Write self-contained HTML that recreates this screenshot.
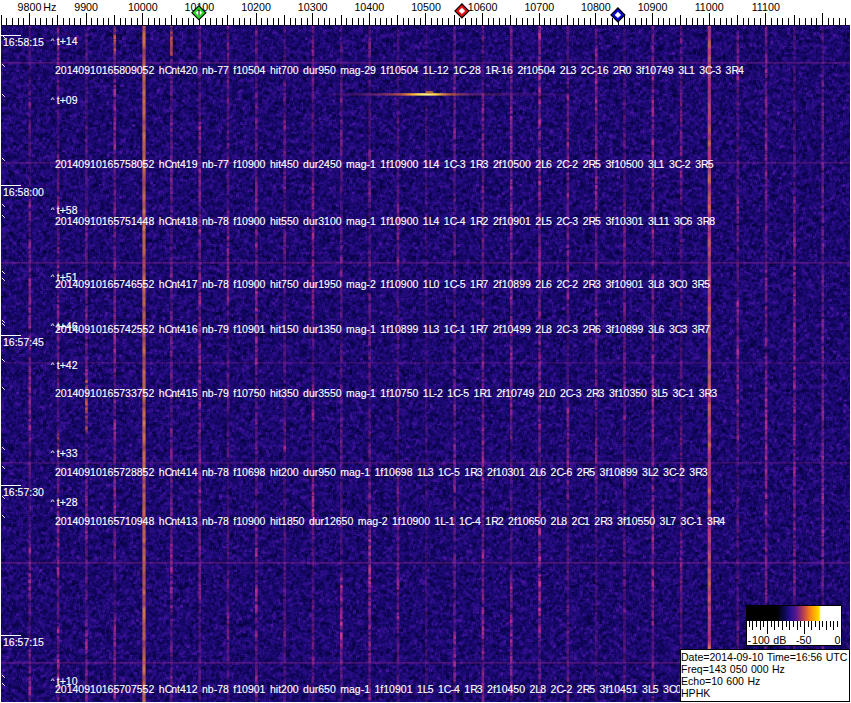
<!DOCTYPE html><html><head><meta charset="utf-8"><style>
html,body{margin:0;padding:0;width:851px;height:703px;overflow:hidden;background:#fff;}
body{position:relative;font-family:"Liberation Sans",sans-serif;}
.t b{font-weight:normal;letter-spacing:-1px;}
.t{position:absolute;white-space:pre;color:#fff;font-size:10.5px;line-height:12px;word-spacing:1.58px;-webkit-text-stroke:0.12px #fff;}
.k{position:absolute;white-space:pre;color:#000;font-size:10.7px;line-height:12px;word-spacing:0.5px;}
svg{position:absolute;left:0;top:0;}
</style></head><body>
<svg width="851" height="703" viewBox="0 0 851 703"><defs><filter id="nz" x="0" y="0" width="851" height="703" filterUnits="userSpaceOnUse" color-interpolation-filters="sRGB"><feTurbulence type="fractalNoise" baseFrequency="0.7 0.6" numOctaves="2" seed="3" result="t1"/><feColorMatrix in="t1" type="matrix" values="1 0 0 0 0  1 0 0 0 0  1 0 0 0 0  0 0 0 0 1" result="u1"/><feMorphology in="u1" operator="dilate" radius="1 1" result="d"/><feMorphology in="u1" operator="erode" radius="1 1" result="e"/><feComposite in="d" in2="e" operator="arithmetic" k2="0.5" k3="0.5" result="de"/><feComponentTransfer in="de" result="b1"><feFuncR type="linear" slope="2.6" intercept="-0.8"/><feFuncG type="linear" slope="2.6" intercept="-0.8"/><feFuncB type="linear" slope="2.6" intercept="-0.8"/></feComponentTransfer><feTurbulence type="fractalNoise" baseFrequency="0.14 0.18" numOctaves="1" seed="5" result="t2"/><feColorMatrix in="t2" type="matrix" values="1 0 0 0 0  1 0 0 0 0  1 0 0 0 0  0 0 0 0 1" result="u2"/><feComposite in="b1" in2="u2" operator="arithmetic" k1="0" k2="0.8" k3="0.45" k4="-0.125"/><feColorMatrix type="matrix" values="1 0 0 0 0  1 0 0 0 0  1 0 0 0 0  0 0 0 0 1"/><feComponentTransfer><feFuncR type="table" tableValues="0.015 0.02 0.03 0.045 0.07 0.105 0.15 0.21 0.27 0.32 0.36"/><feFuncG type="table" tableValues="0 0 0.006 0.012 0.024 0.035 0.048 0.064 0.08 0.095 0.11"/><feFuncB type="table" tableValues="0.2 0.22 0.25 0.3 0.365 0.44 0.51 0.565 0.605 0.635 0.655"/></feComponentTransfer></filter></defs><rect x="1" y="25" width="849" height="677" fill="#22127a"/><rect x="1" y="25" width="849" height="677" filter="url(#nz)"/></svg>
<svg width="851" height="703" viewBox="0 0 851 703"><defs><filter id="lb" x="0" y="0" width="851" height="703" filterUnits="userSpaceOnUse" color-interpolation-filters="sRGB"><feTurbulence type="fractalNoise" baseFrequency="0.045 0.3" numOctaves="2" seed="9" result="lt"/><feColorMatrix in="lt" type="matrix" values="0 0 0 0 0  0 0 0 0 0  0 0 0 0 0  2.2 0 0 0 -0.35" result="lm"/><feComposite in="SourceGraphic" in2="lm" operator="in" result="lc"/><feGaussianBlur in="lc" stdDeviation="0.55 0.4"/></filter><filter id="lb2" x="0" y="0" width="851" height="703" filterUnits="userSpaceOnUse"><feGaussianBlur stdDeviation="0.5 0.3"/></filter></defs><defs><linearGradient id="g0" x1="0" y1="0" x2="0" y2="1"><stop offset="0.000" stop-opacity="0.30" stop-color="#b42e8e"/><stop offset="0.009" stop-opacity="0.23" stop-color="#b42e8e"/><stop offset="0.018" stop-opacity="0.43" stop-color="#b42e8e"/><stop offset="0.027" stop-opacity="0.20" stop-color="#b42e8e"/><stop offset="0.036" stop-opacity="0.38" stop-color="#b42e8e"/><stop offset="0.045" stop-opacity="0.32" stop-color="#b42e8e"/><stop offset="0.054" stop-opacity="0.20" stop-color="#b42e8e"/><stop offset="0.062" stop-opacity="0.37" stop-color="#b42e8e"/><stop offset="0.071" stop-opacity="0.19" stop-color="#b42e8e"/><stop offset="0.080" stop-opacity="0.34" stop-color="#b42e8e"/><stop offset="0.089" stop-opacity="0.39" stop-color="#b42e8e"/><stop offset="0.098" stop-opacity="0.41" stop-color="#b42e8e"/><stop offset="0.107" stop-opacity="0.66" stop-color="#b42e8e"/><stop offset="0.116" stop-opacity="0.96" stop-color="#b42e8e"/><stop offset="0.125" stop-opacity="0.22" stop-color="#b42e8e"/><stop offset="0.134" stop-opacity="0.26" stop-color="#b42e8e"/><stop offset="0.143" stop-opacity="0.42" stop-color="#b42e8e"/><stop offset="0.152" stop-opacity="0.55" stop-color="#b42e8e"/><stop offset="0.161" stop-opacity="0.40" stop-color="#b42e8e"/><stop offset="0.170" stop-opacity="0.33" stop-color="#b42e8e"/><stop offset="0.179" stop-opacity="0.56" stop-color="#b42e8e"/><stop offset="0.188" stop-opacity="0.19" stop-color="#b42e8e"/><stop offset="0.196" stop-opacity="0.51" stop-color="#b42e8e"/><stop offset="0.205" stop-opacity="0.29" stop-color="#b42e8e"/><stop offset="0.214" stop-opacity="0.23" stop-color="#b42e8e"/><stop offset="0.223" stop-opacity="0.22" stop-color="#b42e8e"/><stop offset="0.232" stop-opacity="0.30" stop-color="#b42e8e"/><stop offset="0.241" stop-opacity="0.49" stop-color="#b42e8e"/><stop offset="0.250" stop-opacity="0.25" stop-color="#b42e8e"/><stop offset="0.259" stop-opacity="0.77" stop-color="#b42e8e"/><stop offset="0.268" stop-opacity="0.82" stop-color="#b42e8e"/><stop offset="0.277" stop-opacity="0.62" stop-color="#b42e8e"/><stop offset="0.286" stop-opacity="0.75" stop-color="#b42e8e"/><stop offset="0.295" stop-opacity="0.38" stop-color="#b42e8e"/><stop offset="0.304" stop-opacity="0.38" stop-color="#b42e8e"/><stop offset="0.312" stop-opacity="0.49" stop-color="#b42e8e"/><stop offset="0.321" stop-opacity="0.85" stop-color="#b42e8e"/><stop offset="0.330" stop-opacity="0.66" stop-color="#b42e8e"/><stop offset="0.339" stop-opacity="0.57" stop-color="#b42e8e"/><stop offset="0.348" stop-opacity="0.78" stop-color="#b42e8e"/><stop offset="0.357" stop-opacity="0.68" stop-color="#b42e8e"/><stop offset="0.366" stop-opacity="0.56" stop-color="#b42e8e"/><stop offset="0.375" stop-opacity="0.93" stop-color="#b42e8e"/><stop offset="0.384" stop-opacity="0.86" stop-color="#b42e8e"/><stop offset="0.393" stop-opacity="0.52" stop-color="#b42e8e"/><stop offset="0.402" stop-opacity="0.77" stop-color="#b42e8e"/><stop offset="0.411" stop-opacity="0.73" stop-color="#b42e8e"/><stop offset="0.420" stop-opacity="0.99" stop-color="#b42e8e"/><stop offset="0.429" stop-opacity="0.88" stop-color="#b42e8e"/><stop offset="0.438" stop-opacity="0.55" stop-color="#b42e8e"/><stop offset="0.446" stop-opacity="1.00" stop-color="#b42e8e"/><stop offset="0.455" stop-opacity="0.43" stop-color="#b42e8e"/><stop offset="0.464" stop-opacity="0.65" stop-color="#b42e8e"/><stop offset="0.473" stop-opacity="0.91" stop-color="#b42e8e"/><stop offset="0.482" stop-opacity="0.45" stop-color="#b42e8e"/><stop offset="0.491" stop-opacity="0.70" stop-color="#b42e8e"/><stop offset="0.500" stop-opacity="0.37" stop-color="#b42e8e"/><stop offset="0.509" stop-opacity="0.84" stop-color="#b42e8e"/><stop offset="0.518" stop-opacity="0.91" stop-color="#b42e8e"/><stop offset="0.527" stop-opacity="0.77" stop-color="#b42e8e"/><stop offset="0.536" stop-opacity="0.99" stop-color="#b42e8e"/><stop offset="0.545" stop-opacity="0.57" stop-color="#b42e8e"/><stop offset="0.554" stop-opacity="0.86" stop-color="#b42e8e"/><stop offset="0.562" stop-opacity="0.78" stop-color="#b42e8e"/><stop offset="0.571" stop-opacity="0.77" stop-color="#b42e8e"/><stop offset="0.580" stop-opacity="0.68" stop-color="#b42e8e"/><stop offset="0.589" stop-opacity="0.97" stop-color="#b42e8e"/><stop offset="0.598" stop-opacity="1.00" stop-color="#b42e8e"/><stop offset="0.607" stop-opacity="0.69" stop-color="#b42e8e"/><stop offset="0.616" stop-opacity="0.43" stop-color="#b42e8e"/><stop offset="0.625" stop-opacity="0.20" stop-color="#b42e8e"/><stop offset="0.634" stop-opacity="0.45" stop-color="#b42e8e"/><stop offset="0.643" stop-opacity="0.43" stop-color="#b42e8e"/><stop offset="0.652" stop-opacity="0.56" stop-color="#b42e8e"/><stop offset="0.661" stop-opacity="0.50" stop-color="#b42e8e"/><stop offset="0.670" stop-opacity="0.29" stop-color="#b42e8e"/><stop offset="0.679" stop-opacity="0.33" stop-color="#b42e8e"/><stop offset="0.688" stop-opacity="0.44" stop-color="#b42e8e"/><stop offset="0.696" stop-opacity="0.18" stop-color="#b42e8e"/><stop offset="0.705" stop-opacity="0.36" stop-color="#b42e8e"/><stop offset="0.714" stop-opacity="0.24" stop-color="#b42e8e"/><stop offset="0.723" stop-opacity="0.22" stop-color="#b42e8e"/><stop offset="0.732" stop-opacity="0.20" stop-color="#b42e8e"/><stop offset="0.741" stop-opacity="0.48" stop-color="#b42e8e"/><stop offset="0.750" stop-opacity="0.23" stop-color="#b42e8e"/><stop offset="0.759" stop-opacity="0.52" stop-color="#b42e8e"/><stop offset="0.768" stop-opacity="0.63" stop-color="#b42e8e"/><stop offset="0.777" stop-opacity="0.99" stop-color="#b42e8e"/><stop offset="0.786" stop-opacity="0.40" stop-color="#b42e8e"/><stop offset="0.795" stop-opacity="0.67" stop-color="#b42e8e"/><stop offset="0.804" stop-opacity="0.75" stop-color="#b42e8e"/><stop offset="0.812" stop-opacity="1.00" stop-color="#b42e8e"/><stop offset="0.821" stop-opacity="0.95" stop-color="#b42e8e"/><stop offset="0.830" stop-opacity="0.99" stop-color="#b42e8e"/><stop offset="0.839" stop-opacity="0.55" stop-color="#b42e8e"/><stop offset="0.848" stop-opacity="0.65" stop-color="#b42e8e"/><stop offset="0.857" stop-opacity="0.32" stop-color="#b42e8e"/><stop offset="0.866" stop-opacity="0.52" stop-color="#b42e8e"/><stop offset="0.875" stop-opacity="0.55" stop-color="#b42e8e"/><stop offset="0.884" stop-opacity="0.23" stop-color="#b42e8e"/><stop offset="0.893" stop-opacity="0.24" stop-color="#b42e8e"/><stop offset="0.902" stop-opacity="0.27" stop-color="#b42e8e"/><stop offset="0.911" stop-opacity="0.27" stop-color="#b42e8e"/><stop offset="0.920" stop-opacity="0.36" stop-color="#b42e8e"/><stop offset="0.929" stop-opacity="0.78" stop-color="#b42e8e"/><stop offset="0.938" stop-opacity="0.53" stop-color="#b42e8e"/><stop offset="0.946" stop-opacity="0.34" stop-color="#b42e8e"/><stop offset="0.955" stop-opacity="0.65" stop-color="#b42e8e"/><stop offset="0.964" stop-opacity="0.61" stop-color="#b42e8e"/><stop offset="0.973" stop-opacity="0.76" stop-color="#b42e8e"/><stop offset="0.982" stop-opacity="1.00" stop-color="#b42e8e"/><stop offset="0.991" stop-opacity="0.86" stop-color="#b42e8e"/><stop offset="1.000" stop-opacity="0.38" stop-color="#b42e8e"/></linearGradient></defs><defs><linearGradient id="g1" x1="0" y1="0" x2="0" y2="1"><stop offset="0.000" stop-opacity="0.61" stop-color="#b42e8e"/><stop offset="0.009" stop-opacity="0.64" stop-color="#b42e8e"/><stop offset="0.018" stop-opacity="0.29" stop-color="#b42e8e"/><stop offset="0.027" stop-opacity="0.77" stop-color="#b42e8e"/><stop offset="0.036" stop-opacity="0.70" stop-color="#b42e8e"/><stop offset="0.045" stop-opacity="0.75" stop-color="#b42e8e"/><stop offset="0.054" stop-opacity="0.71" stop-color="#b42e8e"/><stop offset="0.062" stop-opacity="0.48" stop-color="#b42e8e"/><stop offset="0.071" stop-opacity="0.48" stop-color="#b42e8e"/><stop offset="0.080" stop-opacity="0.32" stop-color="#b42e8e"/><stop offset="0.089" stop-opacity="0.62" stop-color="#b42e8e"/><stop offset="0.098" stop-opacity="0.29" stop-color="#b42e8e"/><stop offset="0.107" stop-opacity="0.29" stop-color="#b42e8e"/><stop offset="0.116" stop-opacity="0.38" stop-color="#b42e8e"/><stop offset="0.125" stop-opacity="0.35" stop-color="#b42e8e"/><stop offset="0.134" stop-opacity="0.45" stop-color="#b42e8e"/><stop offset="0.143" stop-opacity="0.29" stop-color="#b42e8e"/><stop offset="0.152" stop-opacity="0.26" stop-color="#b42e8e"/><stop offset="0.161" stop-opacity="0.34" stop-color="#b42e8e"/><stop offset="0.170" stop-opacity="0.31" stop-color="#b42e8e"/><stop offset="0.179" stop-opacity="0.46" stop-color="#b42e8e"/><stop offset="0.188" stop-opacity="0.27" stop-color="#b42e8e"/><stop offset="0.196" stop-opacity="0.75" stop-color="#b42e8e"/><stop offset="0.205" stop-opacity="0.61" stop-color="#b42e8e"/><stop offset="0.214" stop-opacity="0.34" stop-color="#b42e8e"/><stop offset="0.223" stop-opacity="0.40" stop-color="#b42e8e"/><stop offset="0.232" stop-opacity="0.45" stop-color="#b42e8e"/><stop offset="0.241" stop-opacity="0.46" stop-color="#b42e8e"/><stop offset="0.250" stop-opacity="0.33" stop-color="#b42e8e"/><stop offset="0.259" stop-opacity="0.97" stop-color="#b42e8e"/><stop offset="0.268" stop-opacity="1.00" stop-color="#b42e8e"/><stop offset="0.277" stop-opacity="0.69" stop-color="#b42e8e"/><stop offset="0.286" stop-opacity="0.53" stop-color="#b42e8e"/><stop offset="0.295" stop-opacity="0.31" stop-color="#b42e8e"/><stop offset="0.304" stop-opacity="0.31" stop-color="#b42e8e"/><stop offset="0.312" stop-opacity="0.45" stop-color="#b42e8e"/><stop offset="0.321" stop-opacity="0.41" stop-color="#b42e8e"/><stop offset="0.330" stop-opacity="0.73" stop-color="#b42e8e"/><stop offset="0.339" stop-opacity="0.35" stop-color="#b42e8e"/><stop offset="0.348" stop-opacity="0.27" stop-color="#b42e8e"/><stop offset="0.357" stop-opacity="0.80" stop-color="#b42e8e"/><stop offset="0.366" stop-opacity="0.56" stop-color="#b42e8e"/><stop offset="0.375" stop-opacity="0.34" stop-color="#b42e8e"/><stop offset="0.384" stop-opacity="0.57" stop-color="#b42e8e"/><stop offset="0.393" stop-opacity="0.27" stop-color="#b42e8e"/><stop offset="0.402" stop-opacity="0.56" stop-color="#b42e8e"/><stop offset="0.411" stop-opacity="0.81" stop-color="#b42e8e"/><stop offset="0.420" stop-opacity="0.75" stop-color="#b42e8e"/><stop offset="0.429" stop-opacity="0.65" stop-color="#b42e8e"/><stop offset="0.438" stop-opacity="0.41" stop-color="#b42e8e"/><stop offset="0.446" stop-opacity="0.47" stop-color="#b42e8e"/><stop offset="0.455" stop-opacity="0.35" stop-color="#b42e8e"/><stop offset="0.464" stop-opacity="0.70" stop-color="#b42e8e"/><stop offset="0.473" stop-opacity="0.56" stop-color="#b42e8e"/><stop offset="0.482" stop-opacity="0.70" stop-color="#b42e8e"/><stop offset="0.491" stop-opacity="0.44" stop-color="#b42e8e"/><stop offset="0.500" stop-opacity="0.38" stop-color="#b42e8e"/><stop offset="0.509" stop-opacity="0.49" stop-color="#b42e8e"/><stop offset="0.518" stop-opacity="0.56" stop-color="#b42e8e"/><stop offset="0.527" stop-opacity="0.51" stop-color="#b42e8e"/><stop offset="0.536" stop-opacity="0.49" stop-color="#b42e8e"/><stop offset="0.545" stop-opacity="0.49" stop-color="#b42e8e"/><stop offset="0.554" stop-opacity="0.46" stop-color="#b42e8e"/><stop offset="0.562" stop-opacity="0.26" stop-color="#b42e8e"/><stop offset="0.571" stop-opacity="0.38" stop-color="#b42e8e"/><stop offset="0.580" stop-opacity="0.31" stop-color="#b42e8e"/><stop offset="0.589" stop-opacity="0.19" stop-color="#b42e8e"/><stop offset="0.598" stop-opacity="0.19" stop-color="#b42e8e"/><stop offset="0.607" stop-opacity="0.68" stop-color="#d0584e"/><stop offset="0.616" stop-opacity="0.66" stop-color="#d0584e"/><stop offset="0.625" stop-opacity="0.45" stop-color="#b42e8e"/><stop offset="0.634" stop-opacity="0.55" stop-color="#b42e8e"/><stop offset="0.643" stop-opacity="0.35" stop-color="#b42e8e"/><stop offset="0.652" stop-opacity="0.54" stop-color="#b42e8e"/><stop offset="0.661" stop-opacity="0.56" stop-color="#b42e8e"/><stop offset="0.670" stop-opacity="0.55" stop-color="#b42e8e"/><stop offset="0.679" stop-opacity="0.61" stop-color="#b42e8e"/><stop offset="0.688" stop-opacity="0.50" stop-color="#b42e8e"/><stop offset="0.696" stop-opacity="0.51" stop-color="#b42e8e"/><stop offset="0.705" stop-opacity="0.49" stop-color="#b42e8e"/><stop offset="0.714" stop-opacity="0.49" stop-color="#b42e8e"/><stop offset="0.723" stop-opacity="0.81" stop-color="#b42e8e"/><stop offset="0.732" stop-opacity="1.00" stop-color="#b42e8e"/><stop offset="0.741" stop-opacity="0.97" stop-color="#b42e8e"/><stop offset="0.750" stop-opacity="0.70" stop-color="#b42e8e"/><stop offset="0.759" stop-opacity="0.83" stop-color="#b42e8e"/><stop offset="0.768" stop-opacity="0.94" stop-color="#b42e8e"/><stop offset="0.777" stop-opacity="0.40" stop-color="#b42e8e"/><stop offset="0.786" stop-opacity="0.83" stop-color="#b42e8e"/><stop offset="0.795" stop-opacity="1.00" stop-color="#b42e8e"/><stop offset="0.804" stop-opacity="0.92" stop-color="#b42e8e"/><stop offset="0.812" stop-opacity="0.90" stop-color="#b42e8e"/><stop offset="0.821" stop-opacity="0.36" stop-color="#b42e8e"/><stop offset="0.830" stop-opacity="0.25" stop-color="#b42e8e"/><stop offset="0.839" stop-opacity="0.48" stop-color="#b42e8e"/><stop offset="0.848" stop-opacity="0.31" stop-color="#b42e8e"/><stop offset="0.857" stop-opacity="0.49" stop-color="#b42e8e"/><stop offset="0.866" stop-opacity="0.55" stop-color="#b42e8e"/><stop offset="0.875" stop-opacity="0.33" stop-color="#b42e8e"/><stop offset="0.884" stop-opacity="0.64" stop-color="#b42e8e"/><stop offset="0.893" stop-opacity="1.00" stop-color="#b42e8e"/><stop offset="0.902" stop-opacity="0.88" stop-color="#b42e8e"/><stop offset="0.911" stop-opacity="0.47" stop-color="#b42e8e"/><stop offset="0.920" stop-opacity="0.43" stop-color="#b42e8e"/><stop offset="0.929" stop-opacity="0.45" stop-color="#b42e8e"/><stop offset="0.938" stop-opacity="1.00" stop-color="#b42e8e"/><stop offset="0.946" stop-opacity="0.94" stop-color="#b42e8e"/><stop offset="0.955" stop-opacity="0.45" stop-color="#b42e8e"/><stop offset="0.964" stop-opacity="0.96" stop-color="#b42e8e"/><stop offset="0.973" stop-opacity="1.00" stop-color="#b42e8e"/><stop offset="0.982" stop-opacity="0.83" stop-color="#b42e8e"/><stop offset="0.991" stop-opacity="0.60" stop-color="#b42e8e"/><stop offset="1.000" stop-opacity="0.39" stop-color="#b42e8e"/></linearGradient></defs><defs><linearGradient id="g2" x1="0" y1="0" x2="0" y2="1"><stop offset="0.000" stop-opacity="0.23" stop-color="#b42e8e"/><stop offset="0.009" stop-opacity="0.18" stop-color="#b42e8e"/><stop offset="0.018" stop-opacity="0.55" stop-color="#b42e8e"/><stop offset="0.027" stop-opacity="0.43" stop-color="#b42e8e"/><stop offset="0.036" stop-opacity="0.38" stop-color="#b42e8e"/><stop offset="0.045" stop-opacity="0.54" stop-color="#b42e8e"/><stop offset="0.054" stop-opacity="0.34" stop-color="#b42e8e"/><stop offset="0.062" stop-opacity="0.52" stop-color="#b42e8e"/><stop offset="0.071" stop-opacity="0.50" stop-color="#b42e8e"/><stop offset="0.080" stop-opacity="0.26" stop-color="#b42e8e"/><stop offset="0.089" stop-opacity="0.27" stop-color="#b42e8e"/><stop offset="0.098" stop-opacity="0.29" stop-color="#b42e8e"/><stop offset="0.107" stop-opacity="0.27" stop-color="#b42e8e"/><stop offset="0.116" stop-opacity="0.40" stop-color="#b42e8e"/><stop offset="0.125" stop-opacity="0.28" stop-color="#b42e8e"/><stop offset="0.134" stop-opacity="0.34" stop-color="#b42e8e"/><stop offset="0.143" stop-opacity="0.23" stop-color="#b42e8e"/><stop offset="0.152" stop-opacity="0.53" stop-color="#b42e8e"/><stop offset="0.161" stop-opacity="0.31" stop-color="#b42e8e"/><stop offset="0.170" stop-opacity="0.35" stop-color="#b42e8e"/><stop offset="0.179" stop-opacity="0.40" stop-color="#b42e8e"/><stop offset="0.188" stop-opacity="0.53" stop-color="#b42e8e"/><stop offset="0.196" stop-opacity="0.34" stop-color="#b42e8e"/><stop offset="0.205" stop-opacity="0.53" stop-color="#b42e8e"/><stop offset="0.214" stop-opacity="0.37" stop-color="#b42e8e"/><stop offset="0.223" stop-opacity="0.38" stop-color="#b42e8e"/><stop offset="0.232" stop-opacity="0.38" stop-color="#b42e8e"/><stop offset="0.241" stop-opacity="0.18" stop-color="#b42e8e"/><stop offset="0.250" stop-opacity="0.35" stop-color="#b42e8e"/><stop offset="0.259" stop-opacity="0.36" stop-color="#b42e8e"/><stop offset="0.268" stop-opacity="0.26" stop-color="#b42e8e"/><stop offset="0.277" stop-opacity="0.71" stop-color="#b42e8e"/><stop offset="0.286" stop-opacity="0.35" stop-color="#b42e8e"/><stop offset="0.295" stop-opacity="0.53" stop-color="#b42e8e"/><stop offset="0.304" stop-opacity="0.67" stop-color="#b42e8e"/><stop offset="0.312" stop-opacity="0.57" stop-color="#b42e8e"/><stop offset="0.321" stop-opacity="0.44" stop-color="#b42e8e"/><stop offset="0.330" stop-opacity="0.55" stop-color="#b42e8e"/><stop offset="0.339" stop-opacity="0.57" stop-color="#b42e8e"/><stop offset="0.348" stop-opacity="0.70" stop-color="#b42e8e"/><stop offset="0.357" stop-opacity="0.32" stop-color="#b42e8e"/><stop offset="0.366" stop-opacity="0.58" stop-color="#b42e8e"/><stop offset="0.375" stop-opacity="0.40" stop-color="#b42e8e"/><stop offset="0.384" stop-opacity="0.41" stop-color="#b42e8e"/><stop offset="0.393" stop-opacity="0.70" stop-color="#b42e8e"/><stop offset="0.402" stop-opacity="0.55" stop-color="#b42e8e"/><stop offset="0.411" stop-opacity="0.58" stop-color="#b42e8e"/><stop offset="0.420" stop-opacity="0.69" stop-color="#b42e8e"/><stop offset="0.429" stop-opacity="0.78" stop-color="#b42e8e"/><stop offset="0.438" stop-opacity="0.51" stop-color="#b42e8e"/><stop offset="0.446" stop-opacity="0.61" stop-color="#b42e8e"/><stop offset="0.455" stop-opacity="0.54" stop-color="#b42e8e"/><stop offset="0.464" stop-opacity="0.55" stop-color="#b42e8e"/><stop offset="0.473" stop-opacity="0.65" stop-color="#b42e8e"/><stop offset="0.482" stop-opacity="0.51" stop-color="#b42e8e"/><stop offset="0.491" stop-opacity="0.56" stop-color="#b42e8e"/><stop offset="0.500" stop-opacity="0.53" stop-color="#b42e8e"/><stop offset="0.509" stop-opacity="1.00" stop-color="#b42e8e"/><stop offset="0.518" stop-opacity="0.86" stop-color="#b42e8e"/><stop offset="0.527" stop-opacity="1.00" stop-color="#d0584e"/><stop offset="0.536" stop-opacity="1.00" stop-color="#d0584e"/><stop offset="0.545" stop-opacity="0.74" stop-color="#d0584e"/><stop offset="0.554" stop-opacity="1.00" stop-color="#d0584e"/><stop offset="0.562" stop-opacity="1.00" stop-color="#d0584e"/><stop offset="0.571" stop-opacity="1.00" stop-color="#d0584e"/><stop offset="0.580" stop-opacity="0.61" stop-color="#d0584e"/><stop offset="0.589" stop-opacity="0.59" stop-color="#d0584e"/><stop offset="0.598" stop-opacity="0.93" stop-color="#d0584e"/><stop offset="0.607" stop-opacity="0.20" stop-color="#b42e8e"/><stop offset="0.616" stop-opacity="0.27" stop-color="#b42e8e"/><stop offset="0.625" stop-opacity="0.20" stop-color="#b42e8e"/><stop offset="0.634" stop-opacity="0.44" stop-color="#b42e8e"/><stop offset="0.643" stop-opacity="0.48" stop-color="#b42e8e"/><stop offset="0.652" stop-opacity="0.53" stop-color="#b42e8e"/><stop offset="0.661" stop-opacity="0.24" stop-color="#b42e8e"/><stop offset="0.670" stop-opacity="0.45" stop-color="#b42e8e"/><stop offset="0.679" stop-opacity="0.83" stop-color="#b42e8e"/><stop offset="0.688" stop-opacity="0.44" stop-color="#b42e8e"/><stop offset="0.696" stop-opacity="1.00" stop-color="#b42e8e"/><stop offset="0.705" stop-opacity="1.00" stop-color="#b42e8e"/><stop offset="0.714" stop-opacity="0.50" stop-color="#b42e8e"/><stop offset="0.723" stop-opacity="1.00" stop-color="#b42e8e"/><stop offset="0.732" stop-opacity="0.64" stop-color="#b42e8e"/><stop offset="0.741" stop-opacity="0.70" stop-color="#b42e8e"/><stop offset="0.750" stop-opacity="1.00" stop-color="#b42e8e"/><stop offset="0.759" stop-opacity="0.73" stop-color="#b42e8e"/><stop offset="0.768" stop-opacity="0.35" stop-color="#b42e8e"/><stop offset="0.777" stop-opacity="0.50" stop-color="#b42e8e"/><stop offset="0.786" stop-opacity="0.55" stop-color="#b42e8e"/><stop offset="0.795" stop-opacity="0.45" stop-color="#b42e8e"/><stop offset="0.804" stop-opacity="0.37" stop-color="#b42e8e"/><stop offset="0.812" stop-opacity="0.44" stop-color="#b42e8e"/><stop offset="0.821" stop-opacity="0.67" stop-color="#b42e8e"/><stop offset="0.830" stop-opacity="0.27" stop-color="#b42e8e"/><stop offset="0.839" stop-opacity="0.57" stop-color="#b42e8e"/><stop offset="0.848" stop-opacity="0.51" stop-color="#b42e8e"/><stop offset="0.857" stop-opacity="0.18" stop-color="#b42e8e"/><stop offset="0.866" stop-opacity="0.30" stop-color="#b42e8e"/><stop offset="0.875" stop-opacity="0.42" stop-color="#b42e8e"/><stop offset="0.884" stop-opacity="0.72" stop-color="#b42e8e"/><stop offset="0.893" stop-opacity="0.39" stop-color="#b42e8e"/><stop offset="0.902" stop-opacity="1.00" stop-color="#b42e8e"/><stop offset="0.911" stop-opacity="0.93" stop-color="#b42e8e"/><stop offset="0.920" stop-opacity="1.00" stop-color="#b42e8e"/><stop offset="0.929" stop-opacity="0.42" stop-color="#b42e8e"/><stop offset="0.938" stop-opacity="0.54" stop-color="#b42e8e"/><stop offset="0.946" stop-opacity="0.37" stop-color="#b42e8e"/><stop offset="0.955" stop-opacity="0.92" stop-color="#b42e8e"/><stop offset="0.964" stop-opacity="0.54" stop-color="#b42e8e"/><stop offset="0.973" stop-opacity="0.43" stop-color="#b42e8e"/><stop offset="0.982" stop-opacity="0.65" stop-color="#b42e8e"/><stop offset="0.991" stop-opacity="1.00" stop-color="#b42e8e"/><stop offset="1.000" stop-opacity="0.49" stop-color="#b42e8e"/></linearGradient></defs><defs><linearGradient id="g3" x1="0" y1="0" x2="0" y2="1"><stop offset="0.000" stop-opacity="0.74" stop-color="#d0584e"/><stop offset="0.009" stop-opacity="0.62" stop-color="#d0584e"/><stop offset="0.018" stop-opacity="1.00" stop-color="#d0584e"/><stop offset="0.027" stop-opacity="1.00" stop-color="#d0584e"/><stop offset="0.036" stop-opacity="1.00" stop-color="#d0584e"/><stop offset="0.045" stop-opacity="0.56" stop-color="#d0584e"/><stop offset="0.054" stop-opacity="0.45" stop-color="#b42e8e"/><stop offset="0.062" stop-opacity="1.00" stop-color="#b42e8e"/><stop offset="0.071" stop-opacity="0.78" stop-color="#b42e8e"/><stop offset="0.080" stop-opacity="0.47" stop-color="#b42e8e"/><stop offset="0.089" stop-opacity="1.00" stop-color="#b42e8e"/><stop offset="0.098" stop-opacity="0.97" stop-color="#b42e8e"/><stop offset="0.107" stop-opacity="1.00" stop-color="#b42e8e"/><stop offset="0.116" stop-opacity="0.48" stop-color="#b42e8e"/><stop offset="0.125" stop-opacity="1.00" stop-color="#b42e8e"/><stop offset="0.134" stop-opacity="0.46" stop-color="#b42e8e"/><stop offset="0.143" stop-opacity="1.00" stop-color="#b42e8e"/><stop offset="0.152" stop-opacity="0.81" stop-color="#b42e8e"/><stop offset="0.161" stop-opacity="0.71" stop-color="#b42e8e"/><stop offset="0.170" stop-opacity="0.90" stop-color="#b42e8e"/><stop offset="0.179" stop-opacity="1.00" stop-color="#b42e8e"/><stop offset="0.188" stop-opacity="0.64" stop-color="#b42e8e"/><stop offset="0.196" stop-opacity="0.52" stop-color="#b42e8e"/><stop offset="0.205" stop-opacity="0.87" stop-color="#b42e8e"/><stop offset="0.214" stop-opacity="0.62" stop-color="#b42e8e"/><stop offset="0.223" stop-opacity="0.50" stop-color="#b42e8e"/><stop offset="0.232" stop-opacity="0.55" stop-color="#b42e8e"/><stop offset="0.241" stop-opacity="0.45" stop-color="#b42e8e"/><stop offset="0.250" stop-opacity="0.58" stop-color="#b42e8e"/><stop offset="0.259" stop-opacity="0.57" stop-color="#b42e8e"/><stop offset="0.268" stop-opacity="0.57" stop-color="#b42e8e"/><stop offset="0.277" stop-opacity="0.91" stop-color="#b42e8e"/><stop offset="0.286" stop-opacity="0.55" stop-color="#b42e8e"/><stop offset="0.295" stop-opacity="0.71" stop-color="#b42e8e"/><stop offset="0.304" stop-opacity="0.47" stop-color="#b42e8e"/><stop offset="0.312" stop-opacity="0.60" stop-color="#b42e8e"/><stop offset="0.321" stop-opacity="0.35" stop-color="#b42e8e"/><stop offset="0.330" stop-opacity="0.53" stop-color="#b42e8e"/><stop offset="0.339" stop-opacity="0.35" stop-color="#b42e8e"/><stop offset="0.348" stop-opacity="0.89" stop-color="#b42e8e"/><stop offset="0.357" stop-opacity="0.75" stop-color="#b42e8e"/><stop offset="0.366" stop-opacity="0.48" stop-color="#b42e8e"/><stop offset="0.375" stop-opacity="0.69" stop-color="#b42e8e"/><stop offset="0.384" stop-opacity="1.00" stop-color="#b42e8e"/><stop offset="0.393" stop-opacity="0.42" stop-color="#b42e8e"/><stop offset="0.402" stop-opacity="0.95" stop-color="#b42e8e"/><stop offset="0.411" stop-opacity="0.66" stop-color="#b42e8e"/><stop offset="0.420" stop-opacity="0.71" stop-color="#b42e8e"/><stop offset="0.429" stop-opacity="0.96" stop-color="#b42e8e"/><stop offset="0.438" stop-opacity="0.63" stop-color="#b42e8e"/><stop offset="0.446" stop-opacity="0.72" stop-color="#b42e8e"/><stop offset="0.455" stop-opacity="0.85" stop-color="#b42e8e"/><stop offset="0.464" stop-opacity="1.00" stop-color="#b42e8e"/><stop offset="0.473" stop-opacity="0.59" stop-color="#b42e8e"/><stop offset="0.482" stop-opacity="0.96" stop-color="#b42e8e"/><stop offset="0.491" stop-opacity="0.87" stop-color="#b42e8e"/><stop offset="0.500" stop-opacity="0.81" stop-color="#b42e8e"/><stop offset="0.509" stop-opacity="0.64" stop-color="#b42e8e"/><stop offset="0.518" stop-opacity="0.60" stop-color="#b42e8e"/><stop offset="0.527" stop-opacity="0.38" stop-color="#b42e8e"/><stop offset="0.536" stop-opacity="0.43" stop-color="#b42e8e"/><stop offset="0.545" stop-opacity="0.39" stop-color="#b42e8e"/><stop offset="0.554" stop-opacity="0.89" stop-color="#b42e8e"/><stop offset="0.562" stop-opacity="0.53" stop-color="#b42e8e"/><stop offset="0.571" stop-opacity="0.46" stop-color="#b42e8e"/><stop offset="0.580" stop-opacity="0.40" stop-color="#b42e8e"/><stop offset="0.589" stop-opacity="0.97" stop-color="#b42e8e"/><stop offset="0.598" stop-opacity="0.99" stop-color="#b42e8e"/><stop offset="0.607" stop-opacity="0.84" stop-color="#b42e8e"/><stop offset="0.616" stop-opacity="0.55" stop-color="#b42e8e"/><stop offset="0.625" stop-opacity="0.52" stop-color="#b42e8e"/><stop offset="0.634" stop-opacity="0.56" stop-color="#b42e8e"/><stop offset="0.643" stop-opacity="0.68" stop-color="#b42e8e"/><stop offset="0.652" stop-opacity="0.46" stop-color="#b42e8e"/><stop offset="0.661" stop-opacity="0.67" stop-color="#b42e8e"/><stop offset="0.670" stop-opacity="0.53" stop-color="#b42e8e"/><stop offset="0.679" stop-opacity="1.00" stop-color="#b42e8e"/><stop offset="0.688" stop-opacity="1.00" stop-color="#b42e8e"/><stop offset="0.696" stop-opacity="0.75" stop-color="#b42e8e"/><stop offset="0.705" stop-opacity="0.52" stop-color="#b42e8e"/><stop offset="0.714" stop-opacity="1.00" stop-color="#b42e8e"/><stop offset="0.723" stop-opacity="0.57" stop-color="#b42e8e"/><stop offset="0.732" stop-opacity="0.60" stop-color="#b42e8e"/><stop offset="0.741" stop-opacity="0.34" stop-color="#b42e8e"/><stop offset="0.750" stop-opacity="0.62" stop-color="#b42e8e"/><stop offset="0.759" stop-opacity="0.69" stop-color="#b42e8e"/><stop offset="0.768" stop-opacity="0.71" stop-color="#b42e8e"/><stop offset="0.777" stop-opacity="0.49" stop-color="#b42e8e"/><stop offset="0.786" stop-opacity="0.72" stop-color="#b42e8e"/><stop offset="0.795" stop-opacity="0.18" stop-color="#b42e8e"/><stop offset="0.804" stop-opacity="0.28" stop-color="#b42e8e"/><stop offset="0.812" stop-opacity="0.21" stop-color="#b42e8e"/><stop offset="0.821" stop-opacity="0.33" stop-color="#b42e8e"/><stop offset="0.830" stop-opacity="0.19" stop-color="#b42e8e"/><stop offset="0.839" stop-opacity="0.18" stop-color="#b42e8e"/><stop offset="0.848" stop-opacity="0.29" stop-color="#b42e8e"/><stop offset="0.857" stop-opacity="0.27" stop-color="#b42e8e"/><stop offset="0.866" stop-opacity="0.40" stop-color="#b42e8e"/><stop offset="0.875" stop-opacity="0.38" stop-color="#b42e8e"/><stop offset="0.884" stop-opacity="0.90" stop-color="#b42e8e"/><stop offset="0.893" stop-opacity="0.83" stop-color="#b42e8e"/><stop offset="0.902" stop-opacity="0.87" stop-color="#b42e8e"/><stop offset="0.911" stop-opacity="1.00" stop-color="#b42e8e"/><stop offset="0.920" stop-opacity="0.63" stop-color="#b42e8e"/><stop offset="0.929" stop-opacity="0.58" stop-color="#b42e8e"/><stop offset="0.938" stop-opacity="1.00" stop-color="#b42e8e"/><stop offset="0.946" stop-opacity="0.45" stop-color="#b42e8e"/><stop offset="0.955" stop-opacity="0.88" stop-color="#b42e8e"/><stop offset="0.964" stop-opacity="0.82" stop-color="#b42e8e"/><stop offset="0.973" stop-opacity="0.37" stop-color="#b42e8e"/><stop offset="0.982" stop-opacity="0.96" stop-color="#b42e8e"/><stop offset="0.991" stop-opacity="1.00" stop-color="#b42e8e"/><stop offset="1.000" stop-opacity="0.42" stop-color="#b42e8e"/></linearGradient></defs><defs><linearGradient id="g4" x1="0" y1="0" x2="0" y2="1"><stop offset="0.000" stop-opacity="0.91" stop-color="#dc7448"/><stop offset="0.006" stop-opacity="0.84" stop-color="#b85058"/><stop offset="0.013" stop-opacity="0.91" stop-color="#dc7448"/><stop offset="0.019" stop-opacity="0.91" stop-color="#dc7448"/><stop offset="0.025" stop-opacity="0.93" stop-color="#dc7448"/><stop offset="0.031" stop-opacity="0.88" stop-color="#dc7448"/><stop offset="0.037" stop-opacity="0.73" stop-color="#b85058"/><stop offset="0.044" stop-opacity="0.80" stop-color="#b85058"/><stop offset="0.050" stop-opacity="0.91" stop-color="#b85058"/><stop offset="0.056" stop-opacity="0.86" stop-color="#dc7448"/><stop offset="0.062" stop-opacity="0.88" stop-color="#dc7448"/><stop offset="0.069" stop-opacity="0.72" stop-color="#dc7448"/><stop offset="0.075" stop-opacity="0.89" stop-color="#dc7448"/><stop offset="0.081" stop-opacity="0.84" stop-color="#dc7448"/><stop offset="0.087" stop-opacity="0.74" stop-color="#dc7448"/><stop offset="0.094" stop-opacity="0.78" stop-color="#dc7448"/><stop offset="0.100" stop-opacity="0.78" stop-color="#f09050"/><stop offset="0.106" stop-opacity="0.77" stop-color="#dc7448"/><stop offset="0.113" stop-opacity="0.94" stop-color="#dc7448"/><stop offset="0.119" stop-opacity="0.81" stop-color="#dc7448"/><stop offset="0.125" stop-opacity="0.88" stop-color="#dc7448"/><stop offset="0.131" stop-opacity="0.86" stop-color="#dc7448"/><stop offset="0.138" stop-opacity="0.74" stop-color="#dc7448"/><stop offset="0.144" stop-opacity="0.78" stop-color="#b85058"/><stop offset="0.150" stop-opacity="0.79" stop-color="#dc7448"/><stop offset="0.156" stop-opacity="0.72" stop-color="#dc7448"/><stop offset="0.163" stop-opacity="0.78" stop-color="#f09050"/><stop offset="0.169" stop-opacity="0.88" stop-color="#dc7448"/><stop offset="0.175" stop-opacity="0.79" stop-color="#dc7448"/><stop offset="0.181" stop-opacity="0.83" stop-color="#dc7448"/><stop offset="0.188" stop-opacity="0.75" stop-color="#dc7448"/><stop offset="0.194" stop-opacity="0.77" stop-color="#dc7448"/><stop offset="0.200" stop-opacity="0.94" stop-color="#dc7448"/><stop offset="0.206" stop-opacity="0.83" stop-color="#f09050"/><stop offset="0.212" stop-opacity="0.94" stop-color="#dc7448"/><stop offset="0.219" stop-opacity="0.78" stop-color="#dc7448"/><stop offset="0.225" stop-opacity="0.94" stop-color="#b85058"/><stop offset="0.231" stop-opacity="0.85" stop-color="#b85058"/><stop offset="0.237" stop-opacity="0.84" stop-color="#b85058"/><stop offset="0.244" stop-opacity="0.75" stop-color="#dc7448"/><stop offset="0.250" stop-opacity="0.84" stop-color="#dc7448"/><stop offset="0.256" stop-opacity="0.88" stop-color="#dc7448"/><stop offset="0.263" stop-opacity="0.93" stop-color="#b85058"/><stop offset="0.269" stop-opacity="0.73" stop-color="#dc7448"/><stop offset="0.275" stop-opacity="0.83" stop-color="#f09050"/><stop offset="0.281" stop-opacity="0.79" stop-color="#dc7448"/><stop offset="0.287" stop-opacity="0.80" stop-color="#b85058"/><stop offset="0.294" stop-opacity="0.91" stop-color="#dc7448"/><stop offset="0.300" stop-opacity="0.89" stop-color="#f09050"/><stop offset="0.306" stop-opacity="0.75" stop-color="#dc7448"/><stop offset="0.312" stop-opacity="0.88" stop-color="#dc7448"/><stop offset="0.319" stop-opacity="0.79" stop-color="#dc7448"/><stop offset="0.325" stop-opacity="0.81" stop-color="#dc7448"/><stop offset="0.331" stop-opacity="0.86" stop-color="#dc7448"/><stop offset="0.338" stop-opacity="0.82" stop-color="#dc7448"/><stop offset="0.344" stop-opacity="0.73" stop-color="#b85058"/><stop offset="0.350" stop-opacity="0.91" stop-color="#b85058"/><stop offset="0.356" stop-opacity="0.94" stop-color="#b85058"/><stop offset="0.362" stop-opacity="0.78" stop-color="#b85058"/><stop offset="0.369" stop-opacity="0.76" stop-color="#dc7448"/><stop offset="0.375" stop-opacity="0.94" stop-color="#dc7448"/><stop offset="0.381" stop-opacity="0.91" stop-color="#dc7448"/><stop offset="0.388" stop-opacity="0.93" stop-color="#dc7448"/><stop offset="0.394" stop-opacity="0.85" stop-color="#dc7448"/><stop offset="0.400" stop-opacity="0.73" stop-color="#dc7448"/><stop offset="0.406" stop-opacity="0.82" stop-color="#dc7448"/><stop offset="0.412" stop-opacity="0.87" stop-color="#dc7448"/><stop offset="0.419" stop-opacity="0.73" stop-color="#b85058"/><stop offset="0.425" stop-opacity="0.75" stop-color="#dc7448"/><stop offset="0.431" stop-opacity="0.80" stop-color="#dc7448"/><stop offset="0.438" stop-opacity="0.89" stop-color="#b85058"/><stop offset="0.444" stop-opacity="0.78" stop-color="#dc7448"/><stop offset="0.450" stop-opacity="0.79" stop-color="#dc7448"/><stop offset="0.456" stop-opacity="0.81" stop-color="#dc7448"/><stop offset="0.463" stop-opacity="0.76" stop-color="#b85058"/><stop offset="0.469" stop-opacity="0.93" stop-color="#b85058"/><stop offset="0.475" stop-opacity="0.77" stop-color="#dc7448"/><stop offset="0.481" stop-opacity="0.95" stop-color="#dc7448"/><stop offset="0.487" stop-opacity="0.75" stop-color="#dc7448"/><stop offset="0.494" stop-opacity="0.74" stop-color="#b85058"/><stop offset="0.500" stop-opacity="0.74" stop-color="#dc7448"/><stop offset="0.506" stop-opacity="0.78" stop-color="#b85058"/><stop offset="0.512" stop-opacity="0.92" stop-color="#dc7448"/><stop offset="0.519" stop-opacity="0.81" stop-color="#dc7448"/><stop offset="0.525" stop-opacity="0.84" stop-color="#dc7448"/><stop offset="0.531" stop-opacity="0.80" stop-color="#dc7448"/><stop offset="0.537" stop-opacity="0.78" stop-color="#f09050"/><stop offset="0.544" stop-opacity="0.75" stop-color="#dc7448"/><stop offset="0.550" stop-opacity="0.86" stop-color="#dc7448"/><stop offset="0.556" stop-opacity="0.77" stop-color="#dc7448"/><stop offset="0.562" stop-opacity="0.78" stop-color="#b85058"/><stop offset="0.569" stop-opacity="0.82" stop-color="#dc7448"/><stop offset="0.575" stop-opacity="0.92" stop-color="#dc7448"/><stop offset="0.581" stop-opacity="0.73" stop-color="#dc7448"/><stop offset="0.588" stop-opacity="0.88" stop-color="#f09050"/><stop offset="0.594" stop-opacity="0.83" stop-color="#dc7448"/><stop offset="0.600" stop-opacity="0.72" stop-color="#dc7448"/><stop offset="0.606" stop-opacity="0.93" stop-color="#dc7448"/><stop offset="0.613" stop-opacity="0.92" stop-color="#dc7448"/><stop offset="0.619" stop-opacity="0.78" stop-color="#dc7448"/><stop offset="0.625" stop-opacity="0.76" stop-color="#b85058"/><stop offset="0.631" stop-opacity="0.88" stop-color="#dc7448"/><stop offset="0.637" stop-opacity="0.89" stop-color="#dc7448"/><stop offset="0.644" stop-opacity="0.90" stop-color="#dc7448"/><stop offset="0.650" stop-opacity="0.85" stop-color="#dc7448"/><stop offset="0.656" stop-opacity="0.90" stop-color="#f09050"/><stop offset="0.662" stop-opacity="0.93" stop-color="#b85058"/><stop offset="0.669" stop-opacity="0.79" stop-color="#dc7448"/><stop offset="0.675" stop-opacity="0.78" stop-color="#b85058"/><stop offset="0.681" stop-opacity="0.88" stop-color="#dc7448"/><stop offset="0.688" stop-opacity="0.74" stop-color="#b85058"/><stop offset="0.694" stop-opacity="0.85" stop-color="#dc7448"/><stop offset="0.700" stop-opacity="0.77" stop-color="#dc7448"/><stop offset="0.706" stop-opacity="0.72" stop-color="#dc7448"/><stop offset="0.713" stop-opacity="0.83" stop-color="#dc7448"/><stop offset="0.719" stop-opacity="0.87" stop-color="#dc7448"/><stop offset="0.725" stop-opacity="0.83" stop-color="#dc7448"/><stop offset="0.731" stop-opacity="0.78" stop-color="#b85058"/><stop offset="0.738" stop-opacity="0.88" stop-color="#dc7448"/><stop offset="0.744" stop-opacity="0.73" stop-color="#dc7448"/><stop offset="0.750" stop-opacity="0.88" stop-color="#dc7448"/><stop offset="0.756" stop-opacity="0.78" stop-color="#dc7448"/><stop offset="0.762" stop-opacity="0.93" stop-color="#dc7448"/><stop offset="0.769" stop-opacity="0.73" stop-color="#b85058"/><stop offset="0.775" stop-opacity="0.82" stop-color="#dc7448"/><stop offset="0.781" stop-opacity="0.77" stop-color="#dc7448"/><stop offset="0.787" stop-opacity="0.89" stop-color="#dc7448"/><stop offset="0.794" stop-opacity="0.77" stop-color="#dc7448"/><stop offset="0.800" stop-opacity="0.79" stop-color="#dc7448"/><stop offset="0.806" stop-opacity="0.77" stop-color="#dc7448"/><stop offset="0.812" stop-opacity="0.89" stop-color="#b85058"/><stop offset="0.819" stop-opacity="0.94" stop-color="#b85058"/><stop offset="0.825" stop-opacity="0.76" stop-color="#dc7448"/><stop offset="0.831" stop-opacity="0.82" stop-color="#b85058"/><stop offset="0.838" stop-opacity="0.94" stop-color="#dc7448"/><stop offset="0.844" stop-opacity="0.81" stop-color="#b85058"/><stop offset="0.850" stop-opacity="0.94" stop-color="#b85058"/><stop offset="0.856" stop-opacity="0.73" stop-color="#b85058"/><stop offset="0.863" stop-opacity="0.81" stop-color="#f09050"/><stop offset="0.869" stop-opacity="0.92" stop-color="#dc7448"/><stop offset="0.875" stop-opacity="0.95" stop-color="#dc7448"/><stop offset="0.881" stop-opacity="0.80" stop-color="#dc7448"/><stop offset="0.887" stop-opacity="0.94" stop-color="#b85058"/><stop offset="0.894" stop-opacity="0.73" stop-color="#dc7448"/><stop offset="0.900" stop-opacity="0.81" stop-color="#dc7448"/><stop offset="0.906" stop-opacity="0.80" stop-color="#dc7448"/><stop offset="0.912" stop-opacity="0.72" stop-color="#b85058"/><stop offset="0.919" stop-opacity="0.80" stop-color="#b85058"/><stop offset="0.925" stop-opacity="0.75" stop-color="#dc7448"/><stop offset="0.931" stop-opacity="0.77" stop-color="#dc7448"/><stop offset="0.938" stop-opacity="0.91" stop-color="#dc7448"/><stop offset="0.944" stop-opacity="0.82" stop-color="#dc7448"/><stop offset="0.950" stop-opacity="0.83" stop-color="#f09050"/><stop offset="0.956" stop-opacity="0.93" stop-color="#dc7448"/><stop offset="0.963" stop-opacity="0.80" stop-color="#b85058"/><stop offset="0.969" stop-opacity="0.73" stop-color="#dc7448"/><stop offset="0.975" stop-opacity="0.91" stop-color="#dc7448"/><stop offset="0.981" stop-opacity="0.73" stop-color="#dc7448"/><stop offset="0.988" stop-opacity="0.73" stop-color="#f09050"/><stop offset="0.994" stop-opacity="0.78" stop-color="#dc7448"/><stop offset="1.000" stop-opacity="0.93" stop-color="#dc7448"/></linearGradient></defs><defs><linearGradient id="g5" x1="0" y1="0" x2="0" y2="1"><stop offset="0.000" stop-opacity="0.73" stop-color="#d0584e"/><stop offset="0.009" stop-opacity="0.67" stop-color="#d0584e"/><stop offset="0.018" stop-opacity="1.00" stop-color="#d0584e"/><stop offset="0.027" stop-opacity="0.99" stop-color="#d0584e"/><stop offset="0.036" stop-opacity="0.66" stop-color="#d0584e"/><stop offset="0.045" stop-opacity="1.00" stop-color="#d0584e"/><stop offset="0.054" stop-opacity="0.44" stop-color="#b42e8e"/><stop offset="0.062" stop-opacity="0.41" stop-color="#b42e8e"/><stop offset="0.071" stop-opacity="0.26" stop-color="#b42e8e"/><stop offset="0.080" stop-opacity="0.69" stop-color="#b42e8e"/><stop offset="0.089" stop-opacity="0.78" stop-color="#b42e8e"/><stop offset="0.098" stop-opacity="0.62" stop-color="#b42e8e"/><stop offset="0.107" stop-opacity="0.79" stop-color="#b42e8e"/><stop offset="0.116" stop-opacity="0.27" stop-color="#b42e8e"/><stop offset="0.125" stop-opacity="0.39" stop-color="#b42e8e"/><stop offset="0.134" stop-opacity="0.53" stop-color="#b42e8e"/><stop offset="0.143" stop-opacity="0.80" stop-color="#b42e8e"/><stop offset="0.152" stop-opacity="0.80" stop-color="#b42e8e"/><stop offset="0.161" stop-opacity="0.48" stop-color="#b42e8e"/><stop offset="0.170" stop-opacity="0.40" stop-color="#b42e8e"/><stop offset="0.179" stop-opacity="0.50" stop-color="#b42e8e"/><stop offset="0.188" stop-opacity="0.54" stop-color="#b42e8e"/><stop offset="0.196" stop-opacity="0.79" stop-color="#b42e8e"/><stop offset="0.205" stop-opacity="0.36" stop-color="#b42e8e"/><stop offset="0.214" stop-opacity="0.71" stop-color="#b42e8e"/><stop offset="0.223" stop-opacity="0.68" stop-color="#b42e8e"/><stop offset="0.232" stop-opacity="0.73" stop-color="#b42e8e"/><stop offset="0.241" stop-opacity="0.70" stop-color="#b42e8e"/><stop offset="0.250" stop-opacity="0.60" stop-color="#b42e8e"/><stop offset="0.259" stop-opacity="0.44" stop-color="#b42e8e"/><stop offset="0.268" stop-opacity="0.44" stop-color="#b42e8e"/><stop offset="0.277" stop-opacity="0.46" stop-color="#b42e8e"/><stop offset="0.286" stop-opacity="0.70" stop-color="#b42e8e"/><stop offset="0.295" stop-opacity="0.30" stop-color="#b42e8e"/><stop offset="0.304" stop-opacity="0.37" stop-color="#b42e8e"/><stop offset="0.312" stop-opacity="0.69" stop-color="#b42e8e"/><stop offset="0.321" stop-opacity="0.40" stop-color="#b42e8e"/><stop offset="0.330" stop-opacity="0.29" stop-color="#b42e8e"/><stop offset="0.339" stop-opacity="0.28" stop-color="#b42e8e"/><stop offset="0.348" stop-opacity="0.57" stop-color="#b42e8e"/><stop offset="0.357" stop-opacity="0.44" stop-color="#b42e8e"/><stop offset="0.366" stop-opacity="0.82" stop-color="#b42e8e"/><stop offset="0.375" stop-opacity="0.76" stop-color="#b42e8e"/><stop offset="0.384" stop-opacity="0.82" stop-color="#b42e8e"/><stop offset="0.393" stop-opacity="0.41" stop-color="#b42e8e"/><stop offset="0.402" stop-opacity="0.30" stop-color="#b42e8e"/><stop offset="0.411" stop-opacity="0.31" stop-color="#b42e8e"/><stop offset="0.420" stop-opacity="0.54" stop-color="#b42e8e"/><stop offset="0.429" stop-opacity="0.66" stop-color="#b42e8e"/><stop offset="0.438" stop-opacity="0.51" stop-color="#b42e8e"/><stop offset="0.446" stop-opacity="0.39" stop-color="#b42e8e"/><stop offset="0.455" stop-opacity="0.49" stop-color="#b42e8e"/><stop offset="0.464" stop-opacity="0.61" stop-color="#b42e8e"/><stop offset="0.473" stop-opacity="0.64" stop-color="#b42e8e"/><stop offset="0.482" stop-opacity="0.68" stop-color="#b42e8e"/><stop offset="0.491" stop-opacity="0.74" stop-color="#b42e8e"/><stop offset="0.500" stop-opacity="0.64" stop-color="#b42e8e"/><stop offset="0.509" stop-opacity="0.33" stop-color="#b42e8e"/><stop offset="0.518" stop-opacity="0.74" stop-color="#b42e8e"/><stop offset="0.527" stop-opacity="0.42" stop-color="#b42e8e"/><stop offset="0.536" stop-opacity="0.58" stop-color="#b42e8e"/><stop offset="0.545" stop-opacity="0.47" stop-color="#b42e8e"/><stop offset="0.554" stop-opacity="0.68" stop-color="#b42e8e"/><stop offset="0.562" stop-opacity="0.37" stop-color="#b42e8e"/><stop offset="0.571" stop-opacity="0.40" stop-color="#b42e8e"/><stop offset="0.580" stop-opacity="0.40" stop-color="#b42e8e"/><stop offset="0.589" stop-opacity="0.34" stop-color="#b42e8e"/><stop offset="0.598" stop-opacity="0.76" stop-color="#b42e8e"/><stop offset="0.607" stop-opacity="0.59" stop-color="#b42e8e"/><stop offset="0.616" stop-opacity="0.44" stop-color="#b42e8e"/><stop offset="0.625" stop-opacity="0.48" stop-color="#b42e8e"/><stop offset="0.634" stop-opacity="0.82" stop-color="#b42e8e"/><stop offset="0.643" stop-opacity="0.55" stop-color="#b42e8e"/><stop offset="0.652" stop-opacity="0.39" stop-color="#b42e8e"/><stop offset="0.661" stop-opacity="0.72" stop-color="#b42e8e"/><stop offset="0.670" stop-opacity="0.63" stop-color="#b42e8e"/><stop offset="0.679" stop-opacity="0.82" stop-color="#b42e8e"/><stop offset="0.688" stop-opacity="0.31" stop-color="#b42e8e"/><stop offset="0.696" stop-opacity="0.53" stop-color="#b42e8e"/><stop offset="0.705" stop-opacity="0.72" stop-color="#b42e8e"/><stop offset="0.714" stop-opacity="0.74" stop-color="#b42e8e"/><stop offset="0.723" stop-opacity="0.78" stop-color="#b42e8e"/><stop offset="0.732" stop-opacity="0.28" stop-color="#b42e8e"/><stop offset="0.741" stop-opacity="0.42" stop-color="#b42e8e"/><stop offset="0.750" stop-opacity="0.43" stop-color="#b42e8e"/><stop offset="0.759" stop-opacity="0.48" stop-color="#b42e8e"/><stop offset="0.768" stop-opacity="1.00" stop-color="#b42e8e"/><stop offset="0.777" stop-opacity="0.77" stop-color="#b42e8e"/><stop offset="0.786" stop-opacity="1.00" stop-color="#b42e8e"/><stop offset="0.795" stop-opacity="0.62" stop-color="#b42e8e"/><stop offset="0.804" stop-opacity="0.99" stop-color="#b42e8e"/><stop offset="0.812" stop-opacity="0.67" stop-color="#b42e8e"/><stop offset="0.821" stop-opacity="0.53" stop-color="#b42e8e"/><stop offset="0.830" stop-opacity="0.92" stop-color="#b42e8e"/><stop offset="0.839" stop-opacity="1.00" stop-color="#b42e8e"/><stop offset="0.848" stop-opacity="0.42" stop-color="#b42e8e"/><stop offset="0.857" stop-opacity="0.78" stop-color="#b42e8e"/><stop offset="0.866" stop-opacity="0.80" stop-color="#b42e8e"/><stop offset="0.875" stop-opacity="0.50" stop-color="#b42e8e"/><stop offset="0.884" stop-opacity="0.47" stop-color="#b42e8e"/><stop offset="0.893" stop-opacity="0.34" stop-color="#b42e8e"/><stop offset="0.902" stop-opacity="0.37" stop-color="#b42e8e"/><stop offset="0.911" stop-opacity="0.40" stop-color="#b42e8e"/><stop offset="0.920" stop-opacity="0.60" stop-color="#b42e8e"/><stop offset="0.929" stop-opacity="0.63" stop-color="#b42e8e"/><stop offset="0.938" stop-opacity="0.37" stop-color="#b42e8e"/><stop offset="0.946" stop-opacity="0.26" stop-color="#b42e8e"/><stop offset="0.955" stop-opacity="0.44" stop-color="#b42e8e"/><stop offset="0.964" stop-opacity="0.64" stop-color="#b42e8e"/><stop offset="0.973" stop-opacity="0.36" stop-color="#b42e8e"/><stop offset="0.982" stop-opacity="0.43" stop-color="#b42e8e"/><stop offset="0.991" stop-opacity="0.37" stop-color="#b42e8e"/><stop offset="1.000" stop-opacity="0.49" stop-color="#b42e8e"/></linearGradient></defs><defs><linearGradient id="g6" x1="0" y1="0" x2="0" y2="1"><stop offset="0.000" stop-opacity="0.75" stop-color="#b42e8e"/><stop offset="0.009" stop-opacity="0.38" stop-color="#b42e8e"/><stop offset="0.018" stop-opacity="0.41" stop-color="#b42e8e"/><stop offset="0.027" stop-opacity="0.63" stop-color="#b42e8e"/><stop offset="0.036" stop-opacity="0.75" stop-color="#b42e8e"/><stop offset="0.045" stop-opacity="0.82" stop-color="#b42e8e"/><stop offset="0.054" stop-opacity="0.21" stop-color="#b42e8e"/><stop offset="0.062" stop-opacity="0.24" stop-color="#b42e8e"/><stop offset="0.071" stop-opacity="0.45" stop-color="#b42e8e"/><stop offset="0.080" stop-opacity="0.34" stop-color="#b42e8e"/><stop offset="0.089" stop-opacity="0.29" stop-color="#b42e8e"/><stop offset="0.098" stop-opacity="0.30" stop-color="#b42e8e"/><stop offset="0.107" stop-opacity="0.55" stop-color="#b42e8e"/><stop offset="0.116" stop-opacity="0.30" stop-color="#b42e8e"/><stop offset="0.125" stop-opacity="0.40" stop-color="#b42e8e"/><stop offset="0.134" stop-opacity="0.31" stop-color="#b42e8e"/><stop offset="0.143" stop-opacity="0.65" stop-color="#b42e8e"/><stop offset="0.152" stop-opacity="0.99" stop-color="#b42e8e"/><stop offset="0.161" stop-opacity="1.00" stop-color="#b42e8e"/><stop offset="0.170" stop-opacity="0.61" stop-color="#b42e8e"/><stop offset="0.179" stop-opacity="0.49" stop-color="#b42e8e"/><stop offset="0.188" stop-opacity="0.88" stop-color="#b42e8e"/><stop offset="0.196" stop-opacity="0.49" stop-color="#b42e8e"/><stop offset="0.205" stop-opacity="0.34" stop-color="#b42e8e"/><stop offset="0.214" stop-opacity="1.00" stop-color="#b42e8e"/><stop offset="0.223" stop-opacity="0.66" stop-color="#b42e8e"/><stop offset="0.232" stop-opacity="0.95" stop-color="#b42e8e"/><stop offset="0.241" stop-opacity="0.64" stop-color="#b42e8e"/><stop offset="0.250" stop-opacity="1.00" stop-color="#b42e8e"/><stop offset="0.259" stop-opacity="0.68" stop-color="#b42e8e"/><stop offset="0.268" stop-opacity="0.46" stop-color="#b42e8e"/><stop offset="0.277" stop-opacity="0.35" stop-color="#b42e8e"/><stop offset="0.286" stop-opacity="0.75" stop-color="#b42e8e"/><stop offset="0.295" stop-opacity="0.82" stop-color="#b42e8e"/><stop offset="0.304" stop-opacity="1.00" stop-color="#b42e8e"/><stop offset="0.312" stop-opacity="0.40" stop-color="#b42e8e"/><stop offset="0.321" stop-opacity="0.80" stop-color="#b42e8e"/><stop offset="0.330" stop-opacity="0.62" stop-color="#b42e8e"/><stop offset="0.339" stop-opacity="0.72" stop-color="#b42e8e"/><stop offset="0.348" stop-opacity="0.45" stop-color="#b42e8e"/><stop offset="0.357" stop-opacity="0.55" stop-color="#b42e8e"/><stop offset="0.366" stop-opacity="0.73" stop-color="#b42e8e"/><stop offset="0.375" stop-opacity="1.00" stop-color="#b42e8e"/><stop offset="0.384" stop-opacity="0.42" stop-color="#b42e8e"/><stop offset="0.393" stop-opacity="0.71" stop-color="#b42e8e"/><stop offset="0.402" stop-opacity="0.94" stop-color="#b42e8e"/><stop offset="0.411" stop-opacity="1.00" stop-color="#b42e8e"/><stop offset="0.420" stop-opacity="0.49" stop-color="#b42e8e"/><stop offset="0.429" stop-opacity="0.43" stop-color="#b42e8e"/><stop offset="0.438" stop-opacity="1.00" stop-color="#b42e8e"/><stop offset="0.446" stop-opacity="1.00" stop-color="#b42e8e"/><stop offset="0.455" stop-opacity="0.70" stop-color="#b42e8e"/><stop offset="0.464" stop-opacity="0.38" stop-color="#b42e8e"/><stop offset="0.473" stop-opacity="1.00" stop-color="#b42e8e"/><stop offset="0.482" stop-opacity="0.63" stop-color="#b42e8e"/><stop offset="0.491" stop-opacity="1.00" stop-color="#b42e8e"/><stop offset="0.500" stop-opacity="0.80" stop-color="#b42e8e"/><stop offset="0.509" stop-opacity="0.96" stop-color="#b42e8e"/><stop offset="0.518" stop-opacity="0.46" stop-color="#b42e8e"/><stop offset="0.527" stop-opacity="0.93" stop-color="#b42e8e"/><stop offset="0.536" stop-opacity="0.50" stop-color="#b42e8e"/><stop offset="0.545" stop-opacity="0.64" stop-color="#b42e8e"/><stop offset="0.554" stop-opacity="0.97" stop-color="#b42e8e"/><stop offset="0.562" stop-opacity="0.96" stop-color="#b42e8e"/><stop offset="0.571" stop-opacity="0.47" stop-color="#b42e8e"/><stop offset="0.580" stop-opacity="0.50" stop-color="#b42e8e"/><stop offset="0.589" stop-opacity="0.64" stop-color="#b42e8e"/><stop offset="0.598" stop-opacity="0.73" stop-color="#b42e8e"/><stop offset="0.607" stop-opacity="0.63" stop-color="#b42e8e"/><stop offset="0.616" stop-opacity="0.43" stop-color="#b42e8e"/><stop offset="0.625" stop-opacity="0.52" stop-color="#b42e8e"/><stop offset="0.634" stop-opacity="0.88" stop-color="#b42e8e"/><stop offset="0.643" stop-opacity="1.00" stop-color="#b42e8e"/><stop offset="0.652" stop-opacity="0.37" stop-color="#b42e8e"/><stop offset="0.661" stop-opacity="0.76" stop-color="#b42e8e"/><stop offset="0.670" stop-opacity="0.91" stop-color="#b42e8e"/><stop offset="0.679" stop-opacity="0.37" stop-color="#b42e8e"/><stop offset="0.688" stop-opacity="0.97" stop-color="#b42e8e"/><stop offset="0.696" stop-opacity="0.43" stop-color="#b42e8e"/><stop offset="0.705" stop-opacity="0.79" stop-color="#b42e8e"/><stop offset="0.714" stop-opacity="0.75" stop-color="#b42e8e"/><stop offset="0.723" stop-opacity="0.81" stop-color="#b42e8e"/><stop offset="0.732" stop-opacity="0.57" stop-color="#b42e8e"/><stop offset="0.741" stop-opacity="0.65" stop-color="#b42e8e"/><stop offset="0.750" stop-opacity="0.77" stop-color="#b42e8e"/><stop offset="0.759" stop-opacity="0.66" stop-color="#b42e8e"/><stop offset="0.768" stop-opacity="0.83" stop-color="#b42e8e"/><stop offset="0.777" stop-opacity="0.67" stop-color="#b42e8e"/><stop offset="0.786" stop-opacity="0.67" stop-color="#b42e8e"/><stop offset="0.795" stop-opacity="0.36" stop-color="#b42e8e"/><stop offset="0.804" stop-opacity="0.80" stop-color="#b42e8e"/><stop offset="0.812" stop-opacity="0.70" stop-color="#b42e8e"/><stop offset="0.821" stop-opacity="0.51" stop-color="#b42e8e"/><stop offset="0.830" stop-opacity="0.91" stop-color="#b42e8e"/><stop offset="0.839" stop-opacity="0.92" stop-color="#b42e8e"/><stop offset="0.848" stop-opacity="0.68" stop-color="#b42e8e"/><stop offset="0.857" stop-opacity="0.29" stop-color="#b42e8e"/><stop offset="0.866" stop-opacity="0.43" stop-color="#b42e8e"/><stop offset="0.875" stop-opacity="0.26" stop-color="#b42e8e"/><stop offset="0.884" stop-opacity="0.27" stop-color="#b42e8e"/><stop offset="0.893" stop-opacity="0.41" stop-color="#b42e8e"/><stop offset="0.902" stop-opacity="0.25" stop-color="#b42e8e"/><stop offset="0.911" stop-opacity="0.41" stop-color="#b42e8e"/><stop offset="0.920" stop-opacity="0.44" stop-color="#b42e8e"/><stop offset="0.929" stop-opacity="0.23" stop-color="#b42e8e"/><stop offset="0.938" stop-opacity="0.50" stop-color="#b42e8e"/><stop offset="0.946" stop-opacity="0.25" stop-color="#b42e8e"/><stop offset="0.955" stop-opacity="0.55" stop-color="#b42e8e"/><stop offset="0.964" stop-opacity="0.57" stop-color="#b42e8e"/><stop offset="0.973" stop-opacity="0.44" stop-color="#b42e8e"/><stop offset="0.982" stop-opacity="0.23" stop-color="#b42e8e"/><stop offset="0.991" stop-opacity="0.44" stop-color="#b42e8e"/><stop offset="1.000" stop-opacity="0.32" stop-color="#b42e8e"/></linearGradient></defs><defs><linearGradient id="g7" x1="0" y1="0" x2="0" y2="1"><stop offset="0.000" stop-opacity="0.65" stop-color="#b42e8e"/><stop offset="0.009" stop-opacity="0.27" stop-color="#b42e8e"/><stop offset="0.018" stop-opacity="0.60" stop-color="#b42e8e"/><stop offset="0.027" stop-opacity="0.67" stop-color="#b42e8e"/><stop offset="0.036" stop-opacity="0.55" stop-color="#b42e8e"/><stop offset="0.045" stop-opacity="0.58" stop-color="#b42e8e"/><stop offset="0.054" stop-opacity="0.30" stop-color="#b42e8e"/><stop offset="0.062" stop-opacity="0.66" stop-color="#b42e8e"/><stop offset="0.071" stop-opacity="0.44" stop-color="#b42e8e"/><stop offset="0.080" stop-opacity="0.65" stop-color="#b42e8e"/><stop offset="0.089" stop-opacity="0.63" stop-color="#b42e8e"/><stop offset="0.098" stop-opacity="0.28" stop-color="#b42e8e"/><stop offset="0.107" stop-opacity="0.57" stop-color="#b42e8e"/><stop offset="0.116" stop-opacity="0.64" stop-color="#b42e8e"/><stop offset="0.125" stop-opacity="0.24" stop-color="#b42e8e"/><stop offset="0.134" stop-opacity="0.37" stop-color="#b42e8e"/><stop offset="0.143" stop-opacity="0.56" stop-color="#b42e8e"/><stop offset="0.152" stop-opacity="0.28" stop-color="#b42e8e"/><stop offset="0.161" stop-opacity="0.62" stop-color="#b42e8e"/><stop offset="0.170" stop-opacity="0.33" stop-color="#b42e8e"/><stop offset="0.179" stop-opacity="0.58" stop-color="#b42e8e"/><stop offset="0.188" stop-opacity="0.27" stop-color="#b42e8e"/><stop offset="0.196" stop-opacity="0.44" stop-color="#b42e8e"/><stop offset="0.205" stop-opacity="0.63" stop-color="#b42e8e"/><stop offset="0.214" stop-opacity="0.30" stop-color="#b42e8e"/><stop offset="0.223" stop-opacity="0.33" stop-color="#b42e8e"/><stop offset="0.232" stop-opacity="0.44" stop-color="#b42e8e"/><stop offset="0.241" stop-opacity="0.36" stop-color="#b42e8e"/><stop offset="0.250" stop-opacity="0.22" stop-color="#b42e8e"/><stop offset="0.259" stop-opacity="0.29" stop-color="#b42e8e"/><stop offset="0.268" stop-opacity="0.28" stop-color="#b42e8e"/><stop offset="0.277" stop-opacity="0.64" stop-color="#b42e8e"/><stop offset="0.286" stop-opacity="0.52" stop-color="#b42e8e"/><stop offset="0.295" stop-opacity="0.62" stop-color="#b42e8e"/><stop offset="0.304" stop-opacity="0.46" stop-color="#b42e8e"/><stop offset="0.312" stop-opacity="0.93" stop-color="#b42e8e"/><stop offset="0.321" stop-opacity="0.42" stop-color="#b42e8e"/><stop offset="0.330" stop-opacity="0.74" stop-color="#b42e8e"/><stop offset="0.339" stop-opacity="0.81" stop-color="#b42e8e"/><stop offset="0.348" stop-opacity="0.61" stop-color="#b42e8e"/><stop offset="0.357" stop-opacity="0.99" stop-color="#b42e8e"/><stop offset="0.366" stop-opacity="0.75" stop-color="#b42e8e"/><stop offset="0.375" stop-opacity="0.77" stop-color="#b42e8e"/><stop offset="0.384" stop-opacity="1.00" stop-color="#b42e8e"/><stop offset="0.393" stop-opacity="0.42" stop-color="#b42e8e"/><stop offset="0.402" stop-opacity="1.00" stop-color="#b42e8e"/><stop offset="0.411" stop-opacity="0.42" stop-color="#b42e8e"/><stop offset="0.420" stop-opacity="0.33" stop-color="#b42e8e"/><stop offset="0.429" stop-opacity="0.49" stop-color="#b42e8e"/><stop offset="0.438" stop-opacity="0.28" stop-color="#b42e8e"/><stop offset="0.446" stop-opacity="0.56" stop-color="#b42e8e"/><stop offset="0.455" stop-opacity="0.40" stop-color="#b42e8e"/><stop offset="0.464" stop-opacity="0.32" stop-color="#b42e8e"/><stop offset="0.473" stop-opacity="0.47" stop-color="#b42e8e"/><stop offset="0.482" stop-opacity="0.35" stop-color="#b42e8e"/><stop offset="0.491" stop-opacity="0.24" stop-color="#b42e8e"/><stop offset="0.500" stop-opacity="0.47" stop-color="#b42e8e"/><stop offset="0.509" stop-opacity="0.19" stop-color="#b42e8e"/><stop offset="0.518" stop-opacity="0.50" stop-color="#b42e8e"/><stop offset="0.527" stop-opacity="0.27" stop-color="#b42e8e"/><stop offset="0.536" stop-opacity="0.42" stop-color="#b42e8e"/><stop offset="0.545" stop-opacity="0.56" stop-color="#b42e8e"/><stop offset="0.554" stop-opacity="0.40" stop-color="#b42e8e"/><stop offset="0.562" stop-opacity="0.43" stop-color="#b42e8e"/><stop offset="0.571" stop-opacity="0.30" stop-color="#b42e8e"/><stop offset="0.580" stop-opacity="0.18" stop-color="#b42e8e"/><stop offset="0.589" stop-opacity="0.19" stop-color="#b42e8e"/><stop offset="0.598" stop-opacity="0.23" stop-color="#b42e8e"/><stop offset="0.607" stop-opacity="0.42" stop-color="#b42e8e"/><stop offset="0.616" stop-opacity="0.34" stop-color="#b42e8e"/><stop offset="0.625" stop-opacity="0.38" stop-color="#b42e8e"/><stop offset="0.634" stop-opacity="0.52" stop-color="#b42e8e"/><stop offset="0.643" stop-opacity="0.23" stop-color="#b42e8e"/><stop offset="0.652" stop-opacity="0.26" stop-color="#b42e8e"/><stop offset="0.661" stop-opacity="0.43" stop-color="#b42e8e"/><stop offset="0.670" stop-opacity="0.18" stop-color="#b42e8e"/><stop offset="0.679" stop-opacity="0.18" stop-color="#b42e8e"/><stop offset="0.688" stop-opacity="0.31" stop-color="#b42e8e"/><stop offset="0.696" stop-opacity="0.22" stop-color="#b42e8e"/><stop offset="0.705" stop-opacity="0.31" stop-color="#b42e8e"/><stop offset="0.714" stop-opacity="0.26" stop-color="#b42e8e"/><stop offset="0.723" stop-opacity="0.40" stop-color="#b42e8e"/><stop offset="0.732" stop-opacity="0.41" stop-color="#b42e8e"/><stop offset="0.741" stop-opacity="0.26" stop-color="#b42e8e"/><stop offset="0.750" stop-opacity="0.42" stop-color="#b42e8e"/><stop offset="0.759" stop-opacity="0.36" stop-color="#b42e8e"/><stop offset="0.768" stop-opacity="0.23" stop-color="#b42e8e"/><stop offset="0.777" stop-opacity="0.54" stop-color="#b42e8e"/><stop offset="0.786" stop-opacity="0.27" stop-color="#b42e8e"/><stop offset="0.795" stop-opacity="0.23" stop-color="#b42e8e"/><stop offset="0.804" stop-opacity="0.21" stop-color="#b42e8e"/><stop offset="0.812" stop-opacity="0.42" stop-color="#b42e8e"/><stop offset="0.821" stop-opacity="0.52" stop-color="#b42e8e"/><stop offset="0.830" stop-opacity="0.48" stop-color="#b42e8e"/><stop offset="0.839" stop-opacity="0.33" stop-color="#b42e8e"/><stop offset="0.848" stop-opacity="0.28" stop-color="#b42e8e"/><stop offset="0.857" stop-opacity="0.18" stop-color="#b42e8e"/><stop offset="0.866" stop-opacity="0.82" stop-color="#b42e8e"/><stop offset="0.875" stop-opacity="0.76" stop-color="#b42e8e"/><stop offset="0.884" stop-opacity="0.60" stop-color="#b42e8e"/><stop offset="0.893" stop-opacity="0.82" stop-color="#b42e8e"/><stop offset="0.902" stop-opacity="0.67" stop-color="#b42e8e"/><stop offset="0.911" stop-opacity="0.54" stop-color="#b42e8e"/><stop offset="0.920" stop-opacity="0.46" stop-color="#b42e8e"/><stop offset="0.929" stop-opacity="0.27" stop-color="#b42e8e"/><stop offset="0.938" stop-opacity="0.53" stop-color="#b42e8e"/><stop offset="0.946" stop-opacity="0.19" stop-color="#b42e8e"/><stop offset="0.955" stop-opacity="0.38" stop-color="#b42e8e"/><stop offset="0.964" stop-opacity="0.33" stop-color="#b42e8e"/><stop offset="0.973" stop-opacity="0.27" stop-color="#b42e8e"/><stop offset="0.982" stop-opacity="0.20" stop-color="#b42e8e"/><stop offset="0.991" stop-opacity="0.48" stop-color="#b42e8e"/><stop offset="1.000" stop-opacity="0.18" stop-color="#b42e8e"/></linearGradient></defs><defs><linearGradient id="g8" x1="0" y1="0" x2="0" y2="1"><stop offset="0.000" stop-opacity="0.57" stop-color="#b42e8e"/><stop offset="0.009" stop-opacity="0.79" stop-color="#b42e8e"/><stop offset="0.018" stop-opacity="0.34" stop-color="#b42e8e"/><stop offset="0.027" stop-opacity="0.37" stop-color="#b42e8e"/><stop offset="0.036" stop-opacity="0.60" stop-color="#b42e8e"/><stop offset="0.045" stop-opacity="0.55" stop-color="#b42e8e"/><stop offset="0.054" stop-opacity="0.62" stop-color="#b42e8e"/><stop offset="0.062" stop-opacity="0.72" stop-color="#b42e8e"/><stop offset="0.071" stop-opacity="0.36" stop-color="#b42e8e"/><stop offset="0.080" stop-opacity="0.43" stop-color="#b42e8e"/><stop offset="0.089" stop-opacity="0.43" stop-color="#b42e8e"/><stop offset="0.098" stop-opacity="0.28" stop-color="#b42e8e"/><stop offset="0.107" stop-opacity="0.76" stop-color="#b42e8e"/><stop offset="0.116" stop-opacity="0.70" stop-color="#b42e8e"/><stop offset="0.125" stop-opacity="0.66" stop-color="#b42e8e"/><stop offset="0.134" stop-opacity="0.26" stop-color="#b42e8e"/><stop offset="0.143" stop-opacity="0.74" stop-color="#b42e8e"/><stop offset="0.152" stop-opacity="0.68" stop-color="#b42e8e"/><stop offset="0.161" stop-opacity="0.52" stop-color="#b42e8e"/><stop offset="0.170" stop-opacity="0.68" stop-color="#b42e8e"/><stop offset="0.179" stop-opacity="0.51" stop-color="#b42e8e"/><stop offset="0.188" stop-opacity="0.39" stop-color="#b42e8e"/><stop offset="0.196" stop-opacity="0.32" stop-color="#b42e8e"/><stop offset="0.205" stop-opacity="0.39" stop-color="#b42e8e"/><stop offset="0.214" stop-opacity="0.28" stop-color="#b42e8e"/><stop offset="0.223" stop-opacity="0.45" stop-color="#b42e8e"/><stop offset="0.232" stop-opacity="0.68" stop-color="#b42e8e"/><stop offset="0.241" stop-opacity="0.65" stop-color="#b42e8e"/><stop offset="0.250" stop-opacity="0.74" stop-color="#b42e8e"/><stop offset="0.259" stop-opacity="0.87" stop-color="#b42e8e"/><stop offset="0.268" stop-opacity="0.54" stop-color="#b42e8e"/><stop offset="0.277" stop-opacity="0.75" stop-color="#b42e8e"/><stop offset="0.286" stop-opacity="0.66" stop-color="#b42e8e"/><stop offset="0.295" stop-opacity="0.93" stop-color="#b42e8e"/><stop offset="0.304" stop-opacity="0.73" stop-color="#b42e8e"/><stop offset="0.312" stop-opacity="0.54" stop-color="#b42e8e"/><stop offset="0.321" stop-opacity="0.82" stop-color="#b42e8e"/><stop offset="0.330" stop-opacity="1.00" stop-color="#b42e8e"/><stop offset="0.339" stop-opacity="0.50" stop-color="#b42e8e"/><stop offset="0.348" stop-opacity="1.00" stop-color="#b42e8e"/><stop offset="0.357" stop-opacity="0.35" stop-color="#b42e8e"/><stop offset="0.366" stop-opacity="0.53" stop-color="#b42e8e"/><stop offset="0.375" stop-opacity="0.51" stop-color="#b42e8e"/><stop offset="0.384" stop-opacity="0.90" stop-color="#b42e8e"/><stop offset="0.393" stop-opacity="1.00" stop-color="#b42e8e"/><stop offset="0.402" stop-opacity="0.90" stop-color="#b42e8e"/><stop offset="0.411" stop-opacity="0.58" stop-color="#b42e8e"/><stop offset="0.420" stop-opacity="1.00" stop-color="#b42e8e"/><stop offset="0.429" stop-opacity="0.58" stop-color="#b42e8e"/><stop offset="0.438" stop-opacity="0.52" stop-color="#b42e8e"/><stop offset="0.446" stop-opacity="1.00" stop-color="#b42e8e"/><stop offset="0.455" stop-opacity="0.81" stop-color="#b42e8e"/><stop offset="0.464" stop-opacity="0.86" stop-color="#b42e8e"/><stop offset="0.473" stop-opacity="0.84" stop-color="#b42e8e"/><stop offset="0.482" stop-opacity="1.00" stop-color="#b42e8e"/><stop offset="0.491" stop-opacity="0.69" stop-color="#b42e8e"/><stop offset="0.500" stop-opacity="0.97" stop-color="#b42e8e"/><stop offset="0.509" stop-opacity="0.45" stop-color="#b42e8e"/><stop offset="0.518" stop-opacity="0.51" stop-color="#b42e8e"/><stop offset="0.527" stop-opacity="0.35" stop-color="#b42e8e"/><stop offset="0.536" stop-opacity="0.46" stop-color="#b42e8e"/><stop offset="0.545" stop-opacity="0.40" stop-color="#b42e8e"/><stop offset="0.554" stop-opacity="0.30" stop-color="#b42e8e"/><stop offset="0.562" stop-opacity="0.38" stop-color="#b42e8e"/><stop offset="0.571" stop-opacity="0.61" stop-color="#b42e8e"/><stop offset="0.580" stop-opacity="0.30" stop-color="#b42e8e"/><stop offset="0.589" stop-opacity="0.78" stop-color="#b42e8e"/><stop offset="0.598" stop-opacity="0.34" stop-color="#b42e8e"/><stop offset="0.607" stop-opacity="0.27" stop-color="#b42e8e"/><stop offset="0.616" stop-opacity="0.32" stop-color="#b42e8e"/><stop offset="0.625" stop-opacity="0.79" stop-color="#b42e8e"/><stop offset="0.634" stop-opacity="0.45" stop-color="#b42e8e"/><stop offset="0.643" stop-opacity="0.34" stop-color="#b42e8e"/><stop offset="0.652" stop-opacity="0.27" stop-color="#b42e8e"/><stop offset="0.661" stop-opacity="0.19" stop-color="#b42e8e"/><stop offset="0.670" stop-opacity="0.45" stop-color="#b42e8e"/><stop offset="0.679" stop-opacity="0.42" stop-color="#b42e8e"/><stop offset="0.688" stop-opacity="0.45" stop-color="#b42e8e"/><stop offset="0.696" stop-opacity="0.46" stop-color="#b42e8e"/><stop offset="0.705" stop-opacity="0.20" stop-color="#b42e8e"/><stop offset="0.714" stop-opacity="0.41" stop-color="#b42e8e"/><stop offset="0.723" stop-opacity="0.32" stop-color="#b42e8e"/><stop offset="0.732" stop-opacity="0.49" stop-color="#b42e8e"/><stop offset="0.741" stop-opacity="0.50" stop-color="#b42e8e"/><stop offset="0.750" stop-opacity="1.00" stop-color="#b42e8e"/><stop offset="0.759" stop-opacity="0.39" stop-color="#b42e8e"/><stop offset="0.768" stop-opacity="0.99" stop-color="#b42e8e"/><stop offset="0.777" stop-opacity="1.00" stop-color="#b42e8e"/><stop offset="0.786" stop-opacity="1.00" stop-color="#b42e8e"/><stop offset="0.795" stop-opacity="0.42" stop-color="#b42e8e"/><stop offset="0.804" stop-opacity="0.49" stop-color="#b42e8e"/><stop offset="0.812" stop-opacity="0.42" stop-color="#b42e8e"/><stop offset="0.821" stop-opacity="0.36" stop-color="#b42e8e"/><stop offset="0.830" stop-opacity="0.97" stop-color="#b42e8e"/><stop offset="0.839" stop-opacity="0.95" stop-color="#b42e8e"/><stop offset="0.848" stop-opacity="0.81" stop-color="#b42e8e"/><stop offset="0.857" stop-opacity="0.96" stop-color="#b42e8e"/><stop offset="0.866" stop-opacity="0.81" stop-color="#b42e8e"/><stop offset="0.875" stop-opacity="0.55" stop-color="#b42e8e"/><stop offset="0.884" stop-opacity="0.41" stop-color="#b42e8e"/><stop offset="0.893" stop-opacity="0.41" stop-color="#b42e8e"/><stop offset="0.902" stop-opacity="0.91" stop-color="#b42e8e"/><stop offset="0.911" stop-opacity="0.49" stop-color="#b42e8e"/><stop offset="0.920" stop-opacity="0.58" stop-color="#b42e8e"/><stop offset="0.929" stop-opacity="0.66" stop-color="#b42e8e"/><stop offset="0.938" stop-opacity="0.35" stop-color="#b42e8e"/><stop offset="0.946" stop-opacity="0.53" stop-color="#b42e8e"/><stop offset="0.955" stop-opacity="0.55" stop-color="#b42e8e"/><stop offset="0.964" stop-opacity="0.87" stop-color="#b42e8e"/><stop offset="0.973" stop-opacity="0.61" stop-color="#b42e8e"/><stop offset="0.982" stop-opacity="0.58" stop-color="#b42e8e"/><stop offset="0.991" stop-opacity="1.00" stop-color="#b42e8e"/><stop offset="1.000" stop-opacity="0.37" stop-color="#b42e8e"/></linearGradient></defs><defs><linearGradient id="g9" x1="0" y1="0" x2="0" y2="1"><stop offset="0.000" stop-opacity="0.41" stop-color="#b42e8e"/><stop offset="0.009" stop-opacity="0.34" stop-color="#b42e8e"/><stop offset="0.018" stop-opacity="0.15" stop-color="#b42e8e"/><stop offset="0.027" stop-opacity="0.27" stop-color="#b42e8e"/><stop offset="0.036" stop-opacity="0.28" stop-color="#b42e8e"/><stop offset="0.045" stop-opacity="0.39" stop-color="#b42e8e"/><stop offset="0.054" stop-opacity="0.25" stop-color="#b42e8e"/><stop offset="0.062" stop-opacity="0.37" stop-color="#b42e8e"/><stop offset="0.071" stop-opacity="0.31" stop-color="#b42e8e"/><stop offset="0.080" stop-opacity="0.21" stop-color="#b42e8e"/><stop offset="0.089" stop-opacity="0.75" stop-color="#b42e8e"/><stop offset="0.098" stop-opacity="0.31" stop-color="#b42e8e"/><stop offset="0.107" stop-opacity="0.72" stop-color="#b42e8e"/><stop offset="0.116" stop-opacity="0.35" stop-color="#b42e8e"/><stop offset="0.125" stop-opacity="0.26" stop-color="#b42e8e"/><stop offset="0.134" stop-opacity="0.37" stop-color="#b42e8e"/><stop offset="0.143" stop-opacity="0.69" stop-color="#b42e8e"/><stop offset="0.152" stop-opacity="0.81" stop-color="#b42e8e"/><stop offset="0.161" stop-opacity="0.26" stop-color="#b42e8e"/><stop offset="0.170" stop-opacity="0.54" stop-color="#b42e8e"/><stop offset="0.179" stop-opacity="0.54" stop-color="#b42e8e"/><stop offset="0.188" stop-opacity="0.71" stop-color="#b42e8e"/><stop offset="0.196" stop-opacity="0.36" stop-color="#b42e8e"/><stop offset="0.205" stop-opacity="0.54" stop-color="#b42e8e"/><stop offset="0.214" stop-opacity="0.45" stop-color="#b42e8e"/><stop offset="0.223" stop-opacity="0.73" stop-color="#b42e8e"/><stop offset="0.232" stop-opacity="0.41" stop-color="#b42e8e"/><stop offset="0.241" stop-opacity="0.79" stop-color="#b42e8e"/><stop offset="0.250" stop-opacity="0.42" stop-color="#b42e8e"/><stop offset="0.259" stop-opacity="0.26" stop-color="#b42e8e"/><stop offset="0.268" stop-opacity="0.45" stop-color="#b42e8e"/><stop offset="0.277" stop-opacity="0.37" stop-color="#b42e8e"/><stop offset="0.286" stop-opacity="0.22" stop-color="#b42e8e"/><stop offset="0.295" stop-opacity="0.42" stop-color="#b42e8e"/><stop offset="0.304" stop-opacity="0.30" stop-color="#b42e8e"/><stop offset="0.312" stop-opacity="0.71" stop-color="#b42e8e"/><stop offset="0.321" stop-opacity="0.65" stop-color="#b42e8e"/><stop offset="0.330" stop-opacity="0.71" stop-color="#b42e8e"/><stop offset="0.339" stop-opacity="0.61" stop-color="#b42e8e"/><stop offset="0.348" stop-opacity="0.31" stop-color="#b42e8e"/><stop offset="0.357" stop-opacity="0.33" stop-color="#b42e8e"/><stop offset="0.366" stop-opacity="0.33" stop-color="#b42e8e"/><stop offset="0.375" stop-opacity="0.52" stop-color="#b42e8e"/><stop offset="0.384" stop-opacity="0.21" stop-color="#b42e8e"/><stop offset="0.393" stop-opacity="0.52" stop-color="#b42e8e"/><stop offset="0.402" stop-opacity="0.19" stop-color="#b42e8e"/><stop offset="0.411" stop-opacity="0.26" stop-color="#b42e8e"/><stop offset="0.420" stop-opacity="0.28" stop-color="#b42e8e"/><stop offset="0.429" stop-opacity="0.53" stop-color="#b42e8e"/><stop offset="0.438" stop-opacity="0.37" stop-color="#b42e8e"/><stop offset="0.446" stop-opacity="0.32" stop-color="#b42e8e"/><stop offset="0.455" stop-opacity="0.52" stop-color="#b42e8e"/><stop offset="0.464" stop-opacity="0.27" stop-color="#b42e8e"/><stop offset="0.473" stop-opacity="0.36" stop-color="#b42e8e"/><stop offset="0.482" stop-opacity="0.38" stop-color="#b42e8e"/><stop offset="0.491" stop-opacity="0.47" stop-color="#b42e8e"/><stop offset="0.500" stop-opacity="0.47" stop-color="#b42e8e"/><stop offset="0.509" stop-opacity="0.43" stop-color="#b42e8e"/><stop offset="0.518" stop-opacity="0.31" stop-color="#b42e8e"/><stop offset="0.527" stop-opacity="0.30" stop-color="#b42e8e"/><stop offset="0.536" stop-opacity="0.24" stop-color="#b42e8e"/><stop offset="0.545" stop-opacity="0.50" stop-color="#b42e8e"/><stop offset="0.554" stop-opacity="0.43" stop-color="#b42e8e"/><stop offset="0.562" stop-opacity="0.46" stop-color="#b42e8e"/><stop offset="0.571" stop-opacity="0.24" stop-color="#b42e8e"/><stop offset="0.580" stop-opacity="0.35" stop-color="#b42e8e"/><stop offset="0.589" stop-opacity="0.48" stop-color="#b42e8e"/><stop offset="0.598" stop-opacity="0.77" stop-color="#b42e8e"/><stop offset="0.607" stop-opacity="0.43" stop-color="#b42e8e"/><stop offset="0.616" stop-opacity="0.68" stop-color="#b42e8e"/><stop offset="0.625" stop-opacity="1.00" stop-color="#b42e8e"/><stop offset="0.634" stop-opacity="0.27" stop-color="#b42e8e"/><stop offset="0.643" stop-opacity="0.25" stop-color="#b42e8e"/><stop offset="0.652" stop-opacity="0.29" stop-color="#b42e8e"/><stop offset="0.661" stop-opacity="0.45" stop-color="#b42e8e"/><stop offset="0.670" stop-opacity="0.50" stop-color="#b42e8e"/><stop offset="0.679" stop-opacity="0.24" stop-color="#b42e8e"/><stop offset="0.688" stop-opacity="0.24" stop-color="#b42e8e"/><stop offset="0.696" stop-opacity="0.27" stop-color="#b42e8e"/><stop offset="0.705" stop-opacity="0.30" stop-color="#b42e8e"/><stop offset="0.714" stop-opacity="0.38" stop-color="#b42e8e"/><stop offset="0.723" stop-opacity="0.24" stop-color="#b42e8e"/><stop offset="0.732" stop-opacity="0.30" stop-color="#b42e8e"/><stop offset="0.741" stop-opacity="0.25" stop-color="#b42e8e"/><stop offset="0.750" stop-opacity="0.56" stop-color="#b42e8e"/><stop offset="0.759" stop-opacity="0.46" stop-color="#b42e8e"/><stop offset="0.768" stop-opacity="0.22" stop-color="#b42e8e"/><stop offset="0.777" stop-opacity="0.55" stop-color="#b42e8e"/><stop offset="0.786" stop-opacity="0.22" stop-color="#b42e8e"/><stop offset="0.795" stop-opacity="0.33" stop-color="#b42e8e"/><stop offset="0.804" stop-opacity="0.56" stop-color="#b42e8e"/><stop offset="0.812" stop-opacity="0.49" stop-color="#b42e8e"/><stop offset="0.821" stop-opacity="0.46" stop-color="#b42e8e"/><stop offset="0.830" stop-opacity="0.35" stop-color="#b42e8e"/><stop offset="0.839" stop-opacity="0.37" stop-color="#b42e8e"/><stop offset="0.848" stop-opacity="0.62" stop-color="#b42e8e"/><stop offset="0.857" stop-opacity="0.32" stop-color="#b42e8e"/><stop offset="0.866" stop-opacity="0.37" stop-color="#b42e8e"/><stop offset="0.875" stop-opacity="0.48" stop-color="#b42e8e"/><stop offset="0.884" stop-opacity="0.28" stop-color="#b42e8e"/><stop offset="0.893" stop-opacity="0.48" stop-color="#b42e8e"/><stop offset="0.902" stop-opacity="0.71" stop-color="#b42e8e"/><stop offset="0.911" stop-opacity="0.45" stop-color="#b42e8e"/><stop offset="0.920" stop-opacity="0.37" stop-color="#b42e8e"/><stop offset="0.929" stop-opacity="0.42" stop-color="#b42e8e"/><stop offset="0.938" stop-opacity="0.36" stop-color="#b42e8e"/><stop offset="0.946" stop-opacity="0.23" stop-color="#b42e8e"/><stop offset="0.955" stop-opacity="0.41" stop-color="#b42e8e"/><stop offset="0.964" stop-opacity="0.33" stop-color="#b42e8e"/><stop offset="0.973" stop-opacity="0.46" stop-color="#b42e8e"/><stop offset="0.982" stop-opacity="0.53" stop-color="#b42e8e"/><stop offset="0.991" stop-opacity="0.34" stop-color="#b42e8e"/><stop offset="1.000" stop-opacity="0.40" stop-color="#b42e8e"/></linearGradient></defs><defs><linearGradient id="g10" x1="0" y1="0" x2="0" y2="1"><stop offset="0.000" stop-opacity="0.68" stop-color="#b42e8e"/><stop offset="0.009" stop-opacity="0.50" stop-color="#b42e8e"/><stop offset="0.018" stop-opacity="0.39" stop-color="#b42e8e"/><stop offset="0.027" stop-opacity="0.67" stop-color="#b42e8e"/><stop offset="0.036" stop-opacity="0.76" stop-color="#b42e8e"/><stop offset="0.045" stop-opacity="0.70" stop-color="#b42e8e"/><stop offset="0.054" stop-opacity="0.66" stop-color="#b42e8e"/><stop offset="0.062" stop-opacity="0.74" stop-color="#b42e8e"/><stop offset="0.071" stop-opacity="0.64" stop-color="#b42e8e"/><stop offset="0.080" stop-opacity="0.62" stop-color="#b42e8e"/><stop offset="0.089" stop-opacity="0.52" stop-color="#b42e8e"/><stop offset="0.098" stop-opacity="0.43" stop-color="#b42e8e"/><stop offset="0.107" stop-opacity="0.61" stop-color="#b42e8e"/><stop offset="0.116" stop-opacity="0.21" stop-color="#b42e8e"/><stop offset="0.125" stop-opacity="0.34" stop-color="#b42e8e"/><stop offset="0.134" stop-opacity="0.48" stop-color="#b42e8e"/><stop offset="0.143" stop-opacity="0.45" stop-color="#b42e8e"/><stop offset="0.152" stop-opacity="0.42" stop-color="#b42e8e"/><stop offset="0.161" stop-opacity="0.27" stop-color="#b42e8e"/><stop offset="0.170" stop-opacity="0.34" stop-color="#b42e8e"/><stop offset="0.179" stop-opacity="0.35" stop-color="#b42e8e"/><stop offset="0.188" stop-opacity="0.42" stop-color="#b42e8e"/><stop offset="0.196" stop-opacity="0.34" stop-color="#b42e8e"/><stop offset="0.205" stop-opacity="0.44" stop-color="#b42e8e"/><stop offset="0.214" stop-opacity="0.54" stop-color="#b42e8e"/><stop offset="0.223" stop-opacity="0.25" stop-color="#b42e8e"/><stop offset="0.232" stop-opacity="0.83" stop-color="#b42e8e"/><stop offset="0.241" stop-opacity="0.92" stop-color="#b42e8e"/><stop offset="0.250" stop-opacity="0.63" stop-color="#b42e8e"/><stop offset="0.259" stop-opacity="0.70" stop-color="#b42e8e"/><stop offset="0.268" stop-opacity="1.00" stop-color="#b42e8e"/><stop offset="0.277" stop-opacity="0.37" stop-color="#b42e8e"/><stop offset="0.286" stop-opacity="0.75" stop-color="#b42e8e"/><stop offset="0.295" stop-opacity="0.46" stop-color="#b42e8e"/><stop offset="0.304" stop-opacity="0.92" stop-color="#b42e8e"/><stop offset="0.312" stop-opacity="1.00" stop-color="#b42e8e"/><stop offset="0.321" stop-opacity="0.73" stop-color="#b42e8e"/><stop offset="0.330" stop-opacity="0.41" stop-color="#b42e8e"/><stop offset="0.339" stop-opacity="0.77" stop-color="#b42e8e"/><stop offset="0.348" stop-opacity="0.74" stop-color="#b42e8e"/><stop offset="0.357" stop-opacity="0.88" stop-color="#b42e8e"/><stop offset="0.366" stop-opacity="0.72" stop-color="#b42e8e"/><stop offset="0.375" stop-opacity="0.82" stop-color="#b42e8e"/><stop offset="0.384" stop-opacity="0.96" stop-color="#b42e8e"/><stop offset="0.393" stop-opacity="0.73" stop-color="#b42e8e"/><stop offset="0.402" stop-opacity="0.65" stop-color="#b42e8e"/><stop offset="0.411" stop-opacity="1.00" stop-color="#b42e8e"/><stop offset="0.420" stop-opacity="0.50" stop-color="#b42e8e"/><stop offset="0.429" stop-opacity="0.85" stop-color="#b42e8e"/><stop offset="0.438" stop-opacity="0.33" stop-color="#b42e8e"/><stop offset="0.446" stop-opacity="0.47" stop-color="#b42e8e"/><stop offset="0.455" stop-opacity="0.22" stop-color="#b42e8e"/><stop offset="0.464" stop-opacity="0.56" stop-color="#b42e8e"/><stop offset="0.473" stop-opacity="0.31" stop-color="#b42e8e"/><stop offset="0.482" stop-opacity="0.20" stop-color="#b42e8e"/><stop offset="0.491" stop-opacity="0.28" stop-color="#b42e8e"/><stop offset="0.500" stop-opacity="0.33" stop-color="#b42e8e"/><stop offset="0.509" stop-opacity="0.18" stop-color="#b42e8e"/><stop offset="0.518" stop-opacity="0.34" stop-color="#b42e8e"/><stop offset="0.527" stop-opacity="0.34" stop-color="#b42e8e"/><stop offset="0.536" stop-opacity="0.86" stop-color="#b42e8e"/><stop offset="0.545" stop-opacity="0.60" stop-color="#b42e8e"/><stop offset="0.554" stop-opacity="0.54" stop-color="#b42e8e"/><stop offset="0.562" stop-opacity="0.51" stop-color="#b42e8e"/><stop offset="0.571" stop-opacity="0.89" stop-color="#b42e8e"/><stop offset="0.580" stop-opacity="1.00" stop-color="#b42e8e"/><stop offset="0.589" stop-opacity="0.38" stop-color="#b42e8e"/><stop offset="0.598" stop-opacity="0.26" stop-color="#b42e8e"/><stop offset="0.607" stop-opacity="0.49" stop-color="#b42e8e"/><stop offset="0.616" stop-opacity="0.33" stop-color="#b42e8e"/><stop offset="0.625" stop-opacity="0.26" stop-color="#b42e8e"/><stop offset="0.634" stop-opacity="0.23" stop-color="#b42e8e"/><stop offset="0.643" stop-opacity="0.48" stop-color="#b42e8e"/><stop offset="0.652" stop-opacity="0.49" stop-color="#b42e8e"/><stop offset="0.661" stop-opacity="0.42" stop-color="#b42e8e"/><stop offset="0.670" stop-opacity="0.69" stop-color="#b42e8e"/><stop offset="0.679" stop-opacity="0.76" stop-color="#b42e8e"/><stop offset="0.688" stop-opacity="0.70" stop-color="#c83a92"/><stop offset="0.696" stop-opacity="1.00" stop-color="#c83a92"/><stop offset="0.705" stop-opacity="0.83" stop-color="#c83a92"/><stop offset="0.714" stop-opacity="1.00" stop-color="#c83a92"/><stop offset="0.723" stop-opacity="0.95" stop-color="#b42e8e"/><stop offset="0.732" stop-opacity="0.95" stop-color="#b42e8e"/><stop offset="0.741" stop-opacity="0.69" stop-color="#b42e8e"/><stop offset="0.750" stop-opacity="0.56" stop-color="#b42e8e"/><stop offset="0.759" stop-opacity="0.39" stop-color="#b42e8e"/><stop offset="0.768" stop-opacity="0.22" stop-color="#b42e8e"/><stop offset="0.777" stop-opacity="0.50" stop-color="#b42e8e"/><stop offset="0.786" stop-opacity="0.31" stop-color="#b42e8e"/><stop offset="0.795" stop-opacity="0.51" stop-color="#b42e8e"/><stop offset="0.804" stop-opacity="0.28" stop-color="#b42e8e"/><stop offset="0.812" stop-opacity="0.32" stop-color="#b42e8e"/><stop offset="0.821" stop-opacity="0.27" stop-color="#b42e8e"/><stop offset="0.830" stop-opacity="0.34" stop-color="#b42e8e"/><stop offset="0.839" stop-opacity="0.36" stop-color="#b42e8e"/><stop offset="0.848" stop-opacity="0.26" stop-color="#b42e8e"/><stop offset="0.857" stop-opacity="0.67" stop-color="#b42e8e"/><stop offset="0.866" stop-opacity="0.42" stop-color="#b42e8e"/><stop offset="0.875" stop-opacity="0.40" stop-color="#b42e8e"/><stop offset="0.884" stop-opacity="0.43" stop-color="#b42e8e"/><stop offset="0.893" stop-opacity="0.53" stop-color="#b42e8e"/><stop offset="0.902" stop-opacity="0.50" stop-color="#b42e8e"/><stop offset="0.911" stop-opacity="0.62" stop-color="#b42e8e"/><stop offset="0.920" stop-opacity="0.63" stop-color="#b42e8e"/><stop offset="0.929" stop-opacity="0.46" stop-color="#b42e8e"/><stop offset="0.938" stop-opacity="0.79" stop-color="#b42e8e"/><stop offset="0.946" stop-opacity="0.51" stop-color="#b42e8e"/><stop offset="0.955" stop-opacity="0.20" stop-color="#b42e8e"/><stop offset="0.964" stop-opacity="0.50" stop-color="#b42e8e"/><stop offset="0.973" stop-opacity="0.53" stop-color="#b42e8e"/><stop offset="0.982" stop-opacity="0.48" stop-color="#b42e8e"/><stop offset="0.991" stop-opacity="0.23" stop-color="#b42e8e"/><stop offset="1.000" stop-opacity="0.50" stop-color="#b42e8e"/></linearGradient></defs><defs><linearGradient id="g11" x1="0" y1="0" x2="0" y2="1"><stop offset="0.000" stop-opacity="0.62" stop-color="#b42e8e"/><stop offset="0.009" stop-opacity="0.18" stop-color="#b42e8e"/><stop offset="0.018" stop-opacity="0.18" stop-color="#b42e8e"/><stop offset="0.027" stop-opacity="0.55" stop-color="#b42e8e"/><stop offset="0.036" stop-opacity="0.43" stop-color="#b42e8e"/><stop offset="0.045" stop-opacity="0.27" stop-color="#b42e8e"/><stop offset="0.054" stop-opacity="0.22" stop-color="#b42e8e"/><stop offset="0.062" stop-opacity="0.23" stop-color="#b42e8e"/><stop offset="0.071" stop-opacity="0.27" stop-color="#b42e8e"/><stop offset="0.080" stop-opacity="0.48" stop-color="#b42e8e"/><stop offset="0.089" stop-opacity="0.45" stop-color="#b42e8e"/><stop offset="0.098" stop-opacity="0.34" stop-color="#b42e8e"/><stop offset="0.107" stop-opacity="0.77" stop-color="#b42e8e"/><stop offset="0.116" stop-opacity="0.71" stop-color="#b42e8e"/><stop offset="0.125" stop-opacity="0.35" stop-color="#b42e8e"/><stop offset="0.134" stop-opacity="0.76" stop-color="#b42e8e"/><stop offset="0.143" stop-opacity="0.60" stop-color="#b42e8e"/><stop offset="0.152" stop-opacity="0.70" stop-color="#b42e8e"/><stop offset="0.161" stop-opacity="0.64" stop-color="#b42e8e"/><stop offset="0.170" stop-opacity="0.77" stop-color="#b42e8e"/><stop offset="0.179" stop-opacity="0.71" stop-color="#b42e8e"/><stop offset="0.188" stop-opacity="0.73" stop-color="#b42e8e"/><stop offset="0.196" stop-opacity="0.37" stop-color="#b42e8e"/><stop offset="0.205" stop-opacity="0.65" stop-color="#b42e8e"/><stop offset="0.214" stop-opacity="0.38" stop-color="#b42e8e"/><stop offset="0.223" stop-opacity="0.46" stop-color="#b42e8e"/><stop offset="0.232" stop-opacity="0.35" stop-color="#b42e8e"/><stop offset="0.241" stop-opacity="0.52" stop-color="#b42e8e"/><stop offset="0.250" stop-opacity="0.39" stop-color="#b42e8e"/><stop offset="0.259" stop-opacity="0.28" stop-color="#b42e8e"/><stop offset="0.268" stop-opacity="0.27" stop-color="#b42e8e"/><stop offset="0.277" stop-opacity="0.23" stop-color="#b42e8e"/><stop offset="0.286" stop-opacity="0.37" stop-color="#b42e8e"/><stop offset="0.295" stop-opacity="0.20" stop-color="#b42e8e"/><stop offset="0.304" stop-opacity="0.52" stop-color="#b42e8e"/><stop offset="0.312" stop-opacity="0.34" stop-color="#b42e8e"/><stop offset="0.321" stop-opacity="0.54" stop-color="#b42e8e"/><stop offset="0.330" stop-opacity="0.54" stop-color="#b42e8e"/><stop offset="0.339" stop-opacity="0.56" stop-color="#b42e8e"/><stop offset="0.348" stop-opacity="0.75" stop-color="#b42e8e"/><stop offset="0.357" stop-opacity="0.26" stop-color="#b42e8e"/><stop offset="0.366" stop-opacity="0.74" stop-color="#b42e8e"/><stop offset="0.375" stop-opacity="0.52" stop-color="#b42e8e"/><stop offset="0.384" stop-opacity="0.58" stop-color="#b42e8e"/><stop offset="0.393" stop-opacity="0.43" stop-color="#b42e8e"/><stop offset="0.402" stop-opacity="0.50" stop-color="#b42e8e"/><stop offset="0.411" stop-opacity="0.32" stop-color="#b42e8e"/><stop offset="0.420" stop-opacity="0.34" stop-color="#b42e8e"/><stop offset="0.429" stop-opacity="0.55" stop-color="#b42e8e"/><stop offset="0.438" stop-opacity="0.20" stop-color="#b42e8e"/><stop offset="0.446" stop-opacity="0.42" stop-color="#b42e8e"/><stop offset="0.455" stop-opacity="0.42" stop-color="#b42e8e"/><stop offset="0.464" stop-opacity="0.19" stop-color="#b42e8e"/><stop offset="0.473" stop-opacity="0.41" stop-color="#b42e8e"/><stop offset="0.482" stop-opacity="0.44" stop-color="#b42e8e"/><stop offset="0.491" stop-opacity="0.54" stop-color="#b42e8e"/><stop offset="0.500" stop-opacity="0.30" stop-color="#b42e8e"/><stop offset="0.509" stop-opacity="0.56" stop-color="#b42e8e"/><stop offset="0.518" stop-opacity="0.37" stop-color="#b42e8e"/><stop offset="0.527" stop-opacity="0.36" stop-color="#b42e8e"/><stop offset="0.536" stop-opacity="0.53" stop-color="#b42e8e"/><stop offset="0.545" stop-opacity="0.19" stop-color="#b42e8e"/><stop offset="0.554" stop-opacity="0.46" stop-color="#b42e8e"/><stop offset="0.562" stop-opacity="0.42" stop-color="#b42e8e"/><stop offset="0.571" stop-opacity="0.31" stop-color="#b42e8e"/><stop offset="0.580" stop-opacity="0.51" stop-color="#b42e8e"/><stop offset="0.589" stop-opacity="0.47" stop-color="#b42e8e"/><stop offset="0.598" stop-opacity="0.53" stop-color="#b42e8e"/><stop offset="0.607" stop-opacity="0.56" stop-color="#b42e8e"/><stop offset="0.616" stop-opacity="0.70" stop-color="#b42e8e"/><stop offset="0.625" stop-opacity="0.38" stop-color="#b42e8e"/><stop offset="0.634" stop-opacity="0.50" stop-color="#b42e8e"/><stop offset="0.643" stop-opacity="0.50" stop-color="#b42e8e"/><stop offset="0.652" stop-opacity="0.57" stop-color="#b42e8e"/><stop offset="0.661" stop-opacity="0.50" stop-color="#b42e8e"/><stop offset="0.670" stop-opacity="0.29" stop-color="#b42e8e"/><stop offset="0.679" stop-opacity="0.50" stop-color="#b42e8e"/><stop offset="0.688" stop-opacity="0.33" stop-color="#b42e8e"/><stop offset="0.696" stop-opacity="0.37" stop-color="#b42e8e"/><stop offset="0.705" stop-opacity="0.28" stop-color="#b42e8e"/><stop offset="0.714" stop-opacity="0.37" stop-color="#b42e8e"/><stop offset="0.723" stop-opacity="0.56" stop-color="#b42e8e"/><stop offset="0.732" stop-opacity="0.43" stop-color="#b42e8e"/><stop offset="0.741" stop-opacity="0.48" stop-color="#b42e8e"/><stop offset="0.750" stop-opacity="0.30" stop-color="#b42e8e"/><stop offset="0.759" stop-opacity="0.30" stop-color="#b42e8e"/><stop offset="0.768" stop-opacity="0.29" stop-color="#b42e8e"/><stop offset="0.777" stop-opacity="0.40" stop-color="#b42e8e"/><stop offset="0.786" stop-opacity="0.42" stop-color="#b42e8e"/><stop offset="0.795" stop-opacity="0.48" stop-color="#b42e8e"/><stop offset="0.804" stop-opacity="0.19" stop-color="#b42e8e"/><stop offset="0.812" stop-opacity="0.46" stop-color="#b42e8e"/><stop offset="0.821" stop-opacity="1.00" stop-color="#c83a92"/><stop offset="0.830" stop-opacity="1.00" stop-color="#c83a92"/><stop offset="0.839" stop-opacity="0.52" stop-color="#c83a92"/><stop offset="0.848" stop-opacity="0.78" stop-color="#c83a92"/><stop offset="0.857" stop-opacity="0.47" stop-color="#c83a92"/><stop offset="0.866" stop-opacity="0.66" stop-color="#c83a92"/><stop offset="0.875" stop-opacity="1.00" stop-color="#c83a92"/><stop offset="0.884" stop-opacity="1.00" stop-color="#c83a92"/><stop offset="0.893" stop-opacity="1.00" stop-color="#c83a92"/><stop offset="0.902" stop-opacity="1.00" stop-color="#c83a92"/><stop offset="0.911" stop-opacity="1.00" stop-color="#b42e8e"/><stop offset="0.920" stop-opacity="0.80" stop-color="#b42e8e"/><stop offset="0.929" stop-opacity="0.80" stop-color="#b42e8e"/><stop offset="0.938" stop-opacity="0.81" stop-color="#b42e8e"/><stop offset="0.946" stop-opacity="0.45" stop-color="#b42e8e"/><stop offset="0.955" stop-opacity="0.41" stop-color="#b42e8e"/><stop offset="0.964" stop-opacity="0.44" stop-color="#b42e8e"/><stop offset="0.973" stop-opacity="0.26" stop-color="#b42e8e"/><stop offset="0.982" stop-opacity="0.44" stop-color="#b42e8e"/><stop offset="0.991" stop-opacity="0.35" stop-color="#b42e8e"/><stop offset="1.000" stop-opacity="0.47" stop-color="#b42e8e"/></linearGradient></defs><defs><linearGradient id="g12" x1="0" y1="0" x2="0" y2="1"><stop offset="0.000" stop-opacity="0.31" stop-color="#b42e8e"/><stop offset="0.009" stop-opacity="0.36" stop-color="#b42e8e"/><stop offset="0.018" stop-opacity="0.28" stop-color="#b42e8e"/><stop offset="0.027" stop-opacity="0.70" stop-color="#b42e8e"/><stop offset="0.036" stop-opacity="0.78" stop-color="#b42e8e"/><stop offset="0.045" stop-opacity="0.63" stop-color="#b42e8e"/><stop offset="0.054" stop-opacity="0.32" stop-color="#b42e8e"/><stop offset="0.062" stop-opacity="0.50" stop-color="#b42e8e"/><stop offset="0.071" stop-opacity="0.48" stop-color="#b42e8e"/><stop offset="0.080" stop-opacity="0.39" stop-color="#b42e8e"/><stop offset="0.089" stop-opacity="0.28" stop-color="#b42e8e"/><stop offset="0.098" stop-opacity="0.29" stop-color="#b42e8e"/><stop offset="0.107" stop-opacity="0.34" stop-color="#b42e8e"/><stop offset="0.116" stop-opacity="0.30" stop-color="#b42e8e"/><stop offset="0.125" stop-opacity="0.34" stop-color="#b42e8e"/><stop offset="0.134" stop-opacity="0.43" stop-color="#b42e8e"/><stop offset="0.143" stop-opacity="0.54" stop-color="#b42e8e"/><stop offset="0.152" stop-opacity="0.20" stop-color="#b42e8e"/><stop offset="0.161" stop-opacity="0.40" stop-color="#b42e8e"/><stop offset="0.170" stop-opacity="0.19" stop-color="#b42e8e"/><stop offset="0.179" stop-opacity="0.22" stop-color="#b42e8e"/><stop offset="0.188" stop-opacity="0.72" stop-color="#b42e8e"/><stop offset="0.196" stop-opacity="0.58" stop-color="#b42e8e"/><stop offset="0.205" stop-opacity="0.78" stop-color="#b42e8e"/><stop offset="0.214" stop-opacity="0.51" stop-color="#b42e8e"/><stop offset="0.223" stop-opacity="0.26" stop-color="#b42e8e"/><stop offset="0.232" stop-opacity="0.48" stop-color="#b42e8e"/><stop offset="0.241" stop-opacity="0.59" stop-color="#b42e8e"/><stop offset="0.250" stop-opacity="0.79" stop-color="#b42e8e"/><stop offset="0.259" stop-opacity="0.56" stop-color="#b42e8e"/><stop offset="0.268" stop-opacity="0.36" stop-color="#b42e8e"/><stop offset="0.277" stop-opacity="0.34" stop-color="#b42e8e"/><stop offset="0.286" stop-opacity="0.22" stop-color="#b42e8e"/><stop offset="0.295" stop-opacity="0.43" stop-color="#b42e8e"/><stop offset="0.304" stop-opacity="0.26" stop-color="#b42e8e"/><stop offset="0.312" stop-opacity="0.34" stop-color="#b42e8e"/><stop offset="0.321" stop-opacity="0.27" stop-color="#b42e8e"/><stop offset="0.330" stop-opacity="0.26" stop-color="#b42e8e"/><stop offset="0.339" stop-opacity="0.65" stop-color="#b42e8e"/><stop offset="0.348" stop-opacity="0.33" stop-color="#b42e8e"/><stop offset="0.357" stop-opacity="0.81" stop-color="#b42e8e"/><stop offset="0.366" stop-opacity="0.31" stop-color="#b42e8e"/><stop offset="0.375" stop-opacity="0.75" stop-color="#b42e8e"/><stop offset="0.384" stop-opacity="0.33" stop-color="#b42e8e"/><stop offset="0.393" stop-opacity="0.27" stop-color="#b42e8e"/><stop offset="0.402" stop-opacity="0.67" stop-color="#b42e8e"/><stop offset="0.411" stop-opacity="0.39" stop-color="#b42e8e"/><stop offset="0.420" stop-opacity="0.67" stop-color="#b42e8e"/><stop offset="0.429" stop-opacity="0.36" stop-color="#b42e8e"/><stop offset="0.438" stop-opacity="0.29" stop-color="#b42e8e"/><stop offset="0.446" stop-opacity="0.70" stop-color="#b42e8e"/><stop offset="0.455" stop-opacity="0.66" stop-color="#b42e8e"/><stop offset="0.464" stop-opacity="0.74" stop-color="#b42e8e"/><stop offset="0.473" stop-opacity="0.67" stop-color="#b42e8e"/><stop offset="0.482" stop-opacity="0.30" stop-color="#b42e8e"/><stop offset="0.491" stop-opacity="0.61" stop-color="#b42e8e"/><stop offset="0.500" stop-opacity="0.66" stop-color="#b42e8e"/><stop offset="0.509" stop-opacity="0.36" stop-color="#b42e8e"/><stop offset="0.518" stop-opacity="0.54" stop-color="#b42e8e"/><stop offset="0.527" stop-opacity="0.27" stop-color="#b42e8e"/><stop offset="0.536" stop-opacity="0.55" stop-color="#b42e8e"/><stop offset="0.545" stop-opacity="0.46" stop-color="#b42e8e"/><stop offset="0.554" stop-opacity="0.18" stop-color="#b42e8e"/><stop offset="0.562" stop-opacity="0.18" stop-color="#b42e8e"/><stop offset="0.571" stop-opacity="0.43" stop-color="#b42e8e"/><stop offset="0.580" stop-opacity="0.49" stop-color="#b42e8e"/><stop offset="0.589" stop-opacity="0.21" stop-color="#b42e8e"/><stop offset="0.598" stop-opacity="0.30" stop-color="#b42e8e"/><stop offset="0.607" stop-opacity="0.46" stop-color="#b42e8e"/><stop offset="0.616" stop-opacity="0.35" stop-color="#b42e8e"/><stop offset="0.625" stop-opacity="0.75" stop-color="#b42e8e"/><stop offset="0.634" stop-opacity="0.53" stop-color="#b42e8e"/><stop offset="0.643" stop-opacity="0.29" stop-color="#b42e8e"/><stop offset="0.652" stop-opacity="0.47" stop-color="#b42e8e"/><stop offset="0.661" stop-opacity="0.58" stop-color="#b42e8e"/><stop offset="0.670" stop-opacity="0.51" stop-color="#b42e8e"/><stop offset="0.679" stop-opacity="0.64" stop-color="#b42e8e"/><stop offset="0.688" stop-opacity="0.34" stop-color="#b42e8e"/><stop offset="0.696" stop-opacity="0.71" stop-color="#b42e8e"/><stop offset="0.705" stop-opacity="0.46" stop-color="#b42e8e"/><stop offset="0.714" stop-opacity="0.62" stop-color="#b42e8e"/><stop offset="0.723" stop-opacity="0.62" stop-color="#b42e8e"/><stop offset="0.732" stop-opacity="0.49" stop-color="#b42e8e"/><stop offset="0.741" stop-opacity="0.48" stop-color="#b42e8e"/><stop offset="0.750" stop-opacity="0.70" stop-color="#b42e8e"/><stop offset="0.759" stop-opacity="1.00" stop-color="#c83a92"/><stop offset="0.768" stop-opacity="1.00" stop-color="#c83a92"/><stop offset="0.777" stop-opacity="1.00" stop-color="#c83a92"/><stop offset="0.786" stop-opacity="0.77" stop-color="#c83a92"/><stop offset="0.795" stop-opacity="0.53" stop-color="#c83a92"/><stop offset="0.804" stop-opacity="1.00" stop-color="#c83a92"/><stop offset="0.812" stop-opacity="1.00" stop-color="#c83a92"/><stop offset="0.821" stop-opacity="1.00" stop-color="#c83a92"/><stop offset="0.830" stop-opacity="0.81" stop-color="#c83a92"/><stop offset="0.839" stop-opacity="0.79" stop-color="#b42e8e"/><stop offset="0.848" stop-opacity="1.00" stop-color="#b42e8e"/><stop offset="0.857" stop-opacity="0.96" stop-color="#b42e8e"/><stop offset="0.866" stop-opacity="0.79" stop-color="#b42e8e"/><stop offset="0.875" stop-opacity="0.57" stop-color="#b42e8e"/><stop offset="0.884" stop-opacity="0.66" stop-color="#b42e8e"/><stop offset="0.893" stop-opacity="1.00" stop-color="#b42e8e"/><stop offset="0.902" stop-opacity="0.62" stop-color="#b42e8e"/><stop offset="0.911" stop-opacity="0.85" stop-color="#b42e8e"/><stop offset="0.920" stop-opacity="0.79" stop-color="#b42e8e"/><stop offset="0.929" stop-opacity="1.00" stop-color="#b42e8e"/><stop offset="0.938" stop-opacity="0.94" stop-color="#b42e8e"/><stop offset="0.946" stop-opacity="0.55" stop-color="#b42e8e"/><stop offset="0.955" stop-opacity="0.34" stop-color="#b42e8e"/><stop offset="0.964" stop-opacity="0.53" stop-color="#b42e8e"/><stop offset="0.973" stop-opacity="0.65" stop-color="#b42e8e"/><stop offset="0.982" stop-opacity="0.78" stop-color="#b42e8e"/><stop offset="0.991" stop-opacity="0.95" stop-color="#b42e8e"/><stop offset="1.000" stop-opacity="0.52" stop-color="#b42e8e"/></linearGradient></defs><defs><linearGradient id="g13" x1="0" y1="0" x2="0" y2="1"><stop offset="0.000" stop-opacity="0.12" stop-color="#b42e8e"/><stop offset="0.009" stop-opacity="0.32" stop-color="#b42e8e"/><stop offset="0.018" stop-opacity="0.31" stop-color="#b42e8e"/><stop offset="0.027" stop-opacity="0.32" stop-color="#b42e8e"/><stop offset="0.036" stop-opacity="0.25" stop-color="#b42e8e"/><stop offset="0.045" stop-opacity="0.18" stop-color="#b42e8e"/><stop offset="0.054" stop-opacity="0.32" stop-color="#b42e8e"/><stop offset="0.062" stop-opacity="0.31" stop-color="#b42e8e"/><stop offset="0.071" stop-opacity="0.28" stop-color="#b42e8e"/><stop offset="0.080" stop-opacity="0.34" stop-color="#b42e8e"/><stop offset="0.089" stop-opacity="0.20" stop-color="#b42e8e"/><stop offset="0.098" stop-opacity="0.13" stop-color="#b42e8e"/><stop offset="0.107" stop-opacity="0.25" stop-color="#b42e8e"/><stop offset="0.116" stop-opacity="0.31" stop-color="#b42e8e"/><stop offset="0.125" stop-opacity="0.16" stop-color="#b42e8e"/><stop offset="0.134" stop-opacity="0.30" stop-color="#b42e8e"/><stop offset="0.143" stop-opacity="0.54" stop-color="#b42e8e"/><stop offset="0.152" stop-opacity="0.27" stop-color="#b42e8e"/><stop offset="0.161" stop-opacity="0.41" stop-color="#b42e8e"/><stop offset="0.170" stop-opacity="0.44" stop-color="#b42e8e"/><stop offset="0.179" stop-opacity="0.36" stop-color="#b42e8e"/><stop offset="0.188" stop-opacity="0.26" stop-color="#b42e8e"/><stop offset="0.196" stop-opacity="0.27" stop-color="#b42e8e"/><stop offset="0.205" stop-opacity="0.47" stop-color="#b42e8e"/><stop offset="0.214" stop-opacity="0.48" stop-color="#b42e8e"/><stop offset="0.223" stop-opacity="0.35" stop-color="#b42e8e"/><stop offset="0.232" stop-opacity="0.21" stop-color="#b42e8e"/><stop offset="0.241" stop-opacity="0.49" stop-color="#b42e8e"/><stop offset="0.250" stop-opacity="0.48" stop-color="#b42e8e"/><stop offset="0.259" stop-opacity="0.51" stop-color="#b42e8e"/><stop offset="0.268" stop-opacity="0.77" stop-color="#b42e8e"/><stop offset="0.277" stop-opacity="1.00" stop-color="#b42e8e"/><stop offset="0.286" stop-opacity="1.00" stop-color="#b42e8e"/><stop offset="0.295" stop-opacity="0.73" stop-color="#b42e8e"/><stop offset="0.304" stop-opacity="0.69" stop-color="#b42e8e"/><stop offset="0.312" stop-opacity="0.78" stop-color="#b42e8e"/><stop offset="0.321" stop-opacity="0.48" stop-color="#b42e8e"/><stop offset="0.330" stop-opacity="0.48" stop-color="#b42e8e"/><stop offset="0.339" stop-opacity="0.47" stop-color="#b42e8e"/><stop offset="0.348" stop-opacity="0.86" stop-color="#b42e8e"/><stop offset="0.357" stop-opacity="0.61" stop-color="#b42e8e"/><stop offset="0.366" stop-opacity="0.40" stop-color="#b42e8e"/><stop offset="0.375" stop-opacity="0.33" stop-color="#b42e8e"/><stop offset="0.384" stop-opacity="0.38" stop-color="#b42e8e"/><stop offset="0.393" stop-opacity="0.23" stop-color="#b42e8e"/><stop offset="0.402" stop-opacity="0.19" stop-color="#b42e8e"/><stop offset="0.411" stop-opacity="0.56" stop-color="#b42e8e"/><stop offset="0.420" stop-opacity="0.32" stop-color="#b42e8e"/><stop offset="0.429" stop-opacity="0.22" stop-color="#b42e8e"/><stop offset="0.438" stop-opacity="0.42" stop-color="#b42e8e"/><stop offset="0.446" stop-opacity="0.48" stop-color="#b42e8e"/><stop offset="0.455" stop-opacity="0.24" stop-color="#b42e8e"/><stop offset="0.464" stop-opacity="0.41" stop-color="#b42e8e"/><stop offset="0.473" stop-opacity="0.31" stop-color="#b42e8e"/><stop offset="0.482" stop-opacity="0.38" stop-color="#b42e8e"/><stop offset="0.491" stop-opacity="0.18" stop-color="#b42e8e"/><stop offset="0.500" stop-opacity="0.19" stop-color="#b42e8e"/><stop offset="0.509" stop-opacity="0.56" stop-color="#b42e8e"/><stop offset="0.518" stop-opacity="0.51" stop-color="#b42e8e"/><stop offset="0.527" stop-opacity="0.37" stop-color="#b42e8e"/><stop offset="0.536" stop-opacity="0.40" stop-color="#b42e8e"/><stop offset="0.545" stop-opacity="0.28" stop-color="#b42e8e"/><stop offset="0.554" stop-opacity="0.48" stop-color="#b42e8e"/><stop offset="0.562" stop-opacity="0.34" stop-color="#b42e8e"/><stop offset="0.571" stop-opacity="0.54" stop-color="#b42e8e"/><stop offset="0.580" stop-opacity="0.47" stop-color="#b42e8e"/><stop offset="0.589" stop-opacity="0.49" stop-color="#b42e8e"/><stop offset="0.598" stop-opacity="0.55" stop-color="#b42e8e"/><stop offset="0.607" stop-opacity="0.27" stop-color="#b42e8e"/><stop offset="0.616" stop-opacity="0.19" stop-color="#b42e8e"/><stop offset="0.625" stop-opacity="0.25" stop-color="#b42e8e"/><stop offset="0.634" stop-opacity="0.25" stop-color="#b42e8e"/><stop offset="0.643" stop-opacity="0.21" stop-color="#b42e8e"/><stop offset="0.652" stop-opacity="0.20" stop-color="#b42e8e"/><stop offset="0.661" stop-opacity="0.39" stop-color="#b42e8e"/><stop offset="0.670" stop-opacity="0.52" stop-color="#b42e8e"/><stop offset="0.679" stop-opacity="0.35" stop-color="#b42e8e"/><stop offset="0.688" stop-opacity="0.80" stop-color="#b42e8e"/><stop offset="0.696" stop-opacity="0.78" stop-color="#b42e8e"/><stop offset="0.705" stop-opacity="0.29" stop-color="#b42e8e"/><stop offset="0.714" stop-opacity="0.60" stop-color="#b42e8e"/><stop offset="0.723" stop-opacity="0.48" stop-color="#b42e8e"/><stop offset="0.732" stop-opacity="0.32" stop-color="#b42e8e"/><stop offset="0.741" stop-opacity="0.80" stop-color="#b42e8e"/><stop offset="0.750" stop-opacity="0.40" stop-color="#b42e8e"/><stop offset="0.759" stop-opacity="0.40" stop-color="#b42e8e"/><stop offset="0.768" stop-opacity="0.43" stop-color="#b42e8e"/><stop offset="0.777" stop-opacity="0.55" stop-color="#b42e8e"/><stop offset="0.786" stop-opacity="0.44" stop-color="#b42e8e"/><stop offset="0.795" stop-opacity="0.63" stop-color="#b42e8e"/><stop offset="0.804" stop-opacity="0.67" stop-color="#b42e8e"/><stop offset="0.812" stop-opacity="0.46" stop-color="#b42e8e"/><stop offset="0.821" stop-opacity="1.00" stop-color="#b42e8e"/><stop offset="0.830" stop-opacity="1.00" stop-color="#b42e8e"/><stop offset="0.839" stop-opacity="0.50" stop-color="#b42e8e"/><stop offset="0.848" stop-opacity="0.37" stop-color="#b42e8e"/><stop offset="0.857" stop-opacity="0.53" stop-color="#b42e8e"/><stop offset="0.866" stop-opacity="0.60" stop-color="#b42e8e"/><stop offset="0.875" stop-opacity="1.00" stop-color="#b42e8e"/><stop offset="0.884" stop-opacity="0.53" stop-color="#b42e8e"/><stop offset="0.893" stop-opacity="0.50" stop-color="#b42e8e"/><stop offset="0.902" stop-opacity="0.19" stop-color="#b42e8e"/><stop offset="0.911" stop-opacity="0.48" stop-color="#b42e8e"/><stop offset="0.920" stop-opacity="0.45" stop-color="#b42e8e"/><stop offset="0.929" stop-opacity="0.43" stop-color="#b42e8e"/><stop offset="0.938" stop-opacity="0.56" stop-color="#b42e8e"/><stop offset="0.946" stop-opacity="0.20" stop-color="#b42e8e"/><stop offset="0.955" stop-opacity="0.23" stop-color="#b42e8e"/><stop offset="0.964" stop-opacity="0.47" stop-color="#b42e8e"/><stop offset="0.973" stop-opacity="0.54" stop-color="#b42e8e"/><stop offset="0.982" stop-opacity="0.44" stop-color="#b42e8e"/><stop offset="0.991" stop-opacity="0.29" stop-color="#b42e8e"/><stop offset="1.000" stop-opacity="0.41" stop-color="#b42e8e"/></linearGradient></defs><defs><linearGradient id="g14" x1="0" y1="0" x2="0" y2="1"><stop offset="0.000" stop-opacity="0.30" stop-color="#b42e8e"/><stop offset="0.009" stop-opacity="0.14" stop-color="#b42e8e"/><stop offset="0.018" stop-opacity="0.19" stop-color="#b42e8e"/><stop offset="0.027" stop-opacity="0.17" stop-color="#b42e8e"/><stop offset="0.036" stop-opacity="0.14" stop-color="#b42e8e"/><stop offset="0.045" stop-opacity="0.23" stop-color="#b42e8e"/><stop offset="0.054" stop-opacity="0.15" stop-color="#b42e8e"/><stop offset="0.062" stop-opacity="0.17" stop-color="#b42e8e"/><stop offset="0.071" stop-opacity="0.15" stop-color="#b42e8e"/><stop offset="0.080" stop-opacity="0.28" stop-color="#b42e8e"/><stop offset="0.089" stop-opacity="0.11" stop-color="#b42e8e"/><stop offset="0.098" stop-opacity="0.29" stop-color="#b42e8e"/><stop offset="0.107" stop-opacity="0.16" stop-color="#b42e8e"/><stop offset="0.116" stop-opacity="0.12" stop-color="#b42e8e"/><stop offset="0.125" stop-opacity="0.34" stop-color="#b42e8e"/><stop offset="0.134" stop-opacity="0.16" stop-color="#b42e8e"/><stop offset="0.143" stop-opacity="0.34" stop-color="#b42e8e"/><stop offset="0.152" stop-opacity="0.32" stop-color="#b42e8e"/><stop offset="0.161" stop-opacity="0.33" stop-color="#b42e8e"/><stop offset="0.170" stop-opacity="0.15" stop-color="#b42e8e"/><stop offset="0.179" stop-opacity="0.22" stop-color="#b42e8e"/><stop offset="0.188" stop-opacity="0.13" stop-color="#b42e8e"/><stop offset="0.196" stop-opacity="0.34" stop-color="#b42e8e"/><stop offset="0.205" stop-opacity="0.32" stop-color="#b42e8e"/><stop offset="0.214" stop-opacity="0.27" stop-color="#b42e8e"/><stop offset="0.223" stop-opacity="0.22" stop-color="#b42e8e"/><stop offset="0.232" stop-opacity="0.19" stop-color="#b42e8e"/><stop offset="0.241" stop-opacity="0.31" stop-color="#b42e8e"/><stop offset="0.250" stop-opacity="0.23" stop-color="#b42e8e"/><stop offset="0.259" stop-opacity="0.27" stop-color="#b42e8e"/><stop offset="0.268" stop-opacity="0.15" stop-color="#b42e8e"/><stop offset="0.277" stop-opacity="0.17" stop-color="#b42e8e"/><stop offset="0.286" stop-opacity="0.12" stop-color="#b42e8e"/><stop offset="0.295" stop-opacity="0.29" stop-color="#b42e8e"/><stop offset="0.304" stop-opacity="0.25" stop-color="#b42e8e"/><stop offset="0.312" stop-opacity="0.15" stop-color="#b42e8e"/><stop offset="0.321" stop-opacity="0.32" stop-color="#b42e8e"/><stop offset="0.330" stop-opacity="0.18" stop-color="#b42e8e"/><stop offset="0.339" stop-opacity="0.21" stop-color="#b42e8e"/><stop offset="0.348" stop-opacity="0.15" stop-color="#b42e8e"/><stop offset="0.357" stop-opacity="0.18" stop-color="#b42e8e"/><stop offset="0.366" stop-opacity="0.32" stop-color="#b42e8e"/><stop offset="0.375" stop-opacity="0.19" stop-color="#b42e8e"/><stop offset="0.384" stop-opacity="0.15" stop-color="#b42e8e"/><stop offset="0.393" stop-opacity="0.23" stop-color="#b42e8e"/><stop offset="0.402" stop-opacity="0.19" stop-color="#b42e8e"/><stop offset="0.411" stop-opacity="0.33" stop-color="#b42e8e"/><stop offset="0.420" stop-opacity="0.14" stop-color="#b42e8e"/><stop offset="0.429" stop-opacity="0.35" stop-color="#b42e8e"/><stop offset="0.438" stop-opacity="0.12" stop-color="#b42e8e"/><stop offset="0.446" stop-opacity="0.33" stop-color="#b42e8e"/><stop offset="0.455" stop-opacity="0.28" stop-color="#b42e8e"/><stop offset="0.464" stop-opacity="0.16" stop-color="#b42e8e"/><stop offset="0.473" stop-opacity="0.23" stop-color="#b42e8e"/><stop offset="0.482" stop-opacity="0.18" stop-color="#b42e8e"/><stop offset="0.491" stop-opacity="0.17" stop-color="#b42e8e"/><stop offset="0.500" stop-opacity="0.16" stop-color="#b42e8e"/><stop offset="0.509" stop-opacity="0.20" stop-color="#b42e8e"/><stop offset="0.518" stop-opacity="0.35" stop-color="#b42e8e"/><stop offset="0.527" stop-opacity="0.36" stop-color="#b42e8e"/><stop offset="0.536" stop-opacity="0.34" stop-color="#b42e8e"/><stop offset="0.545" stop-opacity="0.13" stop-color="#b42e8e"/><stop offset="0.554" stop-opacity="0.18" stop-color="#b42e8e"/><stop offset="0.562" stop-opacity="0.33" stop-color="#b42e8e"/><stop offset="0.571" stop-opacity="0.12" stop-color="#b42e8e"/><stop offset="0.580" stop-opacity="0.29" stop-color="#b42e8e"/><stop offset="0.589" stop-opacity="0.18" stop-color="#b42e8e"/><stop offset="0.598" stop-opacity="0.35" stop-color="#b42e8e"/><stop offset="0.607" stop-opacity="0.11" stop-color="#b42e8e"/><stop offset="0.616" stop-opacity="0.31" stop-color="#b42e8e"/><stop offset="0.625" stop-opacity="0.19" stop-color="#b42e8e"/><stop offset="0.634" stop-opacity="0.15" stop-color="#b42e8e"/><stop offset="0.643" stop-opacity="0.11" stop-color="#b42e8e"/><stop offset="0.652" stop-opacity="0.32" stop-color="#b42e8e"/><stop offset="0.661" stop-opacity="0.24" stop-color="#b42e8e"/><stop offset="0.670" stop-opacity="0.16" stop-color="#b42e8e"/><stop offset="0.679" stop-opacity="0.22" stop-color="#b42e8e"/><stop offset="0.688" stop-opacity="0.34" stop-color="#b42e8e"/><stop offset="0.696" stop-opacity="0.16" stop-color="#b42e8e"/><stop offset="0.705" stop-opacity="0.25" stop-color="#b42e8e"/><stop offset="0.714" stop-opacity="0.14" stop-color="#b42e8e"/><stop offset="0.723" stop-opacity="0.16" stop-color="#b42e8e"/><stop offset="0.732" stop-opacity="0.30" stop-color="#b42e8e"/><stop offset="0.741" stop-opacity="0.29" stop-color="#b42e8e"/><stop offset="0.750" stop-opacity="0.16" stop-color="#b42e8e"/><stop offset="0.759" stop-opacity="0.13" stop-color="#b42e8e"/><stop offset="0.768" stop-opacity="0.13" stop-color="#b42e8e"/><stop offset="0.777" stop-opacity="0.26" stop-color="#b42e8e"/><stop offset="0.786" stop-opacity="0.23" stop-color="#b42e8e"/><stop offset="0.795" stop-opacity="0.18" stop-color="#b42e8e"/><stop offset="0.804" stop-opacity="0.16" stop-color="#b42e8e"/><stop offset="0.812" stop-opacity="0.26" stop-color="#b42e8e"/><stop offset="0.821" stop-opacity="0.28" stop-color="#b42e8e"/><stop offset="0.830" stop-opacity="0.31" stop-color="#b42e8e"/><stop offset="0.839" stop-opacity="0.25" stop-color="#b42e8e"/><stop offset="0.848" stop-opacity="0.16" stop-color="#b42e8e"/><stop offset="0.857" stop-opacity="0.13" stop-color="#b42e8e"/><stop offset="0.866" stop-opacity="0.29" stop-color="#b42e8e"/><stop offset="0.875" stop-opacity="0.21" stop-color="#b42e8e"/><stop offset="0.884" stop-opacity="0.29" stop-color="#b42e8e"/><stop offset="0.893" stop-opacity="0.12" stop-color="#b42e8e"/><stop offset="0.902" stop-opacity="0.31" stop-color="#b42e8e"/><stop offset="0.911" stop-opacity="0.19" stop-color="#b42e8e"/><stop offset="0.920" stop-opacity="0.32" stop-color="#b42e8e"/><stop offset="0.929" stop-opacity="0.32" stop-color="#b42e8e"/><stop offset="0.938" stop-opacity="0.23" stop-color="#b42e8e"/><stop offset="0.946" stop-opacity="0.11" stop-color="#b42e8e"/><stop offset="0.955" stop-opacity="0.33" stop-color="#b42e8e"/><stop offset="0.964" stop-opacity="0.23" stop-color="#b42e8e"/><stop offset="0.973" stop-opacity="0.33" stop-color="#b42e8e"/><stop offset="0.982" stop-opacity="0.18" stop-color="#b42e8e"/><stop offset="0.991" stop-opacity="0.16" stop-color="#b42e8e"/><stop offset="1.000" stop-opacity="0.50" stop-color="#b42e8e"/></linearGradient></defs><defs><linearGradient id="g15" x1="0" y1="0" x2="0" y2="1"><stop offset="0.000" stop-opacity="0.47" stop-color="#b42e8e"/><stop offset="0.009" stop-opacity="0.35" stop-color="#b42e8e"/><stop offset="0.018" stop-opacity="0.47" stop-color="#b42e8e"/><stop offset="0.027" stop-opacity="0.60" stop-color="#b42e8e"/><stop offset="0.036" stop-opacity="0.26" stop-color="#b42e8e"/><stop offset="0.045" stop-opacity="0.55" stop-color="#b42e8e"/><stop offset="0.054" stop-opacity="0.51" stop-color="#b42e8e"/><stop offset="0.062" stop-opacity="0.55" stop-color="#b42e8e"/><stop offset="0.071" stop-opacity="0.33" stop-color="#b42e8e"/><stop offset="0.080" stop-opacity="0.66" stop-color="#b42e8e"/><stop offset="0.089" stop-opacity="0.72" stop-color="#b42e8e"/><stop offset="0.098" stop-opacity="0.75" stop-color="#b42e8e"/><stop offset="0.107" stop-opacity="0.44" stop-color="#b42e8e"/><stop offset="0.116" stop-opacity="0.66" stop-color="#b42e8e"/><stop offset="0.125" stop-opacity="0.47" stop-color="#b42e8e"/><stop offset="0.134" stop-opacity="0.68" stop-color="#b42e8e"/><stop offset="0.143" stop-opacity="0.29" stop-color="#b42e8e"/><stop offset="0.152" stop-opacity="0.75" stop-color="#b42e8e"/><stop offset="0.161" stop-opacity="0.80" stop-color="#b42e8e"/><stop offset="0.170" stop-opacity="0.54" stop-color="#b42e8e"/><stop offset="0.179" stop-opacity="0.55" stop-color="#b42e8e"/><stop offset="0.188" stop-opacity="0.49" stop-color="#b42e8e"/><stop offset="0.196" stop-opacity="0.49" stop-color="#b42e8e"/><stop offset="0.205" stop-opacity="0.23" stop-color="#b42e8e"/><stop offset="0.214" stop-opacity="0.71" stop-color="#b42e8e"/><stop offset="0.223" stop-opacity="0.34" stop-color="#b42e8e"/><stop offset="0.232" stop-opacity="0.31" stop-color="#b42e8e"/><stop offset="0.241" stop-opacity="0.28" stop-color="#b42e8e"/><stop offset="0.250" stop-opacity="0.35" stop-color="#b42e8e"/><stop offset="0.259" stop-opacity="0.63" stop-color="#b42e8e"/><stop offset="0.268" stop-opacity="0.24" stop-color="#b42e8e"/><stop offset="0.277" stop-opacity="0.27" stop-color="#b42e8e"/><stop offset="0.286" stop-opacity="0.57" stop-color="#b42e8e"/><stop offset="0.295" stop-opacity="0.32" stop-color="#b42e8e"/><stop offset="0.304" stop-opacity="0.23" stop-color="#b42e8e"/><stop offset="0.312" stop-opacity="0.52" stop-color="#b42e8e"/><stop offset="0.321" stop-opacity="0.51" stop-color="#b42e8e"/><stop offset="0.330" stop-opacity="0.48" stop-color="#b42e8e"/><stop offset="0.339" stop-opacity="0.57" stop-color="#b42e8e"/><stop offset="0.348" stop-opacity="0.28" stop-color="#b42e8e"/><stop offset="0.357" stop-opacity="0.66" stop-color="#b42e8e"/><stop offset="0.366" stop-opacity="0.58" stop-color="#b42e8e"/><stop offset="0.375" stop-opacity="0.25" stop-color="#b42e8e"/><stop offset="0.384" stop-opacity="0.29" stop-color="#b42e8e"/><stop offset="0.393" stop-opacity="0.47" stop-color="#b42e8e"/><stop offset="0.402" stop-opacity="0.47" stop-color="#b42e8e"/><stop offset="0.411" stop-opacity="0.36" stop-color="#b42e8e"/><stop offset="0.420" stop-opacity="0.28" stop-color="#b42e8e"/><stop offset="0.429" stop-opacity="0.43" stop-color="#b42e8e"/><stop offset="0.438" stop-opacity="0.29" stop-color="#b42e8e"/><stop offset="0.446" stop-opacity="0.52" stop-color="#b42e8e"/><stop offset="0.455" stop-opacity="0.65" stop-color="#b42e8e"/><stop offset="0.464" stop-opacity="0.30" stop-color="#b42e8e"/><stop offset="0.473" stop-opacity="0.51" stop-color="#b42e8e"/><stop offset="0.482" stop-opacity="0.60" stop-color="#b42e8e"/><stop offset="0.491" stop-opacity="0.31" stop-color="#b42e8e"/><stop offset="0.500" stop-opacity="0.64" stop-color="#b42e8e"/><stop offset="0.509" stop-opacity="0.69" stop-color="#b42e8e"/><stop offset="0.518" stop-opacity="0.42" stop-color="#b42e8e"/><stop offset="0.527" stop-opacity="0.43" stop-color="#b42e8e"/><stop offset="0.536" stop-opacity="0.64" stop-color="#b42e8e"/><stop offset="0.545" stop-opacity="0.56" stop-color="#b42e8e"/><stop offset="0.554" stop-opacity="0.48" stop-color="#b42e8e"/><stop offset="0.562" stop-opacity="0.79" stop-color="#b42e8e"/><stop offset="0.571" stop-opacity="0.70" stop-color="#b42e8e"/><stop offset="0.580" stop-opacity="0.45" stop-color="#b42e8e"/><stop offset="0.589" stop-opacity="0.39" stop-color="#b42e8e"/><stop offset="0.598" stop-opacity="0.45" stop-color="#b42e8e"/><stop offset="0.607" stop-opacity="0.50" stop-color="#b42e8e"/><stop offset="0.616" stop-opacity="0.82" stop-color="#b42e8e"/><stop offset="0.625" stop-opacity="0.71" stop-color="#b42e8e"/><stop offset="0.634" stop-opacity="0.78" stop-color="#b42e8e"/><stop offset="0.643" stop-opacity="0.72" stop-color="#b42e8e"/><stop offset="0.652" stop-opacity="0.74" stop-color="#b42e8e"/><stop offset="0.661" stop-opacity="0.29" stop-color="#b42e8e"/><stop offset="0.670" stop-opacity="0.55" stop-color="#b42e8e"/><stop offset="0.679" stop-opacity="0.80" stop-color="#b42e8e"/><stop offset="0.688" stop-opacity="0.79" stop-color="#b42e8e"/><stop offset="0.696" stop-opacity="0.40" stop-color="#b42e8e"/><stop offset="0.705" stop-opacity="0.50" stop-color="#b42e8e"/><stop offset="0.714" stop-opacity="0.62" stop-color="#b42e8e"/><stop offset="0.723" stop-opacity="0.46" stop-color="#b42e8e"/><stop offset="0.732" stop-opacity="0.56" stop-color="#b42e8e"/><stop offset="0.741" stop-opacity="0.30" stop-color="#b42e8e"/><stop offset="0.750" stop-opacity="0.50" stop-color="#b42e8e"/><stop offset="0.759" stop-opacity="0.48" stop-color="#b42e8e"/><stop offset="0.768" stop-opacity="0.23" stop-color="#b42e8e"/><stop offset="0.777" stop-opacity="0.29" stop-color="#b42e8e"/><stop offset="0.786" stop-opacity="0.71" stop-color="#b42e8e"/><stop offset="0.795" stop-opacity="0.61" stop-color="#b42e8e"/><stop offset="0.804" stop-opacity="0.69" stop-color="#b42e8e"/><stop offset="0.812" stop-opacity="0.54" stop-color="#b42e8e"/><stop offset="0.821" stop-opacity="0.63" stop-color="#b42e8e"/><stop offset="0.830" stop-opacity="0.66" stop-color="#b42e8e"/><stop offset="0.839" stop-opacity="0.66" stop-color="#b42e8e"/><stop offset="0.848" stop-opacity="0.24" stop-color="#b42e8e"/><stop offset="0.857" stop-opacity="0.54" stop-color="#b42e8e"/><stop offset="0.866" stop-opacity="0.36" stop-color="#b42e8e"/><stop offset="0.875" stop-opacity="0.56" stop-color="#b42e8e"/><stop offset="0.884" stop-opacity="0.36" stop-color="#b42e8e"/><stop offset="0.893" stop-opacity="0.49" stop-color="#b42e8e"/><stop offset="0.902" stop-opacity="1.00" stop-color="#b42e8e"/><stop offset="0.911" stop-opacity="0.96" stop-color="#b42e8e"/><stop offset="0.920" stop-opacity="0.63" stop-color="#b42e8e"/><stop offset="0.929" stop-opacity="0.87" stop-color="#b42e8e"/><stop offset="0.938" stop-opacity="0.79" stop-color="#b42e8e"/><stop offset="0.946" stop-opacity="1.00" stop-color="#b42e8e"/><stop offset="0.955" stop-opacity="0.66" stop-color="#b42e8e"/><stop offset="0.964" stop-opacity="0.68" stop-color="#b42e8e"/><stop offset="0.973" stop-opacity="0.98" stop-color="#b42e8e"/><stop offset="0.982" stop-opacity="0.51" stop-color="#b42e8e"/><stop offset="0.991" stop-opacity="0.93" stop-color="#b42e8e"/><stop offset="1.000" stop-opacity="0.55" stop-color="#b42e8e"/></linearGradient></defs><defs><linearGradient id="g16" x1="0" y1="0" x2="0" y2="1"><stop offset="0.000" stop-opacity="0.72" stop-color="#b42e8e"/><stop offset="0.009" stop-opacity="0.54" stop-color="#b42e8e"/><stop offset="0.018" stop-opacity="0.69" stop-color="#b42e8e"/><stop offset="0.027" stop-opacity="0.74" stop-color="#b42e8e"/><stop offset="0.036" stop-opacity="0.45" stop-color="#b42e8e"/><stop offset="0.045" stop-opacity="0.43" stop-color="#b42e8e"/><stop offset="0.054" stop-opacity="0.23" stop-color="#b42e8e"/><stop offset="0.062" stop-opacity="0.29" stop-color="#b42e8e"/><stop offset="0.071" stop-opacity="0.33" stop-color="#b42e8e"/><stop offset="0.080" stop-opacity="0.29" stop-color="#b42e8e"/><stop offset="0.089" stop-opacity="0.27" stop-color="#b42e8e"/><stop offset="0.098" stop-opacity="0.21" stop-color="#b42e8e"/><stop offset="0.107" stop-opacity="0.75" stop-color="#b42e8e"/><stop offset="0.116" stop-opacity="0.97" stop-color="#b42e8e"/><stop offset="0.125" stop-opacity="0.79" stop-color="#b42e8e"/><stop offset="0.134" stop-opacity="0.77" stop-color="#b42e8e"/><stop offset="0.143" stop-opacity="0.83" stop-color="#b42e8e"/><stop offset="0.152" stop-opacity="0.49" stop-color="#b42e8e"/><stop offset="0.161" stop-opacity="0.87" stop-color="#b42e8e"/><stop offset="0.170" stop-opacity="0.68" stop-color="#b42e8e"/><stop offset="0.179" stop-opacity="0.75" stop-color="#b42e8e"/><stop offset="0.188" stop-opacity="0.80" stop-color="#b42e8e"/><stop offset="0.196" stop-opacity="0.69" stop-color="#b42e8e"/><stop offset="0.205" stop-opacity="0.57" stop-color="#b42e8e"/><stop offset="0.214" stop-opacity="0.52" stop-color="#b42e8e"/><stop offset="0.223" stop-opacity="0.50" stop-color="#b42e8e"/><stop offset="0.232" stop-opacity="0.72" stop-color="#b42e8e"/><stop offset="0.241" stop-opacity="0.62" stop-color="#b42e8e"/><stop offset="0.250" stop-opacity="0.78" stop-color="#b42e8e"/><stop offset="0.259" stop-opacity="0.26" stop-color="#b42e8e"/><stop offset="0.268" stop-opacity="0.46" stop-color="#b42e8e"/><stop offset="0.277" stop-opacity="0.75" stop-color="#b42e8e"/><stop offset="0.286" stop-opacity="0.39" stop-color="#b42e8e"/><stop offset="0.295" stop-opacity="0.57" stop-color="#b42e8e"/><stop offset="0.304" stop-opacity="0.54" stop-color="#b42e8e"/><stop offset="0.312" stop-opacity="0.42" stop-color="#b42e8e"/><stop offset="0.321" stop-opacity="0.82" stop-color="#b42e8e"/><stop offset="0.330" stop-opacity="0.42" stop-color="#b42e8e"/><stop offset="0.339" stop-opacity="0.70" stop-color="#b42e8e"/><stop offset="0.348" stop-opacity="0.35" stop-color="#b42e8e"/><stop offset="0.357" stop-opacity="0.29" stop-color="#b42e8e"/><stop offset="0.366" stop-opacity="0.75" stop-color="#b42e8e"/><stop offset="0.375" stop-opacity="0.51" stop-color="#b42e8e"/><stop offset="0.384" stop-opacity="0.29" stop-color="#b42e8e"/><stop offset="0.393" stop-opacity="0.48" stop-color="#b42e8e"/><stop offset="0.402" stop-opacity="0.51" stop-color="#b42e8e"/><stop offset="0.411" stop-opacity="0.68" stop-color="#b42e8e"/><stop offset="0.420" stop-opacity="0.32" stop-color="#b42e8e"/><stop offset="0.429" stop-opacity="0.38" stop-color="#b42e8e"/><stop offset="0.438" stop-opacity="0.80" stop-color="#b42e8e"/><stop offset="0.446" stop-opacity="0.68" stop-color="#b42e8e"/><stop offset="0.455" stop-opacity="0.34" stop-color="#b42e8e"/><stop offset="0.464" stop-opacity="0.45" stop-color="#b42e8e"/><stop offset="0.473" stop-opacity="0.46" stop-color="#b42e8e"/><stop offset="0.482" stop-opacity="0.64" stop-color="#b42e8e"/><stop offset="0.491" stop-opacity="0.61" stop-color="#b42e8e"/><stop offset="0.500" stop-opacity="0.74" stop-color="#b42e8e"/><stop offset="0.509" stop-opacity="0.72" stop-color="#b42e8e"/><stop offset="0.518" stop-opacity="0.55" stop-color="#b42e8e"/><stop offset="0.527" stop-opacity="0.68" stop-color="#b42e8e"/><stop offset="0.536" stop-opacity="0.68" stop-color="#b42e8e"/><stop offset="0.545" stop-opacity="0.69" stop-color="#b42e8e"/><stop offset="0.554" stop-opacity="0.53" stop-color="#b42e8e"/><stop offset="0.562" stop-opacity="0.70" stop-color="#b42e8e"/><stop offset="0.571" stop-opacity="0.66" stop-color="#b42e8e"/><stop offset="0.580" stop-opacity="0.78" stop-color="#b42e8e"/><stop offset="0.589" stop-opacity="0.43" stop-color="#b42e8e"/><stop offset="0.598" stop-opacity="0.99" stop-color="#b42e8e"/><stop offset="0.607" stop-opacity="0.34" stop-color="#b42e8e"/><stop offset="0.616" stop-opacity="0.91" stop-color="#b42e8e"/><stop offset="0.625" stop-opacity="0.78" stop-color="#b42e8e"/><stop offset="0.634" stop-opacity="0.71" stop-color="#b42e8e"/><stop offset="0.643" stop-opacity="1.00" stop-color="#b42e8e"/><stop offset="0.652" stop-opacity="0.77" stop-color="#b42e8e"/><stop offset="0.661" stop-opacity="0.65" stop-color="#b42e8e"/><stop offset="0.670" stop-opacity="0.93" stop-color="#b42e8e"/><stop offset="0.679" stop-opacity="0.99" stop-color="#b42e8e"/><stop offset="0.688" stop-opacity="0.79" stop-color="#b42e8e"/><stop offset="0.696" stop-opacity="0.62" stop-color="#b42e8e"/><stop offset="0.705" stop-opacity="0.68" stop-color="#b42e8e"/><stop offset="0.714" stop-opacity="0.68" stop-color="#b42e8e"/><stop offset="0.723" stop-opacity="0.88" stop-color="#b42e8e"/><stop offset="0.732" stop-opacity="0.56" stop-color="#b42e8e"/><stop offset="0.741" stop-opacity="0.63" stop-color="#b42e8e"/><stop offset="0.750" stop-opacity="0.75" stop-color="#b42e8e"/><stop offset="0.759" stop-opacity="0.63" stop-color="#b42e8e"/><stop offset="0.768" stop-opacity="0.58" stop-color="#b42e8e"/><stop offset="0.777" stop-opacity="0.93" stop-color="#b42e8e"/><stop offset="0.786" stop-opacity="0.97" stop-color="#b42e8e"/><stop offset="0.795" stop-opacity="0.71" stop-color="#b42e8e"/><stop offset="0.804" stop-opacity="0.67" stop-color="#b42e8e"/><stop offset="0.812" stop-opacity="0.48" stop-color="#b42e8e"/><stop offset="0.821" stop-opacity="0.57" stop-color="#b42e8e"/><stop offset="0.830" stop-opacity="0.45" stop-color="#b42e8e"/><stop offset="0.839" stop-opacity="0.77" stop-color="#b42e8e"/><stop offset="0.848" stop-opacity="0.77" stop-color="#b42e8e"/><stop offset="0.857" stop-opacity="0.40" stop-color="#b42e8e"/><stop offset="0.866" stop-opacity="1.00" stop-color="#b42e8e"/><stop offset="0.875" stop-opacity="0.58" stop-color="#b42e8e"/><stop offset="0.884" stop-opacity="0.97" stop-color="#b42e8e"/><stop offset="0.893" stop-opacity="0.97" stop-color="#b42e8e"/><stop offset="0.902" stop-opacity="1.00" stop-color="#b42e8e"/><stop offset="0.911" stop-opacity="0.49" stop-color="#b42e8e"/><stop offset="0.920" stop-opacity="0.66" stop-color="#b42e8e"/><stop offset="0.929" stop-opacity="1.00" stop-color="#b42e8e"/><stop offset="0.938" stop-opacity="0.35" stop-color="#b42e8e"/><stop offset="0.946" stop-opacity="0.37" stop-color="#b42e8e"/><stop offset="0.955" stop-opacity="0.76" stop-color="#b42e8e"/><stop offset="0.964" stop-opacity="0.71" stop-color="#b42e8e"/><stop offset="0.973" stop-opacity="1.00" stop-color="#b42e8e"/><stop offset="0.982" stop-opacity="0.92" stop-color="#b42e8e"/><stop offset="0.991" stop-opacity="0.74" stop-color="#b42e8e"/><stop offset="1.000" stop-opacity="0.56" stop-color="#b42e8e"/></linearGradient></defs><defs><linearGradient id="g17" x1="0" y1="0" x2="0" y2="1"><stop offset="0.000" stop-opacity="0.73" stop-color="#b42e8e"/><stop offset="0.009" stop-opacity="0.73" stop-color="#b42e8e"/><stop offset="0.018" stop-opacity="0.85" stop-color="#b42e8e"/><stop offset="0.027" stop-opacity="0.63" stop-color="#b42e8e"/><stop offset="0.036" stop-opacity="0.61" stop-color="#b42e8e"/><stop offset="0.045" stop-opacity="0.78" stop-color="#b42e8e"/><stop offset="0.054" stop-opacity="0.60" stop-color="#b42e8e"/><stop offset="0.062" stop-opacity="1.00" stop-color="#b42e8e"/><stop offset="0.071" stop-opacity="0.84" stop-color="#b42e8e"/><stop offset="0.080" stop-opacity="0.73" stop-color="#b42e8e"/><stop offset="0.089" stop-opacity="0.41" stop-color="#b42e8e"/><stop offset="0.098" stop-opacity="0.62" stop-color="#b42e8e"/><stop offset="0.107" stop-opacity="0.64" stop-color="#b42e8e"/><stop offset="0.116" stop-opacity="0.76" stop-color="#b42e8e"/><stop offset="0.125" stop-opacity="0.77" stop-color="#b42e8e"/><stop offset="0.134" stop-opacity="1.00" stop-color="#b42e8e"/><stop offset="0.143" stop-opacity="1.00" stop-color="#b42e8e"/><stop offset="0.152" stop-opacity="0.70" stop-color="#b42e8e"/><stop offset="0.161" stop-opacity="0.67" stop-color="#b42e8e"/><stop offset="0.170" stop-opacity="0.81" stop-color="#b42e8e"/><stop offset="0.179" stop-opacity="1.00" stop-color="#b42e8e"/><stop offset="0.188" stop-opacity="0.59" stop-color="#b42e8e"/><stop offset="0.196" stop-opacity="0.74" stop-color="#b42e8e"/><stop offset="0.205" stop-opacity="0.95" stop-color="#b42e8e"/><stop offset="0.214" stop-opacity="0.47" stop-color="#b42e8e"/><stop offset="0.223" stop-opacity="0.58" stop-color="#b42e8e"/><stop offset="0.232" stop-opacity="1.00" stop-color="#b42e8e"/><stop offset="0.241" stop-opacity="0.96" stop-color="#b42e8e"/><stop offset="0.250" stop-opacity="0.72" stop-color="#b42e8e"/><stop offset="0.259" stop-opacity="0.42" stop-color="#b42e8e"/><stop offset="0.268" stop-opacity="1.00" stop-color="#b42e8e"/><stop offset="0.277" stop-opacity="0.85" stop-color="#b42e8e"/><stop offset="0.286" stop-opacity="0.95" stop-color="#b42e8e"/><stop offset="0.295" stop-opacity="1.00" stop-color="#b42e8e"/><stop offset="0.304" stop-opacity="1.00" stop-color="#b42e8e"/><stop offset="0.312" stop-opacity="0.65" stop-color="#b42e8e"/><stop offset="0.321" stop-opacity="0.45" stop-color="#b42e8e"/><stop offset="0.330" stop-opacity="0.55" stop-color="#b42e8e"/><stop offset="0.339" stop-opacity="0.72" stop-color="#b42e8e"/><stop offset="0.348" stop-opacity="0.72" stop-color="#b42e8e"/><stop offset="0.357" stop-opacity="0.48" stop-color="#b42e8e"/><stop offset="0.366" stop-opacity="0.47" stop-color="#b42e8e"/><stop offset="0.375" stop-opacity="0.81" stop-color="#b42e8e"/><stop offset="0.384" stop-opacity="0.79" stop-color="#b42e8e"/><stop offset="0.393" stop-opacity="0.60" stop-color="#b42e8e"/><stop offset="0.402" stop-opacity="1.00" stop-color="#b42e8e"/><stop offset="0.411" stop-opacity="0.81" stop-color="#b42e8e"/><stop offset="0.420" stop-opacity="0.37" stop-color="#b42e8e"/><stop offset="0.429" stop-opacity="0.65" stop-color="#b42e8e"/><stop offset="0.438" stop-opacity="0.93" stop-color="#b42e8e"/><stop offset="0.446" stop-opacity="0.57" stop-color="#b42e8e"/><stop offset="0.455" stop-opacity="0.86" stop-color="#b42e8e"/><stop offset="0.464" stop-opacity="0.34" stop-color="#b42e8e"/><stop offset="0.473" stop-opacity="0.57" stop-color="#b42e8e"/><stop offset="0.482" stop-opacity="0.97" stop-color="#b42e8e"/><stop offset="0.491" stop-opacity="0.78" stop-color="#b42e8e"/><stop offset="0.500" stop-opacity="0.84" stop-color="#b42e8e"/><stop offset="0.509" stop-opacity="0.48" stop-color="#b42e8e"/><stop offset="0.518" stop-opacity="0.71" stop-color="#b42e8e"/><stop offset="0.527" stop-opacity="0.75" stop-color="#b42e8e"/><stop offset="0.536" stop-opacity="0.54" stop-color="#b42e8e"/><stop offset="0.545" stop-opacity="0.82" stop-color="#b42e8e"/><stop offset="0.554" stop-opacity="0.74" stop-color="#b42e8e"/><stop offset="0.562" stop-opacity="1.00" stop-color="#b42e8e"/><stop offset="0.571" stop-opacity="0.77" stop-color="#b42e8e"/><stop offset="0.580" stop-opacity="0.65" stop-color="#b42e8e"/><stop offset="0.589" stop-opacity="0.43" stop-color="#b42e8e"/><stop offset="0.598" stop-opacity="0.46" stop-color="#b42e8e"/><stop offset="0.607" stop-opacity="0.91" stop-color="#b42e8e"/><stop offset="0.616" stop-opacity="0.22" stop-color="#b42e8e"/><stop offset="0.625" stop-opacity="0.21" stop-color="#b42e8e"/><stop offset="0.634" stop-opacity="0.24" stop-color="#b42e8e"/><stop offset="0.643" stop-opacity="0.38" stop-color="#b42e8e"/><stop offset="0.652" stop-opacity="0.50" stop-color="#b42e8e"/><stop offset="0.661" stop-opacity="0.41" stop-color="#b42e8e"/><stop offset="0.670" stop-opacity="0.49" stop-color="#b42e8e"/><stop offset="0.679" stop-opacity="0.20" stop-color="#b42e8e"/><stop offset="0.688" stop-opacity="0.18" stop-color="#b42e8e"/><stop offset="0.696" stop-opacity="0.48" stop-color="#b42e8e"/><stop offset="0.705" stop-opacity="0.30" stop-color="#b42e8e"/><stop offset="0.714" stop-opacity="0.45" stop-color="#b42e8e"/><stop offset="0.723" stop-opacity="0.31" stop-color="#b42e8e"/><stop offset="0.732" stop-opacity="0.24" stop-color="#b42e8e"/><stop offset="0.741" stop-opacity="0.28" stop-color="#b42e8e"/><stop offset="0.750" stop-opacity="0.21" stop-color="#b42e8e"/><stop offset="0.759" stop-opacity="0.53" stop-color="#b42e8e"/><stop offset="0.768" stop-opacity="0.40" stop-color="#b42e8e"/><stop offset="0.777" stop-opacity="0.31" stop-color="#b42e8e"/><stop offset="0.786" stop-opacity="0.35" stop-color="#b42e8e"/><stop offset="0.795" stop-opacity="0.33" stop-color="#b42e8e"/><stop offset="0.804" stop-opacity="0.20" stop-color="#b42e8e"/><stop offset="0.812" stop-opacity="0.52" stop-color="#b42e8e"/><stop offset="0.821" stop-opacity="0.77" stop-color="#b42e8e"/><stop offset="0.830" stop-opacity="1.00" stop-color="#b42e8e"/><stop offset="0.839" stop-opacity="0.67" stop-color="#b42e8e"/><stop offset="0.848" stop-opacity="0.80" stop-color="#b42e8e"/><stop offset="0.857" stop-opacity="0.52" stop-color="#b42e8e"/><stop offset="0.866" stop-opacity="0.37" stop-color="#b42e8e"/><stop offset="0.875" stop-opacity="1.00" stop-color="#b42e8e"/><stop offset="0.884" stop-opacity="0.98" stop-color="#b42e8e"/><stop offset="0.893" stop-opacity="0.57" stop-color="#b42e8e"/><stop offset="0.902" stop-opacity="1.00" stop-color="#b42e8e"/><stop offset="0.911" stop-opacity="0.95" stop-color="#b42e8e"/><stop offset="0.920" stop-opacity="0.57" stop-color="#b42e8e"/><stop offset="0.929" stop-opacity="0.79" stop-color="#b42e8e"/><stop offset="0.938" stop-opacity="1.00" stop-color="#b42e8e"/><stop offset="0.946" stop-opacity="0.71" stop-color="#b42e8e"/><stop offset="0.955" stop-opacity="1.00" stop-color="#b42e8e"/><stop offset="0.964" stop-opacity="0.52" stop-color="#b42e8e"/><stop offset="0.973" stop-opacity="0.63" stop-color="#b42e8e"/><stop offset="0.982" stop-opacity="0.88" stop-color="#b42e8e"/><stop offset="0.991" stop-opacity="0.50" stop-color="#b42e8e"/><stop offset="1.000" stop-opacity="0.30" stop-color="#b42e8e"/></linearGradient></defs><defs><linearGradient id="g18" x1="0" y1="0" x2="0" y2="1"><stop offset="0.000" stop-opacity="1.00" stop-color="#c83a92"/><stop offset="0.009" stop-opacity="0.87" stop-color="#c83a92"/><stop offset="0.018" stop-opacity="1.00" stop-color="#c83a92"/><stop offset="0.027" stop-opacity="0.64" stop-color="#c83a92"/><stop offset="0.036" stop-opacity="0.58" stop-color="#c83a92"/><stop offset="0.045" stop-opacity="0.75" stop-color="#c83a92"/><stop offset="0.054" stop-opacity="0.59" stop-color="#c83a92"/><stop offset="0.062" stop-opacity="1.00" stop-color="#c83a92"/><stop offset="0.071" stop-opacity="0.69" stop-color="#c83a92"/><stop offset="0.080" stop-opacity="0.94" stop-color="#c83a92"/><stop offset="0.089" stop-opacity="0.53" stop-color="#c83a92"/><stop offset="0.098" stop-opacity="0.91" stop-color="#c83a92"/><stop offset="0.107" stop-opacity="0.78" stop-color="#c83a92"/><stop offset="0.116" stop-opacity="0.79" stop-color="#c83a92"/><stop offset="0.125" stop-opacity="0.48" stop-color="#c83a92"/><stop offset="0.134" stop-opacity="0.53" stop-color="#c83a92"/><stop offset="0.143" stop-opacity="1.00" stop-color="#c83a92"/><stop offset="0.152" stop-opacity="0.75" stop-color="#c83a92"/><stop offset="0.161" stop-opacity="0.65" stop-color="#c83a92"/><stop offset="0.170" stop-opacity="0.60" stop-color="#c83a92"/><stop offset="0.179" stop-opacity="0.68" stop-color="#c83a92"/><stop offset="0.188" stop-opacity="0.64" stop-color="#c83a92"/><stop offset="0.196" stop-opacity="0.45" stop-color="#c83a92"/><stop offset="0.205" stop-opacity="1.00" stop-color="#c83a92"/><stop offset="0.214" stop-opacity="0.74" stop-color="#c83a92"/><stop offset="0.223" stop-opacity="0.56" stop-color="#c83a92"/><stop offset="0.232" stop-opacity="1.00" stop-color="#c83a92"/><stop offset="0.241" stop-opacity="0.50" stop-color="#c83a92"/><stop offset="0.250" stop-opacity="0.67" stop-color="#c83a92"/><stop offset="0.259" stop-opacity="0.96" stop-color="#b42e8e"/><stop offset="0.268" stop-opacity="0.43" stop-color="#b42e8e"/><stop offset="0.277" stop-opacity="0.67" stop-color="#b42e8e"/><stop offset="0.286" stop-opacity="0.96" stop-color="#b42e8e"/><stop offset="0.295" stop-opacity="0.94" stop-color="#b42e8e"/><stop offset="0.304" stop-opacity="0.46" stop-color="#b42e8e"/><stop offset="0.312" stop-opacity="0.60" stop-color="#b42e8e"/><stop offset="0.321" stop-opacity="0.88" stop-color="#b42e8e"/><stop offset="0.330" stop-opacity="0.62" stop-color="#b42e8e"/><stop offset="0.339" stop-opacity="1.00" stop-color="#b42e8e"/><stop offset="0.348" stop-opacity="0.49" stop-color="#b42e8e"/><stop offset="0.357" stop-opacity="1.00" stop-color="#b42e8e"/><stop offset="0.366" stop-opacity="0.72" stop-color="#b42e8e"/><stop offset="0.375" stop-opacity="0.51" stop-color="#b42e8e"/><stop offset="0.384" stop-opacity="0.68" stop-color="#b42e8e"/><stop offset="0.393" stop-opacity="0.44" stop-color="#b42e8e"/><stop offset="0.402" stop-opacity="0.87" stop-color="#b42e8e"/><stop offset="0.411" stop-opacity="0.53" stop-color="#b42e8e"/><stop offset="0.420" stop-opacity="1.00" stop-color="#b42e8e"/><stop offset="0.429" stop-opacity="0.78" stop-color="#b42e8e"/><stop offset="0.438" stop-opacity="0.61" stop-color="#b42e8e"/><stop offset="0.446" stop-opacity="0.52" stop-color="#b42e8e"/><stop offset="0.455" stop-opacity="0.79" stop-color="#b42e8e"/><stop offset="0.464" stop-opacity="0.50" stop-color="#b42e8e"/><stop offset="0.473" stop-opacity="0.99" stop-color="#b42e8e"/><stop offset="0.482" stop-opacity="0.43" stop-color="#b42e8e"/><stop offset="0.491" stop-opacity="0.72" stop-color="#b42e8e"/><stop offset="0.500" stop-opacity="0.74" stop-color="#b42e8e"/><stop offset="0.509" stop-opacity="0.54" stop-color="#b42e8e"/><stop offset="0.518" stop-opacity="0.92" stop-color="#b42e8e"/><stop offset="0.527" stop-opacity="0.63" stop-color="#b42e8e"/><stop offset="0.536" stop-opacity="0.83" stop-color="#b42e8e"/><stop offset="0.545" stop-opacity="0.76" stop-color="#b42e8e"/><stop offset="0.554" stop-opacity="0.57" stop-color="#b42e8e"/><stop offset="0.562" stop-opacity="0.63" stop-color="#b42e8e"/><stop offset="0.571" stop-opacity="0.40" stop-color="#b42e8e"/><stop offset="0.580" stop-opacity="0.47" stop-color="#b42e8e"/><stop offset="0.589" stop-opacity="0.98" stop-color="#b42e8e"/><stop offset="0.598" stop-opacity="0.58" stop-color="#b42e8e"/><stop offset="0.607" stop-opacity="0.83" stop-color="#b42e8e"/><stop offset="0.616" stop-opacity="0.42" stop-color="#b42e8e"/><stop offset="0.625" stop-opacity="0.76" stop-color="#b42e8e"/><stop offset="0.634" stop-opacity="0.61" stop-color="#b42e8e"/><stop offset="0.643" stop-opacity="0.71" stop-color="#b42e8e"/><stop offset="0.652" stop-opacity="0.56" stop-color="#b42e8e"/><stop offset="0.661" stop-opacity="0.39" stop-color="#b42e8e"/><stop offset="0.670" stop-opacity="0.57" stop-color="#b42e8e"/><stop offset="0.679" stop-opacity="0.51" stop-color="#b42e8e"/><stop offset="0.688" stop-opacity="0.43" stop-color="#b42e8e"/><stop offset="0.696" stop-opacity="0.88" stop-color="#b42e8e"/><stop offset="0.705" stop-opacity="0.55" stop-color="#b42e8e"/><stop offset="0.714" stop-opacity="0.64" stop-color="#b42e8e"/><stop offset="0.723" stop-opacity="1.00" stop-color="#b42e8e"/><stop offset="0.732" stop-opacity="0.92" stop-color="#b42e8e"/><stop offset="0.741" stop-opacity="1.00" stop-color="#b42e8e"/><stop offset="0.750" stop-opacity="1.00" stop-color="#c83a92"/><stop offset="0.759" stop-opacity="0.60" stop-color="#c83a92"/><stop offset="0.768" stop-opacity="0.75" stop-color="#c83a92"/><stop offset="0.777" stop-opacity="0.50" stop-color="#c83a92"/><stop offset="0.786" stop-opacity="1.00" stop-color="#c83a92"/><stop offset="0.795" stop-opacity="1.00" stop-color="#c83a92"/><stop offset="0.804" stop-opacity="0.83" stop-color="#c83a92"/><stop offset="0.812" stop-opacity="0.90" stop-color="#c83a92"/><stop offset="0.821" stop-opacity="1.00" stop-color="#c83a92"/><stop offset="0.830" stop-opacity="1.00" stop-color="#c83a92"/><stop offset="0.839" stop-opacity="0.72" stop-color="#c83a92"/><stop offset="0.848" stop-opacity="1.00" stop-color="#c83a92"/><stop offset="0.857" stop-opacity="0.83" stop-color="#c83a92"/><stop offset="0.866" stop-opacity="1.00" stop-color="#c83a92"/><stop offset="0.875" stop-opacity="0.66" stop-color="#c83a92"/><stop offset="0.884" stop-opacity="0.42" stop-color="#b42e8e"/><stop offset="0.893" stop-opacity="1.00" stop-color="#b42e8e"/><stop offset="0.902" stop-opacity="0.89" stop-color="#b42e8e"/><stop offset="0.911" stop-opacity="0.87" stop-color="#b42e8e"/><stop offset="0.920" stop-opacity="0.37" stop-color="#b42e8e"/><stop offset="0.929" stop-opacity="0.37" stop-color="#b42e8e"/><stop offset="0.938" stop-opacity="0.46" stop-color="#b42e8e"/><stop offset="0.946" stop-opacity="0.49" stop-color="#b42e8e"/><stop offset="0.955" stop-opacity="0.56" stop-color="#b42e8e"/><stop offset="0.964" stop-opacity="0.62" stop-color="#b42e8e"/><stop offset="0.973" stop-opacity="0.37" stop-color="#b42e8e"/><stop offset="0.982" stop-opacity="0.57" stop-color="#b42e8e"/><stop offset="0.991" stop-opacity="0.82" stop-color="#b42e8e"/><stop offset="1.000" stop-opacity="0.25" stop-color="#b42e8e"/></linearGradient></defs><defs><linearGradient id="g19" x1="0" y1="0" x2="0" y2="1"><stop offset="0.000" stop-opacity="0.50" stop-color="#b42e8e"/><stop offset="0.009" stop-opacity="0.40" stop-color="#b42e8e"/><stop offset="0.018" stop-opacity="0.45" stop-color="#b42e8e"/><stop offset="0.027" stop-opacity="0.27" stop-color="#b42e8e"/><stop offset="0.036" stop-opacity="0.35" stop-color="#b42e8e"/><stop offset="0.045" stop-opacity="0.44" stop-color="#b42e8e"/><stop offset="0.054" stop-opacity="0.31" stop-color="#b42e8e"/><stop offset="0.062" stop-opacity="0.18" stop-color="#b42e8e"/><stop offset="0.071" stop-opacity="0.50" stop-color="#b42e8e"/><stop offset="0.080" stop-opacity="0.48" stop-color="#b42e8e"/><stop offset="0.089" stop-opacity="0.55" stop-color="#b42e8e"/><stop offset="0.098" stop-opacity="0.37" stop-color="#b42e8e"/><stop offset="0.107" stop-opacity="0.98" stop-color="#b42e8e"/><stop offset="0.116" stop-opacity="0.79" stop-color="#b42e8e"/><stop offset="0.125" stop-opacity="0.37" stop-color="#b42e8e"/><stop offset="0.134" stop-opacity="0.52" stop-color="#b42e8e"/><stop offset="0.143" stop-opacity="0.42" stop-color="#b42e8e"/><stop offset="0.152" stop-opacity="0.93" stop-color="#b42e8e"/><stop offset="0.161" stop-opacity="0.50" stop-color="#b42e8e"/><stop offset="0.170" stop-opacity="1.00" stop-color="#b42e8e"/><stop offset="0.179" stop-opacity="0.90" stop-color="#b42e8e"/><stop offset="0.188" stop-opacity="0.40" stop-color="#b42e8e"/><stop offset="0.196" stop-opacity="0.86" stop-color="#b42e8e"/><stop offset="0.205" stop-opacity="0.63" stop-color="#b42e8e"/><stop offset="0.214" stop-opacity="0.90" stop-color="#b42e8e"/><stop offset="0.223" stop-opacity="0.96" stop-color="#b42e8e"/><stop offset="0.232" stop-opacity="0.55" stop-color="#b42e8e"/><stop offset="0.241" stop-opacity="0.40" stop-color="#b42e8e"/><stop offset="0.250" stop-opacity="1.00" stop-color="#b42e8e"/><stop offset="0.259" stop-opacity="0.34" stop-color="#b42e8e"/><stop offset="0.268" stop-opacity="0.54" stop-color="#b42e8e"/><stop offset="0.277" stop-opacity="0.45" stop-color="#b42e8e"/><stop offset="0.286" stop-opacity="0.46" stop-color="#b42e8e"/><stop offset="0.295" stop-opacity="0.50" stop-color="#b42e8e"/><stop offset="0.304" stop-opacity="0.42" stop-color="#b42e8e"/><stop offset="0.312" stop-opacity="0.68" stop-color="#b42e8e"/><stop offset="0.321" stop-opacity="0.38" stop-color="#b42e8e"/><stop offset="0.330" stop-opacity="0.86" stop-color="#b42e8e"/><stop offset="0.339" stop-opacity="0.66" stop-color="#b42e8e"/><stop offset="0.348" stop-opacity="0.72" stop-color="#b42e8e"/><stop offset="0.357" stop-opacity="1.00" stop-color="#b42e8e"/><stop offset="0.366" stop-opacity="0.43" stop-color="#b42e8e"/><stop offset="0.375" stop-opacity="0.91" stop-color="#b42e8e"/><stop offset="0.384" stop-opacity="0.37" stop-color="#b42e8e"/><stop offset="0.393" stop-opacity="0.86" stop-color="#b42e8e"/><stop offset="0.402" stop-opacity="0.94" stop-color="#b42e8e"/><stop offset="0.411" stop-opacity="0.28" stop-color="#b42e8e"/><stop offset="0.420" stop-opacity="0.39" stop-color="#b42e8e"/><stop offset="0.429" stop-opacity="0.55" stop-color="#b42e8e"/><stop offset="0.438" stop-opacity="0.42" stop-color="#b42e8e"/><stop offset="0.446" stop-opacity="0.39" stop-color="#b42e8e"/><stop offset="0.455" stop-opacity="0.27" stop-color="#b42e8e"/><stop offset="0.464" stop-opacity="0.20" stop-color="#b42e8e"/><stop offset="0.473" stop-opacity="0.32" stop-color="#b42e8e"/><stop offset="0.482" stop-opacity="0.34" stop-color="#b42e8e"/><stop offset="0.491" stop-opacity="0.25" stop-color="#b42e8e"/><stop offset="0.500" stop-opacity="0.30" stop-color="#b42e8e"/><stop offset="0.509" stop-opacity="0.23" stop-color="#b42e8e"/><stop offset="0.518" stop-opacity="0.45" stop-color="#b42e8e"/><stop offset="0.527" stop-opacity="0.44" stop-color="#b42e8e"/><stop offset="0.536" stop-opacity="0.27" stop-color="#b42e8e"/><stop offset="0.545" stop-opacity="0.27" stop-color="#b42e8e"/><stop offset="0.554" stop-opacity="0.38" stop-color="#b42e8e"/><stop offset="0.562" stop-opacity="0.67" stop-color="#b42e8e"/><stop offset="0.571" stop-opacity="1.00" stop-color="#b42e8e"/><stop offset="0.580" stop-opacity="0.60" stop-color="#b42e8e"/><stop offset="0.589" stop-opacity="0.56" stop-color="#b42e8e"/><stop offset="0.598" stop-opacity="1.00" stop-color="#b42e8e"/><stop offset="0.607" stop-opacity="0.44" stop-color="#b42e8e"/><stop offset="0.616" stop-opacity="0.76" stop-color="#b42e8e"/><stop offset="0.625" stop-opacity="0.59" stop-color="#b42e8e"/><stop offset="0.634" stop-opacity="0.95" stop-color="#b42e8e"/><stop offset="0.643" stop-opacity="0.75" stop-color="#b42e8e"/><stop offset="0.652" stop-opacity="0.91" stop-color="#b42e8e"/><stop offset="0.661" stop-opacity="0.46" stop-color="#b42e8e"/><stop offset="0.670" stop-opacity="0.84" stop-color="#b42e8e"/><stop offset="0.679" stop-opacity="0.52" stop-color="#b42e8e"/><stop offset="0.688" stop-opacity="0.45" stop-color="#b42e8e"/><stop offset="0.696" stop-opacity="0.61" stop-color="#b42e8e"/><stop offset="0.705" stop-opacity="0.64" stop-color="#b42e8e"/><stop offset="0.714" stop-opacity="0.28" stop-color="#b42e8e"/><stop offset="0.723" stop-opacity="0.37" stop-color="#b42e8e"/><stop offset="0.732" stop-opacity="0.40" stop-color="#b42e8e"/><stop offset="0.741" stop-opacity="0.33" stop-color="#b42e8e"/><stop offset="0.750" stop-opacity="0.25" stop-color="#b42e8e"/><stop offset="0.759" stop-opacity="0.36" stop-color="#b42e8e"/><stop offset="0.768" stop-opacity="0.32" stop-color="#b42e8e"/><stop offset="0.777" stop-opacity="0.57" stop-color="#b42e8e"/><stop offset="0.786" stop-opacity="0.45" stop-color="#b42e8e"/><stop offset="0.795" stop-opacity="0.28" stop-color="#b42e8e"/><stop offset="0.804" stop-opacity="0.39" stop-color="#b42e8e"/><stop offset="0.812" stop-opacity="0.46" stop-color="#b42e8e"/><stop offset="0.821" stop-opacity="0.40" stop-color="#b42e8e"/><stop offset="0.830" stop-opacity="0.31" stop-color="#b42e8e"/><stop offset="0.839" stop-opacity="0.26" stop-color="#b42e8e"/><stop offset="0.848" stop-opacity="0.23" stop-color="#b42e8e"/><stop offset="0.857" stop-opacity="0.72" stop-color="#b42e8e"/><stop offset="0.866" stop-opacity="0.60" stop-color="#b42e8e"/><stop offset="0.875" stop-opacity="0.27" stop-color="#b42e8e"/><stop offset="0.884" stop-opacity="0.58" stop-color="#b42e8e"/><stop offset="0.893" stop-opacity="0.71" stop-color="#b42e8e"/><stop offset="0.902" stop-opacity="0.50" stop-color="#b42e8e"/><stop offset="0.911" stop-opacity="0.28" stop-color="#b42e8e"/><stop offset="0.920" stop-opacity="0.47" stop-color="#b42e8e"/><stop offset="0.929" stop-opacity="0.44" stop-color="#b42e8e"/><stop offset="0.938" stop-opacity="0.32" stop-color="#b42e8e"/><stop offset="0.946" stop-opacity="0.49" stop-color="#b42e8e"/><stop offset="0.955" stop-opacity="0.23" stop-color="#b42e8e"/><stop offset="0.964" stop-opacity="0.68" stop-color="#b42e8e"/><stop offset="0.973" stop-opacity="0.55" stop-color="#b42e8e"/><stop offset="0.982" stop-opacity="0.54" stop-color="#b42e8e"/><stop offset="0.991" stop-opacity="0.69" stop-color="#b42e8e"/><stop offset="1.000" stop-opacity="0.43" stop-color="#b42e8e"/></linearGradient></defs><defs><linearGradient id="g20" x1="0" y1="0" x2="0" y2="1"><stop offset="0.000" stop-opacity="0.53" stop-color="#b42e8e"/><stop offset="0.009" stop-opacity="0.52" stop-color="#b42e8e"/><stop offset="0.018" stop-opacity="0.44" stop-color="#b42e8e"/><stop offset="0.027" stop-opacity="0.36" stop-color="#b42e8e"/><stop offset="0.036" stop-opacity="0.92" stop-color="#b42e8e"/><stop offset="0.045" stop-opacity="0.97" stop-color="#b42e8e"/><stop offset="0.054" stop-opacity="0.56" stop-color="#b42e8e"/><stop offset="0.062" stop-opacity="0.48" stop-color="#b42e8e"/><stop offset="0.071" stop-opacity="0.82" stop-color="#b42e8e"/><stop offset="0.080" stop-opacity="0.97" stop-color="#b42e8e"/><stop offset="0.089" stop-opacity="1.00" stop-color="#b42e8e"/><stop offset="0.098" stop-opacity="0.46" stop-color="#b42e8e"/><stop offset="0.107" stop-opacity="0.93" stop-color="#b42e8e"/><stop offset="0.116" stop-opacity="0.96" stop-color="#b42e8e"/><stop offset="0.125" stop-opacity="0.89" stop-color="#b42e8e"/><stop offset="0.134" stop-opacity="0.58" stop-color="#b42e8e"/><stop offset="0.143" stop-opacity="0.48" stop-color="#b42e8e"/><stop offset="0.152" stop-opacity="0.96" stop-color="#b42e8e"/><stop offset="0.161" stop-opacity="0.58" stop-color="#b42e8e"/><stop offset="0.170" stop-opacity="0.61" stop-color="#b42e8e"/><stop offset="0.179" stop-opacity="0.75" stop-color="#b42e8e"/><stop offset="0.188" stop-opacity="0.61" stop-color="#b42e8e"/><stop offset="0.196" stop-opacity="0.96" stop-color="#b42e8e"/><stop offset="0.205" stop-opacity="0.52" stop-color="#b42e8e"/><stop offset="0.214" stop-opacity="0.37" stop-color="#b42e8e"/><stop offset="0.223" stop-opacity="0.76" stop-color="#b42e8e"/><stop offset="0.232" stop-opacity="0.81" stop-color="#b42e8e"/><stop offset="0.241" stop-opacity="0.95" stop-color="#b42e8e"/><stop offset="0.250" stop-opacity="0.87" stop-color="#b42e8e"/><stop offset="0.259" stop-opacity="0.77" stop-color="#b42e8e"/><stop offset="0.268" stop-opacity="0.80" stop-color="#b42e8e"/><stop offset="0.277" stop-opacity="0.54" stop-color="#b42e8e"/><stop offset="0.286" stop-opacity="0.54" stop-color="#b42e8e"/><stop offset="0.295" stop-opacity="0.35" stop-color="#b42e8e"/><stop offset="0.304" stop-opacity="0.43" stop-color="#b42e8e"/><stop offset="0.312" stop-opacity="0.59" stop-color="#b42e8e"/><stop offset="0.321" stop-opacity="0.30" stop-color="#b42e8e"/><stop offset="0.330" stop-opacity="0.65" stop-color="#b42e8e"/><stop offset="0.339" stop-opacity="0.35" stop-color="#b42e8e"/><stop offset="0.348" stop-opacity="0.51" stop-color="#b42e8e"/><stop offset="0.357" stop-opacity="0.81" stop-color="#b42e8e"/><stop offset="0.366" stop-opacity="0.31" stop-color="#b42e8e"/><stop offset="0.375" stop-opacity="0.28" stop-color="#b42e8e"/><stop offset="0.384" stop-opacity="0.51" stop-color="#b42e8e"/><stop offset="0.393" stop-opacity="0.37" stop-color="#b42e8e"/><stop offset="0.402" stop-opacity="0.67" stop-color="#b42e8e"/><stop offset="0.411" stop-opacity="0.26" stop-color="#b42e8e"/><stop offset="0.420" stop-opacity="0.74" stop-color="#b42e8e"/><stop offset="0.429" stop-opacity="0.74" stop-color="#b42e8e"/><stop offset="0.438" stop-opacity="0.71" stop-color="#b42e8e"/><stop offset="0.446" stop-opacity="0.50" stop-color="#b42e8e"/><stop offset="0.455" stop-opacity="0.42" stop-color="#b42e8e"/><stop offset="0.464" stop-opacity="0.63" stop-color="#b42e8e"/><stop offset="0.473" stop-opacity="0.55" stop-color="#b42e8e"/><stop offset="0.482" stop-opacity="0.50" stop-color="#b42e8e"/><stop offset="0.491" stop-opacity="0.45" stop-color="#b42e8e"/><stop offset="0.500" stop-opacity="0.51" stop-color="#b42e8e"/><stop offset="0.509" stop-opacity="0.64" stop-color="#b42e8e"/><stop offset="0.518" stop-opacity="0.73" stop-color="#b42e8e"/><stop offset="0.527" stop-opacity="0.77" stop-color="#b42e8e"/><stop offset="0.536" stop-opacity="0.35" stop-color="#b42e8e"/><stop offset="0.545" stop-opacity="0.43" stop-color="#b42e8e"/><stop offset="0.554" stop-opacity="0.51" stop-color="#b42e8e"/><stop offset="0.562" stop-opacity="0.58" stop-color="#b42e8e"/><stop offset="0.571" stop-opacity="0.45" stop-color="#b42e8e"/><stop offset="0.580" stop-opacity="0.37" stop-color="#b42e8e"/><stop offset="0.589" stop-opacity="0.30" stop-color="#b42e8e"/><stop offset="0.598" stop-opacity="0.44" stop-color="#b42e8e"/><stop offset="0.607" stop-opacity="0.52" stop-color="#b42e8e"/><stop offset="0.616" stop-opacity="0.81" stop-color="#b42e8e"/><stop offset="0.625" stop-opacity="0.77" stop-color="#b42e8e"/><stop offset="0.634" stop-opacity="0.75" stop-color="#b42e8e"/><stop offset="0.643" stop-opacity="0.81" stop-color="#b42e8e"/><stop offset="0.652" stop-opacity="0.80" stop-color="#b42e8e"/><stop offset="0.661" stop-opacity="0.61" stop-color="#b42e8e"/><stop offset="0.670" stop-opacity="0.72" stop-color="#b42e8e"/><stop offset="0.679" stop-opacity="0.29" stop-color="#b42e8e"/><stop offset="0.688" stop-opacity="0.64" stop-color="#b42e8e"/><stop offset="0.696" stop-opacity="0.60" stop-color="#b42e8e"/><stop offset="0.705" stop-opacity="0.24" stop-color="#b42e8e"/><stop offset="0.714" stop-opacity="0.32" stop-color="#b42e8e"/><stop offset="0.723" stop-opacity="0.45" stop-color="#b42e8e"/><stop offset="0.732" stop-opacity="0.30" stop-color="#b42e8e"/><stop offset="0.741" stop-opacity="0.35" stop-color="#b42e8e"/><stop offset="0.750" stop-opacity="0.24" stop-color="#b42e8e"/><stop offset="0.759" stop-opacity="0.25" stop-color="#b42e8e"/><stop offset="0.768" stop-opacity="0.42" stop-color="#b42e8e"/><stop offset="0.777" stop-opacity="0.15" stop-color="#b42e8e"/><stop offset="0.786" stop-opacity="0.20" stop-color="#b42e8e"/><stop offset="0.795" stop-opacity="0.36" stop-color="#b42e8e"/><stop offset="0.804" stop-opacity="0.29" stop-color="#b42e8e"/><stop offset="0.812" stop-opacity="0.17" stop-color="#b42e8e"/><stop offset="0.821" stop-opacity="0.35" stop-color="#b42e8e"/><stop offset="0.830" stop-opacity="0.26" stop-color="#b42e8e"/><stop offset="0.839" stop-opacity="0.33" stop-color="#b42e8e"/><stop offset="0.848" stop-opacity="0.28" stop-color="#b42e8e"/><stop offset="0.857" stop-opacity="0.31" stop-color="#b42e8e"/><stop offset="0.866" stop-opacity="0.32" stop-color="#b42e8e"/><stop offset="0.875" stop-opacity="0.27" stop-color="#b42e8e"/><stop offset="0.884" stop-opacity="0.18" stop-color="#b42e8e"/><stop offset="0.893" stop-opacity="0.20" stop-color="#b42e8e"/><stop offset="0.902" stop-opacity="0.43" stop-color="#b42e8e"/><stop offset="0.911" stop-opacity="0.32" stop-color="#b42e8e"/><stop offset="0.920" stop-opacity="0.18" stop-color="#b42e8e"/><stop offset="0.929" stop-opacity="0.42" stop-color="#b42e8e"/><stop offset="0.938" stop-opacity="0.22" stop-color="#b42e8e"/><stop offset="0.946" stop-opacity="0.17" stop-color="#b42e8e"/><stop offset="0.955" stop-opacity="0.31" stop-color="#b42e8e"/><stop offset="0.964" stop-opacity="0.22" stop-color="#b42e8e"/><stop offset="0.973" stop-opacity="0.30" stop-color="#b42e8e"/><stop offset="0.982" stop-opacity="0.32" stop-color="#b42e8e"/><stop offset="0.991" stop-opacity="0.22" stop-color="#b42e8e"/><stop offset="1.000" stop-opacity="0.40" stop-color="#b42e8e"/></linearGradient></defs><defs><linearGradient id="g21" x1="0" y1="0" x2="0" y2="1"><stop offset="0.000" stop-opacity="0.14" stop-color="#b42e8e"/><stop offset="0.009" stop-opacity="0.24" stop-color="#b42e8e"/><stop offset="0.018" stop-opacity="0.26" stop-color="#b42e8e"/><stop offset="0.027" stop-opacity="0.13" stop-color="#b42e8e"/><stop offset="0.036" stop-opacity="0.21" stop-color="#b42e8e"/><stop offset="0.045" stop-opacity="0.13" stop-color="#b42e8e"/><stop offset="0.054" stop-opacity="0.22" stop-color="#b42e8e"/><stop offset="0.062" stop-opacity="0.32" stop-color="#b42e8e"/><stop offset="0.071" stop-opacity="0.25" stop-color="#b42e8e"/><stop offset="0.080" stop-opacity="0.29" stop-color="#b42e8e"/><stop offset="0.089" stop-opacity="0.30" stop-color="#b42e8e"/><stop offset="0.098" stop-opacity="0.14" stop-color="#b42e8e"/><stop offset="0.107" stop-opacity="0.35" stop-color="#b42e8e"/><stop offset="0.116" stop-opacity="0.46" stop-color="#b42e8e"/><stop offset="0.125" stop-opacity="0.22" stop-color="#b42e8e"/><stop offset="0.134" stop-opacity="0.50" stop-color="#b42e8e"/><stop offset="0.143" stop-opacity="0.33" stop-color="#b42e8e"/><stop offset="0.152" stop-opacity="0.24" stop-color="#b42e8e"/><stop offset="0.161" stop-opacity="0.55" stop-color="#b42e8e"/><stop offset="0.170" stop-opacity="0.40" stop-color="#b42e8e"/><stop offset="0.179" stop-opacity="0.48" stop-color="#b42e8e"/><stop offset="0.188" stop-opacity="0.23" stop-color="#b42e8e"/><stop offset="0.196" stop-opacity="0.48" stop-color="#b42e8e"/><stop offset="0.205" stop-opacity="0.20" stop-color="#b42e8e"/><stop offset="0.214" stop-opacity="0.27" stop-color="#b42e8e"/><stop offset="0.223" stop-opacity="0.32" stop-color="#b42e8e"/><stop offset="0.232" stop-opacity="0.18" stop-color="#b42e8e"/><stop offset="0.241" stop-opacity="0.41" stop-color="#b42e8e"/><stop offset="0.250" stop-opacity="0.26" stop-color="#b42e8e"/><stop offset="0.259" stop-opacity="0.43" stop-color="#b42e8e"/><stop offset="0.268" stop-opacity="0.66" stop-color="#b42e8e"/><stop offset="0.277" stop-opacity="0.50" stop-color="#b42e8e"/><stop offset="0.286" stop-opacity="0.76" stop-color="#b42e8e"/><stop offset="0.295" stop-opacity="0.61" stop-color="#b42e8e"/><stop offset="0.304" stop-opacity="0.75" stop-color="#b42e8e"/><stop offset="0.312" stop-opacity="0.58" stop-color="#b42e8e"/><stop offset="0.321" stop-opacity="0.78" stop-color="#b42e8e"/><stop offset="0.330" stop-opacity="0.75" stop-color="#b42e8e"/><stop offset="0.339" stop-opacity="0.35" stop-color="#b42e8e"/><stop offset="0.348" stop-opacity="0.68" stop-color="#b42e8e"/><stop offset="0.357" stop-opacity="0.45" stop-color="#b42e8e"/><stop offset="0.366" stop-opacity="0.69" stop-color="#b42e8e"/><stop offset="0.375" stop-opacity="0.64" stop-color="#b42e8e"/><stop offset="0.384" stop-opacity="0.73" stop-color="#b42e8e"/><stop offset="0.393" stop-opacity="0.33" stop-color="#b42e8e"/><stop offset="0.402" stop-opacity="0.47" stop-color="#b42e8e"/><stop offset="0.411" stop-opacity="0.68" stop-color="#b42e8e"/><stop offset="0.420" stop-opacity="0.80" stop-color="#b42e8e"/><stop offset="0.429" stop-opacity="0.67" stop-color="#b42e8e"/><stop offset="0.438" stop-opacity="0.28" stop-color="#b42e8e"/><stop offset="0.446" stop-opacity="0.60" stop-color="#b42e8e"/><stop offset="0.455" stop-opacity="0.31" stop-color="#b42e8e"/><stop offset="0.464" stop-opacity="0.57" stop-color="#b42e8e"/><stop offset="0.473" stop-opacity="0.71" stop-color="#b42e8e"/><stop offset="0.482" stop-opacity="0.32" stop-color="#b42e8e"/><stop offset="0.491" stop-opacity="0.78" stop-color="#b42e8e"/><stop offset="0.500" stop-opacity="0.64" stop-color="#b42e8e"/><stop offset="0.509" stop-opacity="0.53" stop-color="#b42e8e"/><stop offset="0.518" stop-opacity="0.48" stop-color="#b42e8e"/><stop offset="0.527" stop-opacity="0.67" stop-color="#b42e8e"/><stop offset="0.536" stop-opacity="0.97" stop-color="#b42e8e"/><stop offset="0.545" stop-opacity="0.77" stop-color="#b42e8e"/><stop offset="0.554" stop-opacity="0.42" stop-color="#b42e8e"/><stop offset="0.562" stop-opacity="0.35" stop-color="#b42e8e"/><stop offset="0.571" stop-opacity="0.42" stop-color="#b42e8e"/><stop offset="0.580" stop-opacity="0.94" stop-color="#b42e8e"/><stop offset="0.589" stop-opacity="0.29" stop-color="#b42e8e"/><stop offset="0.598" stop-opacity="0.46" stop-color="#b42e8e"/><stop offset="0.607" stop-opacity="0.34" stop-color="#b42e8e"/><stop offset="0.616" stop-opacity="0.53" stop-color="#b42e8e"/><stop offset="0.625" stop-opacity="0.38" stop-color="#b42e8e"/><stop offset="0.634" stop-opacity="0.27" stop-color="#b42e8e"/><stop offset="0.643" stop-opacity="0.61" stop-color="#b42e8e"/><stop offset="0.652" stop-opacity="0.46" stop-color="#b42e8e"/><stop offset="0.661" stop-opacity="0.53" stop-color="#b42e8e"/><stop offset="0.670" stop-opacity="0.58" stop-color="#b42e8e"/><stop offset="0.679" stop-opacity="0.65" stop-color="#b42e8e"/><stop offset="0.688" stop-opacity="0.21" stop-color="#b42e8e"/><stop offset="0.696" stop-opacity="0.37" stop-color="#b42e8e"/><stop offset="0.705" stop-opacity="0.28" stop-color="#b42e8e"/><stop offset="0.714" stop-opacity="0.44" stop-color="#b42e8e"/><stop offset="0.723" stop-opacity="0.61" stop-color="#b42e8e"/><stop offset="0.732" stop-opacity="0.58" stop-color="#b42e8e"/><stop offset="0.741" stop-opacity="0.22" stop-color="#b42e8e"/><stop offset="0.750" stop-opacity="0.29" stop-color="#b42e8e"/><stop offset="0.759" stop-opacity="0.59" stop-color="#b42e8e"/><stop offset="0.768" stop-opacity="0.52" stop-color="#b42e8e"/><stop offset="0.777" stop-opacity="0.39" stop-color="#b42e8e"/><stop offset="0.786" stop-opacity="0.43" stop-color="#b42e8e"/><stop offset="0.795" stop-opacity="0.28" stop-color="#b42e8e"/><stop offset="0.804" stop-opacity="0.60" stop-color="#b42e8e"/><stop offset="0.812" stop-opacity="0.39" stop-color="#b42e8e"/><stop offset="0.821" stop-opacity="0.61" stop-color="#b42e8e"/><stop offset="0.830" stop-opacity="0.49" stop-color="#b42e8e"/><stop offset="0.839" stop-opacity="0.24" stop-color="#b42e8e"/><stop offset="0.848" stop-opacity="0.36" stop-color="#b42e8e"/><stop offset="0.857" stop-opacity="0.31" stop-color="#b42e8e"/><stop offset="0.866" stop-opacity="0.62" stop-color="#b42e8e"/><stop offset="0.875" stop-opacity="0.48" stop-color="#b42e8e"/><stop offset="0.884" stop-opacity="0.23" stop-color="#b42e8e"/><stop offset="0.893" stop-opacity="0.29" stop-color="#b42e8e"/><stop offset="0.902" stop-opacity="0.37" stop-color="#b42e8e"/><stop offset="0.911" stop-opacity="0.42" stop-color="#b42e8e"/><stop offset="0.920" stop-opacity="0.47" stop-color="#b42e8e"/><stop offset="0.929" stop-opacity="0.39" stop-color="#b42e8e"/><stop offset="0.938" stop-opacity="0.37" stop-color="#b42e8e"/><stop offset="0.946" stop-opacity="0.21" stop-color="#b42e8e"/><stop offset="0.955" stop-opacity="0.48" stop-color="#b42e8e"/><stop offset="0.964" stop-opacity="0.36" stop-color="#b42e8e"/><stop offset="0.973" stop-opacity="0.22" stop-color="#b42e8e"/><stop offset="0.982" stop-opacity="0.42" stop-color="#b42e8e"/><stop offset="0.991" stop-opacity="0.66" stop-color="#b42e8e"/><stop offset="1.000" stop-opacity="0.19" stop-color="#b42e8e"/></linearGradient></defs><defs><linearGradient id="g22" x1="0" y1="0" x2="0" y2="1"><stop offset="0.000" stop-opacity="0.45" stop-color="#b42e8e"/><stop offset="0.009" stop-opacity="0.84" stop-color="#b42e8e"/><stop offset="0.018" stop-opacity="0.54" stop-color="#b42e8e"/><stop offset="0.027" stop-opacity="0.54" stop-color="#b42e8e"/><stop offset="0.036" stop-opacity="0.71" stop-color="#b42e8e"/><stop offset="0.045" stop-opacity="0.53" stop-color="#b42e8e"/><stop offset="0.054" stop-opacity="0.76" stop-color="#b42e8e"/><stop offset="0.062" stop-opacity="0.73" stop-color="#b42e8e"/><stop offset="0.071" stop-opacity="1.00" stop-color="#b42e8e"/><stop offset="0.080" stop-opacity="1.00" stop-color="#b42e8e"/><stop offset="0.089" stop-opacity="0.36" stop-color="#b42e8e"/><stop offset="0.098" stop-opacity="0.76" stop-color="#b42e8e"/><stop offset="0.107" stop-opacity="0.92" stop-color="#b42e8e"/><stop offset="0.116" stop-opacity="0.99" stop-color="#b42e8e"/><stop offset="0.125" stop-opacity="0.92" stop-color="#b42e8e"/><stop offset="0.134" stop-opacity="0.81" stop-color="#b42e8e"/><stop offset="0.143" stop-opacity="0.81" stop-color="#b42e8e"/><stop offset="0.152" stop-opacity="0.61" stop-color="#b42e8e"/><stop offset="0.161" stop-opacity="0.55" stop-color="#b42e8e"/><stop offset="0.170" stop-opacity="0.93" stop-color="#b42e8e"/><stop offset="0.179" stop-opacity="0.99" stop-color="#b42e8e"/><stop offset="0.188" stop-opacity="1.00" stop-color="#b42e8e"/><stop offset="0.196" stop-opacity="0.85" stop-color="#b42e8e"/><stop offset="0.205" stop-opacity="0.57" stop-color="#b42e8e"/><stop offset="0.214" stop-opacity="0.91" stop-color="#b42e8e"/><stop offset="0.223" stop-opacity="0.89" stop-color="#b42e8e"/><stop offset="0.232" stop-opacity="0.72" stop-color="#b42e8e"/><stop offset="0.241" stop-opacity="0.81" stop-color="#b42e8e"/><stop offset="0.250" stop-opacity="0.60" stop-color="#b42e8e"/><stop offset="0.259" stop-opacity="0.75" stop-color="#b42e8e"/><stop offset="0.268" stop-opacity="0.64" stop-color="#b42e8e"/><stop offset="0.277" stop-opacity="0.38" stop-color="#b42e8e"/><stop offset="0.286" stop-opacity="0.59" stop-color="#b42e8e"/><stop offset="0.295" stop-opacity="0.58" stop-color="#b42e8e"/><stop offset="0.304" stop-opacity="1.00" stop-color="#b42e8e"/><stop offset="0.312" stop-opacity="0.70" stop-color="#b42e8e"/><stop offset="0.321" stop-opacity="0.61" stop-color="#b42e8e"/><stop offset="0.330" stop-opacity="0.52" stop-color="#b42e8e"/><stop offset="0.339" stop-opacity="0.51" stop-color="#b42e8e"/><stop offset="0.348" stop-opacity="0.60" stop-color="#b42e8e"/><stop offset="0.357" stop-opacity="0.44" stop-color="#b42e8e"/><stop offset="0.366" stop-opacity="0.34" stop-color="#b42e8e"/><stop offset="0.375" stop-opacity="0.99" stop-color="#b42e8e"/><stop offset="0.384" stop-opacity="0.68" stop-color="#b42e8e"/><stop offset="0.393" stop-opacity="0.67" stop-color="#b42e8e"/><stop offset="0.402" stop-opacity="0.76" stop-color="#b42e8e"/><stop offset="0.411" stop-opacity="0.56" stop-color="#b42e8e"/><stop offset="0.420" stop-opacity="0.46" stop-color="#b42e8e"/><stop offset="0.429" stop-opacity="0.39" stop-color="#b42e8e"/><stop offset="0.438" stop-opacity="0.56" stop-color="#b42e8e"/><stop offset="0.446" stop-opacity="0.57" stop-color="#b42e8e"/><stop offset="0.455" stop-opacity="0.88" stop-color="#b42e8e"/><stop offset="0.464" stop-opacity="0.75" stop-color="#b42e8e"/><stop offset="0.473" stop-opacity="1.00" stop-color="#b42e8e"/><stop offset="0.482" stop-opacity="0.59" stop-color="#b42e8e"/><stop offset="0.491" stop-opacity="1.00" stop-color="#b42e8e"/><stop offset="0.500" stop-opacity="0.78" stop-color="#b42e8e"/><stop offset="0.509" stop-opacity="0.47" stop-color="#b42e8e"/><stop offset="0.518" stop-opacity="0.56" stop-color="#b42e8e"/><stop offset="0.527" stop-opacity="0.92" stop-color="#b42e8e"/><stop offset="0.536" stop-opacity="1.00" stop-color="#b42e8e"/><stop offset="0.545" stop-opacity="0.72" stop-color="#b42e8e"/><stop offset="0.554" stop-opacity="1.00" stop-color="#b42e8e"/><stop offset="0.562" stop-opacity="0.79" stop-color="#b42e8e"/><stop offset="0.571" stop-opacity="1.00" stop-color="#b42e8e"/><stop offset="0.580" stop-opacity="0.46" stop-color="#b42e8e"/><stop offset="0.589" stop-opacity="0.84" stop-color="#b42e8e"/><stop offset="0.598" stop-opacity="1.00" stop-color="#b42e8e"/><stop offset="0.607" stop-opacity="0.65" stop-color="#b42e8e"/><stop offset="0.616" stop-opacity="0.63" stop-color="#b42e8e"/><stop offset="0.625" stop-opacity="0.42" stop-color="#b42e8e"/><stop offset="0.634" stop-opacity="0.55" stop-color="#b42e8e"/><stop offset="0.643" stop-opacity="0.64" stop-color="#b42e8e"/><stop offset="0.652" stop-opacity="1.00" stop-color="#b42e8e"/><stop offset="0.661" stop-opacity="0.60" stop-color="#b42e8e"/><stop offset="0.670" stop-opacity="0.76" stop-color="#b42e8e"/><stop offset="0.679" stop-opacity="0.58" stop-color="#b42e8e"/><stop offset="0.688" stop-opacity="0.94" stop-color="#b42e8e"/><stop offset="0.696" stop-opacity="1.00" stop-color="#b42e8e"/><stop offset="0.705" stop-opacity="0.98" stop-color="#b42e8e"/><stop offset="0.714" stop-opacity="0.58" stop-color="#b42e8e"/><stop offset="0.723" stop-opacity="1.00" stop-color="#b42e8e"/><stop offset="0.732" stop-opacity="1.00" stop-color="#b42e8e"/><stop offset="0.741" stop-opacity="0.94" stop-color="#b42e8e"/><stop offset="0.750" stop-opacity="0.47" stop-color="#b42e8e"/><stop offset="0.759" stop-opacity="0.94" stop-color="#b42e8e"/><stop offset="0.768" stop-opacity="0.99" stop-color="#b42e8e"/><stop offset="0.777" stop-opacity="0.59" stop-color="#b42e8e"/><stop offset="0.786" stop-opacity="0.44" stop-color="#b42e8e"/><stop offset="0.795" stop-opacity="0.48" stop-color="#b42e8e"/><stop offset="0.804" stop-opacity="0.74" stop-color="#b42e8e"/><stop offset="0.812" stop-opacity="0.99" stop-color="#b42e8e"/><stop offset="0.821" stop-opacity="0.82" stop-color="#b42e8e"/><stop offset="0.830" stop-opacity="1.00" stop-color="#b42e8e"/><stop offset="0.839" stop-opacity="0.50" stop-color="#b42e8e"/><stop offset="0.848" stop-opacity="0.58" stop-color="#b42e8e"/><stop offset="0.857" stop-opacity="0.90" stop-color="#b42e8e"/><stop offset="0.866" stop-opacity="0.82" stop-color="#b42e8e"/><stop offset="0.875" stop-opacity="0.64" stop-color="#b42e8e"/><stop offset="0.884" stop-opacity="0.85" stop-color="#b42e8e"/><stop offset="0.893" stop-opacity="0.59" stop-color="#b42e8e"/><stop offset="0.902" stop-opacity="0.38" stop-color="#b42e8e"/><stop offset="0.911" stop-opacity="0.65" stop-color="#b42e8e"/><stop offset="0.920" stop-opacity="0.37" stop-color="#b42e8e"/><stop offset="0.929" stop-opacity="0.81" stop-color="#b42e8e"/><stop offset="0.938" stop-opacity="0.59" stop-color="#b42e8e"/><stop offset="0.946" stop-opacity="0.71" stop-color="#b42e8e"/><stop offset="0.955" stop-opacity="0.79" stop-color="#b42e8e"/><stop offset="0.964" stop-opacity="0.53" stop-color="#b42e8e"/><stop offset="0.973" stop-opacity="0.69" stop-color="#b42e8e"/><stop offset="0.982" stop-opacity="0.35" stop-color="#b42e8e"/><stop offset="0.991" stop-opacity="1.00" stop-color="#b42e8e"/><stop offset="1.000" stop-opacity="0.40" stop-color="#b42e8e"/></linearGradient></defs><defs><linearGradient id="g23" x1="0" y1="0" x2="0" y2="1"><stop offset="0.000" stop-opacity="0.82" stop-color="#b42e8e"/><stop offset="0.009" stop-opacity="0.29" stop-color="#b42e8e"/><stop offset="0.018" stop-opacity="0.61" stop-color="#b42e8e"/><stop offset="0.027" stop-opacity="0.67" stop-color="#b42e8e"/><stop offset="0.036" stop-opacity="0.44" stop-color="#b42e8e"/><stop offset="0.045" stop-opacity="0.31" stop-color="#b42e8e"/><stop offset="0.054" stop-opacity="0.35" stop-color="#b42e8e"/><stop offset="0.062" stop-opacity="0.34" stop-color="#b42e8e"/><stop offset="0.071" stop-opacity="0.69" stop-color="#b42e8e"/><stop offset="0.080" stop-opacity="0.31" stop-color="#b42e8e"/><stop offset="0.089" stop-opacity="0.72" stop-color="#b42e8e"/><stop offset="0.098" stop-opacity="0.50" stop-color="#b42e8e"/><stop offset="0.107" stop-opacity="0.56" stop-color="#b42e8e"/><stop offset="0.116" stop-opacity="0.59" stop-color="#b42e8e"/><stop offset="0.125" stop-opacity="0.57" stop-color="#b42e8e"/><stop offset="0.134" stop-opacity="0.63" stop-color="#b42e8e"/><stop offset="0.143" stop-opacity="0.60" stop-color="#b42e8e"/><stop offset="0.152" stop-opacity="0.45" stop-color="#b42e8e"/><stop offset="0.161" stop-opacity="0.68" stop-color="#b42e8e"/><stop offset="0.170" stop-opacity="0.40" stop-color="#b42e8e"/><stop offset="0.179" stop-opacity="0.66" stop-color="#b42e8e"/><stop offset="0.188" stop-opacity="0.69" stop-color="#b42e8e"/><stop offset="0.196" stop-opacity="0.70" stop-color="#b42e8e"/><stop offset="0.205" stop-opacity="0.43" stop-color="#b42e8e"/><stop offset="0.214" stop-opacity="0.70" stop-color="#b42e8e"/><stop offset="0.223" stop-opacity="0.81" stop-color="#b42e8e"/><stop offset="0.232" stop-opacity="0.51" stop-color="#b42e8e"/><stop offset="0.241" stop-opacity="0.42" stop-color="#b42e8e"/><stop offset="0.250" stop-opacity="0.55" stop-color="#b42e8e"/><stop offset="0.259" stop-opacity="0.54" stop-color="#b42e8e"/><stop offset="0.268" stop-opacity="0.23" stop-color="#b42e8e"/><stop offset="0.277" stop-opacity="0.18" stop-color="#b42e8e"/><stop offset="0.286" stop-opacity="0.36" stop-color="#b42e8e"/><stop offset="0.295" stop-opacity="0.43" stop-color="#b42e8e"/><stop offset="0.304" stop-opacity="0.48" stop-color="#b42e8e"/><stop offset="0.312" stop-opacity="0.32" stop-color="#b42e8e"/><stop offset="0.321" stop-opacity="0.56" stop-color="#b42e8e"/><stop offset="0.330" stop-opacity="0.26" stop-color="#b42e8e"/><stop offset="0.339" stop-opacity="0.47" stop-color="#b42e8e"/><stop offset="0.348" stop-opacity="0.21" stop-color="#b42e8e"/><stop offset="0.357" stop-opacity="0.19" stop-color="#b42e8e"/><stop offset="0.366" stop-opacity="0.23" stop-color="#b42e8e"/><stop offset="0.375" stop-opacity="0.20" stop-color="#b42e8e"/><stop offset="0.384" stop-opacity="0.37" stop-color="#b42e8e"/><stop offset="0.393" stop-opacity="0.39" stop-color="#b42e8e"/><stop offset="0.402" stop-opacity="0.25" stop-color="#b42e8e"/><stop offset="0.411" stop-opacity="0.54" stop-color="#b42e8e"/><stop offset="0.420" stop-opacity="0.32" stop-color="#b42e8e"/><stop offset="0.429" stop-opacity="0.23" stop-color="#b42e8e"/><stop offset="0.438" stop-opacity="0.24" stop-color="#b42e8e"/><stop offset="0.446" stop-opacity="0.46" stop-color="#b42e8e"/><stop offset="0.455" stop-opacity="0.53" stop-color="#b42e8e"/><stop offset="0.464" stop-opacity="0.24" stop-color="#b42e8e"/><stop offset="0.473" stop-opacity="0.19" stop-color="#b42e8e"/><stop offset="0.482" stop-opacity="0.48" stop-color="#b42e8e"/><stop offset="0.491" stop-opacity="0.27" stop-color="#b42e8e"/><stop offset="0.500" stop-opacity="0.56" stop-color="#b42e8e"/><stop offset="0.509" stop-opacity="0.37" stop-color="#b42e8e"/><stop offset="0.518" stop-opacity="0.42" stop-color="#b42e8e"/><stop offset="0.527" stop-opacity="0.31" stop-color="#b42e8e"/><stop offset="0.536" stop-opacity="0.49" stop-color="#b42e8e"/><stop offset="0.545" stop-opacity="0.35" stop-color="#b42e8e"/><stop offset="0.554" stop-opacity="0.30" stop-color="#b42e8e"/><stop offset="0.562" stop-opacity="0.53" stop-color="#b42e8e"/><stop offset="0.571" stop-opacity="0.22" stop-color="#b42e8e"/><stop offset="0.580" stop-opacity="0.46" stop-color="#b42e8e"/><stop offset="0.589" stop-opacity="0.29" stop-color="#b42e8e"/><stop offset="0.598" stop-opacity="0.62" stop-color="#b42e8e"/><stop offset="0.607" stop-opacity="0.49" stop-color="#b42e8e"/><stop offset="0.616" stop-opacity="0.75" stop-color="#b42e8e"/><stop offset="0.625" stop-opacity="0.29" stop-color="#b42e8e"/><stop offset="0.634" stop-opacity="0.58" stop-color="#b42e8e"/><stop offset="0.643" stop-opacity="0.49" stop-color="#b42e8e"/><stop offset="0.652" stop-opacity="0.78" stop-color="#b42e8e"/><stop offset="0.661" stop-opacity="0.54" stop-color="#b42e8e"/><stop offset="0.670" stop-opacity="0.42" stop-color="#b42e8e"/><stop offset="0.679" stop-opacity="0.26" stop-color="#b42e8e"/><stop offset="0.688" stop-opacity="0.27" stop-color="#b42e8e"/><stop offset="0.696" stop-opacity="0.28" stop-color="#b42e8e"/><stop offset="0.705" stop-opacity="0.34" stop-color="#b42e8e"/><stop offset="0.714" stop-opacity="0.27" stop-color="#b42e8e"/><stop offset="0.723" stop-opacity="0.25" stop-color="#b42e8e"/><stop offset="0.732" stop-opacity="0.47" stop-color="#b42e8e"/><stop offset="0.741" stop-opacity="0.43" stop-color="#b42e8e"/><stop offset="0.750" stop-opacity="0.43" stop-color="#b42e8e"/><stop offset="0.759" stop-opacity="0.82" stop-color="#b42e8e"/><stop offset="0.768" stop-opacity="0.38" stop-color="#b42e8e"/><stop offset="0.777" stop-opacity="0.58" stop-color="#b42e8e"/><stop offset="0.786" stop-opacity="0.35" stop-color="#b42e8e"/><stop offset="0.795" stop-opacity="0.75" stop-color="#b42e8e"/><stop offset="0.804" stop-opacity="0.75" stop-color="#b42e8e"/><stop offset="0.812" stop-opacity="0.41" stop-color="#b42e8e"/><stop offset="0.821" stop-opacity="0.68" stop-color="#b42e8e"/><stop offset="0.830" stop-opacity="0.73" stop-color="#b42e8e"/><stop offset="0.839" stop-opacity="0.42" stop-color="#b42e8e"/><stop offset="0.848" stop-opacity="0.45" stop-color="#b42e8e"/><stop offset="0.857" stop-opacity="0.36" stop-color="#b42e8e"/><stop offset="0.866" stop-opacity="0.52" stop-color="#b42e8e"/><stop offset="0.875" stop-opacity="0.24" stop-color="#b42e8e"/><stop offset="0.884" stop-opacity="0.44" stop-color="#b42e8e"/><stop offset="0.893" stop-opacity="0.41" stop-color="#b42e8e"/><stop offset="0.902" stop-opacity="0.35" stop-color="#b42e8e"/><stop offset="0.911" stop-opacity="0.40" stop-color="#b42e8e"/><stop offset="0.920" stop-opacity="0.52" stop-color="#b42e8e"/><stop offset="0.929" stop-opacity="0.26" stop-color="#b42e8e"/><stop offset="0.938" stop-opacity="0.52" stop-color="#b42e8e"/><stop offset="0.946" stop-opacity="0.32" stop-color="#b42e8e"/><stop offset="0.955" stop-opacity="0.48" stop-color="#b42e8e"/><stop offset="0.964" stop-opacity="0.51" stop-color="#b42e8e"/><stop offset="0.973" stop-opacity="0.25" stop-color="#b42e8e"/><stop offset="0.982" stop-opacity="0.51" stop-color="#b42e8e"/><stop offset="0.991" stop-opacity="0.56" stop-color="#b42e8e"/><stop offset="1.000" stop-opacity="0.29" stop-color="#b42e8e"/></linearGradient></defs><defs><linearGradient id="g24" x1="0" y1="0" x2="0" y2="1"><stop offset="0.000" stop-opacity="0.77" stop-color="#e07858"/><stop offset="0.006" stop-opacity="0.75" stop-color="#c0407e"/><stop offset="0.013" stop-opacity="0.78" stop-color="#c0407e"/><stop offset="0.019" stop-opacity="0.77" stop-color="#c0407e"/><stop offset="0.025" stop-opacity="0.89" stop-color="#d06070"/><stop offset="0.031" stop-opacity="0.82" stop-color="#e07858"/><stop offset="0.037" stop-opacity="0.89" stop-color="#c0407e"/><stop offset="0.044" stop-opacity="0.95" stop-color="#c0407e"/><stop offset="0.050" stop-opacity="0.80" stop-color="#e07858"/><stop offset="0.056" stop-opacity="0.89" stop-color="#c0407e"/><stop offset="0.062" stop-opacity="0.85" stop-color="#e07858"/><stop offset="0.069" stop-opacity="0.84" stop-color="#d06070"/><stop offset="0.075" stop-opacity="0.75" stop-color="#d06070"/><stop offset="0.081" stop-opacity="0.81" stop-color="#c0407e"/><stop offset="0.087" stop-opacity="0.77" stop-color="#c0407e"/><stop offset="0.094" stop-opacity="0.78" stop-color="#c0407e"/><stop offset="0.100" stop-opacity="0.79" stop-color="#c0407e"/><stop offset="0.106" stop-opacity="0.78" stop-color="#c0407e"/><stop offset="0.113" stop-opacity="0.85" stop-color="#c0407e"/><stop offset="0.119" stop-opacity="0.82" stop-color="#d06070"/><stop offset="0.125" stop-opacity="0.93" stop-color="#c0407e"/><stop offset="0.131" stop-opacity="0.79" stop-color="#d06070"/><stop offset="0.138" stop-opacity="0.93" stop-color="#c0407e"/><stop offset="0.144" stop-opacity="0.80" stop-color="#c0407e"/><stop offset="0.150" stop-opacity="0.80" stop-color="#d06070"/><stop offset="0.156" stop-opacity="0.76" stop-color="#e07858"/><stop offset="0.163" stop-opacity="0.83" stop-color="#c0407e"/><stop offset="0.169" stop-opacity="0.82" stop-color="#c0407e"/><stop offset="0.175" stop-opacity="0.89" stop-color="#e07858"/><stop offset="0.181" stop-opacity="0.86" stop-color="#c0407e"/><stop offset="0.188" stop-opacity="0.89" stop-color="#c0407e"/><stop offset="0.194" stop-opacity="0.92" stop-color="#c0407e"/><stop offset="0.200" stop-opacity="0.83" stop-color="#c0407e"/><stop offset="0.206" stop-opacity="0.83" stop-color="#d06070"/><stop offset="0.212" stop-opacity="0.83" stop-color="#c0407e"/><stop offset="0.219" stop-opacity="0.83" stop-color="#d06070"/><stop offset="0.225" stop-opacity="0.95" stop-color="#d06070"/><stop offset="0.231" stop-opacity="0.87" stop-color="#e07858"/><stop offset="0.237" stop-opacity="0.80" stop-color="#c0407e"/><stop offset="0.244" stop-opacity="0.83" stop-color="#c0407e"/><stop offset="0.250" stop-opacity="0.79" stop-color="#d06070"/><stop offset="0.256" stop-opacity="0.92" stop-color="#d06070"/><stop offset="0.263" stop-opacity="0.93" stop-color="#c0407e"/><stop offset="0.269" stop-opacity="0.89" stop-color="#e07858"/><stop offset="0.275" stop-opacity="0.88" stop-color="#d06070"/><stop offset="0.281" stop-opacity="0.81" stop-color="#c0407e"/><stop offset="0.287" stop-opacity="0.75" stop-color="#c0407e"/><stop offset="0.294" stop-opacity="0.92" stop-color="#c0407e"/><stop offset="0.300" stop-opacity="0.87" stop-color="#c0407e"/><stop offset="0.306" stop-opacity="0.80" stop-color="#c0407e"/><stop offset="0.312" stop-opacity="0.90" stop-color="#c0407e"/><stop offset="0.319" stop-opacity="0.89" stop-color="#d06070"/><stop offset="0.325" stop-opacity="0.86" stop-color="#d06070"/><stop offset="0.331" stop-opacity="0.89" stop-color="#c0407e"/><stop offset="0.338" stop-opacity="0.88" stop-color="#d06070"/><stop offset="0.344" stop-opacity="0.79" stop-color="#c0407e"/><stop offset="0.350" stop-opacity="0.80" stop-color="#c0407e"/><stop offset="0.356" stop-opacity="0.84" stop-color="#c0407e"/><stop offset="0.362" stop-opacity="0.85" stop-color="#c0407e"/><stop offset="0.369" stop-opacity="0.79" stop-color="#c0407e"/><stop offset="0.375" stop-opacity="0.94" stop-color="#d06070"/><stop offset="0.381" stop-opacity="0.85" stop-color="#c0407e"/><stop offset="0.388" stop-opacity="0.91" stop-color="#c0407e"/><stop offset="0.394" stop-opacity="0.78" stop-color="#d06070"/><stop offset="0.400" stop-opacity="0.84" stop-color="#c0407e"/><stop offset="0.406" stop-opacity="0.92" stop-color="#c0407e"/><stop offset="0.412" stop-opacity="0.92" stop-color="#c0407e"/><stop offset="0.419" stop-opacity="0.83" stop-color="#e07858"/><stop offset="0.425" stop-opacity="0.91" stop-color="#c0407e"/><stop offset="0.431" stop-opacity="0.78" stop-color="#d06070"/><stop offset="0.438" stop-opacity="0.77" stop-color="#d06070"/><stop offset="0.444" stop-opacity="0.91" stop-color="#d06070"/><stop offset="0.450" stop-opacity="0.84" stop-color="#c0407e"/><stop offset="0.456" stop-opacity="0.83" stop-color="#e07858"/><stop offset="0.463" stop-opacity="0.89" stop-color="#c0407e"/><stop offset="0.469" stop-opacity="0.85" stop-color="#c0407e"/><stop offset="0.475" stop-opacity="0.90" stop-color="#c0407e"/><stop offset="0.481" stop-opacity="0.89" stop-color="#d06070"/><stop offset="0.487" stop-opacity="0.85" stop-color="#d06070"/><stop offset="0.494" stop-opacity="0.82" stop-color="#d06070"/><stop offset="0.500" stop-opacity="0.83" stop-color="#d06070"/><stop offset="0.506" stop-opacity="0.79" stop-color="#e07858"/><stop offset="0.512" stop-opacity="0.76" stop-color="#c0407e"/><stop offset="0.519" stop-opacity="0.89" stop-color="#d06070"/><stop offset="0.525" stop-opacity="0.81" stop-color="#d06070"/><stop offset="0.531" stop-opacity="0.92" stop-color="#d06070"/><stop offset="0.537" stop-opacity="0.88" stop-color="#e07858"/><stop offset="0.544" stop-opacity="0.79" stop-color="#c0407e"/><stop offset="0.550" stop-opacity="0.91" stop-color="#c0407e"/><stop offset="0.556" stop-opacity="0.82" stop-color="#c0407e"/><stop offset="0.562" stop-opacity="0.84" stop-color="#e07858"/><stop offset="0.569" stop-opacity="0.89" stop-color="#d06070"/><stop offset="0.575" stop-opacity="0.83" stop-color="#d06070"/><stop offset="0.581" stop-opacity="0.91" stop-color="#c0407e"/><stop offset="0.588" stop-opacity="0.83" stop-color="#d06070"/><stop offset="0.594" stop-opacity="0.93" stop-color="#c0407e"/><stop offset="0.600" stop-opacity="0.94" stop-color="#d06070"/><stop offset="0.606" stop-opacity="0.82" stop-color="#c0407e"/><stop offset="0.613" stop-opacity="0.82" stop-color="#c0407e"/><stop offset="0.619" stop-opacity="0.90" stop-color="#e07858"/><stop offset="0.625" stop-opacity="0.86" stop-color="#d06070"/><stop offset="0.631" stop-opacity="0.93" stop-color="#c0407e"/><stop offset="0.637" stop-opacity="0.76" stop-color="#c0407e"/><stop offset="0.644" stop-opacity="0.84" stop-color="#c0407e"/><stop offset="0.650" stop-opacity="0.92" stop-color="#c0407e"/><stop offset="0.656" stop-opacity="0.84" stop-color="#c0407e"/><stop offset="0.662" stop-opacity="0.84" stop-color="#c0407e"/><stop offset="0.669" stop-opacity="0.85" stop-color="#c0407e"/><stop offset="0.675" stop-opacity="0.88" stop-color="#c0407e"/><stop offset="0.681" stop-opacity="0.83" stop-color="#c0407e"/><stop offset="0.688" stop-opacity="0.89" stop-color="#e07858"/><stop offset="0.694" stop-opacity="0.90" stop-color="#c0407e"/><stop offset="0.700" stop-opacity="0.77" stop-color="#c0407e"/><stop offset="0.706" stop-opacity="0.77" stop-color="#d06070"/><stop offset="0.713" stop-opacity="0.77" stop-color="#c0407e"/><stop offset="0.719" stop-opacity="0.90" stop-color="#e07858"/><stop offset="0.725" stop-opacity="0.76" stop-color="#c0407e"/><stop offset="0.731" stop-opacity="0.89" stop-color="#c0407e"/><stop offset="0.738" stop-opacity="0.76" stop-color="#c0407e"/><stop offset="0.744" stop-opacity="0.83" stop-color="#c0407e"/><stop offset="0.750" stop-opacity="0.95" stop-color="#c0407e"/><stop offset="0.756" stop-opacity="0.92" stop-color="#c0407e"/><stop offset="0.762" stop-opacity="0.82" stop-color="#d06070"/><stop offset="0.769" stop-opacity="0.75" stop-color="#c0407e"/><stop offset="0.775" stop-opacity="0.80" stop-color="#c0407e"/><stop offset="0.781" stop-opacity="0.81" stop-color="#d06070"/><stop offset="0.787" stop-opacity="0.92" stop-color="#d06070"/><stop offset="0.794" stop-opacity="0.85" stop-color="#c0407e"/><stop offset="0.800" stop-opacity="0.76" stop-color="#c0407e"/><stop offset="0.806" stop-opacity="0.92" stop-color="#d06070"/><stop offset="0.812" stop-opacity="0.92" stop-color="#c0407e"/><stop offset="0.819" stop-opacity="0.79" stop-color="#d06070"/><stop offset="0.825" stop-opacity="0.86" stop-color="#e07858"/><stop offset="0.831" stop-opacity="0.84" stop-color="#d06070"/><stop offset="0.838" stop-opacity="0.87" stop-color="#c0407e"/><stop offset="0.844" stop-opacity="0.91" stop-color="#d06070"/><stop offset="0.850" stop-opacity="0.93" stop-color="#d06070"/><stop offset="0.856" stop-opacity="0.76" stop-color="#c0407e"/><stop offset="0.863" stop-opacity="0.86" stop-color="#d06070"/><stop offset="0.869" stop-opacity="0.86" stop-color="#c0407e"/><stop offset="0.875" stop-opacity="0.80" stop-color="#d06070"/><stop offset="0.881" stop-opacity="0.81" stop-color="#c0407e"/><stop offset="0.887" stop-opacity="0.91" stop-color="#c0407e"/><stop offset="0.894" stop-opacity="0.84" stop-color="#c0407e"/><stop offset="0.900" stop-opacity="0.84" stop-color="#c0407e"/><stop offset="0.906" stop-opacity="0.76" stop-color="#c0407e"/><stop offset="0.912" stop-opacity="0.88" stop-color="#c0407e"/><stop offset="0.919" stop-opacity="0.92" stop-color="#e07858"/><stop offset="0.925" stop-opacity="0.87" stop-color="#e07858"/><stop offset="0.931" stop-opacity="0.93" stop-color="#d06070"/><stop offset="0.938" stop-opacity="0.91" stop-color="#c0407e"/><stop offset="0.944" stop-opacity="0.88" stop-color="#c0407e"/><stop offset="0.950" stop-opacity="0.81" stop-color="#c0407e"/><stop offset="0.956" stop-opacity="0.92" stop-color="#d06070"/><stop offset="0.963" stop-opacity="0.93" stop-color="#d06070"/><stop offset="0.969" stop-opacity="0.77" stop-color="#d06070"/><stop offset="0.975" stop-opacity="0.91" stop-color="#e07858"/><stop offset="0.981" stop-opacity="0.83" stop-color="#c0407e"/><stop offset="0.988" stop-opacity="0.80" stop-color="#c0407e"/><stop offset="0.994" stop-opacity="0.89" stop-color="#c0407e"/><stop offset="1.000" stop-opacity="0.76" stop-color="#d06070"/></linearGradient></defs><defs><linearGradient id="g25" x1="0" y1="0" x2="0" y2="1"><stop offset="0.000" stop-opacity="0.45" stop-color="#b42e8e"/><stop offset="0.009" stop-opacity="0.19" stop-color="#b42e8e"/><stop offset="0.018" stop-opacity="0.50" stop-color="#b42e8e"/><stop offset="0.027" stop-opacity="0.56" stop-color="#b42e8e"/><stop offset="0.036" stop-opacity="0.51" stop-color="#b42e8e"/><stop offset="0.045" stop-opacity="0.77" stop-color="#b42e8e"/><stop offset="0.054" stop-opacity="0.58" stop-color="#b42e8e"/><stop offset="0.062" stop-opacity="0.76" stop-color="#b42e8e"/><stop offset="0.071" stop-opacity="0.45" stop-color="#b42e8e"/><stop offset="0.080" stop-opacity="1.00" stop-color="#b42e8e"/><stop offset="0.089" stop-opacity="0.30" stop-color="#b42e8e"/><stop offset="0.098" stop-opacity="0.50" stop-color="#b42e8e"/><stop offset="0.107" stop-opacity="0.23" stop-color="#b42e8e"/><stop offset="0.116" stop-opacity="0.49" stop-color="#b42e8e"/><stop offset="0.125" stop-opacity="0.56" stop-color="#b42e8e"/><stop offset="0.134" stop-opacity="0.33" stop-color="#b42e8e"/><stop offset="0.143" stop-opacity="0.19" stop-color="#b42e8e"/><stop offset="0.152" stop-opacity="0.32" stop-color="#b42e8e"/><stop offset="0.161" stop-opacity="0.43" stop-color="#b42e8e"/><stop offset="0.170" stop-opacity="0.26" stop-color="#b42e8e"/><stop offset="0.179" stop-opacity="0.39" stop-color="#b42e8e"/><stop offset="0.188" stop-opacity="0.21" stop-color="#b42e8e"/><stop offset="0.196" stop-opacity="0.36" stop-color="#b42e8e"/><stop offset="0.205" stop-opacity="0.46" stop-color="#b42e8e"/><stop offset="0.214" stop-opacity="0.34" stop-color="#b42e8e"/><stop offset="0.223" stop-opacity="0.44" stop-color="#b42e8e"/><stop offset="0.232" stop-opacity="0.22" stop-color="#b42e8e"/><stop offset="0.241" stop-opacity="0.50" stop-color="#b42e8e"/><stop offset="0.250" stop-opacity="0.22" stop-color="#b42e8e"/><stop offset="0.259" stop-opacity="0.78" stop-color="#b42e8e"/><stop offset="0.268" stop-opacity="0.82" stop-color="#b42e8e"/><stop offset="0.277" stop-opacity="0.79" stop-color="#b42e8e"/><stop offset="0.286" stop-opacity="0.56" stop-color="#b42e8e"/><stop offset="0.295" stop-opacity="0.42" stop-color="#b42e8e"/><stop offset="0.304" stop-opacity="0.45" stop-color="#b42e8e"/><stop offset="0.312" stop-opacity="0.68" stop-color="#b42e8e"/><stop offset="0.321" stop-opacity="0.37" stop-color="#b42e8e"/><stop offset="0.330" stop-opacity="0.54" stop-color="#b42e8e"/><stop offset="0.339" stop-opacity="0.21" stop-color="#b42e8e"/><stop offset="0.348" stop-opacity="0.36" stop-color="#b42e8e"/><stop offset="0.357" stop-opacity="0.51" stop-color="#b42e8e"/><stop offset="0.366" stop-opacity="0.41" stop-color="#b42e8e"/><stop offset="0.375" stop-opacity="0.39" stop-color="#b42e8e"/><stop offset="0.384" stop-opacity="0.21" stop-color="#b42e8e"/><stop offset="0.393" stop-opacity="0.23" stop-color="#b42e8e"/><stop offset="0.402" stop-opacity="0.28" stop-color="#b42e8e"/><stop offset="0.411" stop-opacity="1.00" stop-color="#b42e8e"/><stop offset="0.420" stop-opacity="0.97" stop-color="#b42e8e"/><stop offset="0.429" stop-opacity="0.51" stop-color="#b42e8e"/><stop offset="0.438" stop-opacity="1.00" stop-color="#b42e8e"/><stop offset="0.446" stop-opacity="0.36" stop-color="#b42e8e"/><stop offset="0.455" stop-opacity="0.79" stop-color="#b42e8e"/><stop offset="0.464" stop-opacity="1.00" stop-color="#b42e8e"/><stop offset="0.473" stop-opacity="0.60" stop-color="#b42e8e"/><stop offset="0.482" stop-opacity="1.00" stop-color="#b42e8e"/><stop offset="0.491" stop-opacity="0.83" stop-color="#b42e8e"/><stop offset="0.500" stop-opacity="0.38" stop-color="#b42e8e"/><stop offset="0.509" stop-opacity="0.59" stop-color="#b42e8e"/><stop offset="0.518" stop-opacity="0.67" stop-color="#b42e8e"/><stop offset="0.527" stop-opacity="0.52" stop-color="#b42e8e"/><stop offset="0.536" stop-opacity="0.89" stop-color="#b42e8e"/><stop offset="0.545" stop-opacity="0.47" stop-color="#b42e8e"/><stop offset="0.554" stop-opacity="0.93" stop-color="#b42e8e"/><stop offset="0.562" stop-opacity="0.56" stop-color="#b42e8e"/><stop offset="0.571" stop-opacity="0.39" stop-color="#b42e8e"/><stop offset="0.580" stop-opacity="0.76" stop-color="#b42e8e"/><stop offset="0.589" stop-opacity="0.41" stop-color="#b42e8e"/><stop offset="0.598" stop-opacity="0.75" stop-color="#b42e8e"/><stop offset="0.607" stop-opacity="0.93" stop-color="#b42e8e"/><stop offset="0.616" stop-opacity="0.41" stop-color="#b42e8e"/><stop offset="0.625" stop-opacity="0.36" stop-color="#b42e8e"/><stop offset="0.634" stop-opacity="0.19" stop-color="#b42e8e"/><stop offset="0.643" stop-opacity="0.38" stop-color="#b42e8e"/><stop offset="0.652" stop-opacity="0.21" stop-color="#b42e8e"/><stop offset="0.661" stop-opacity="0.43" stop-color="#b42e8e"/><stop offset="0.670" stop-opacity="0.23" stop-color="#b42e8e"/><stop offset="0.679" stop-opacity="0.40" stop-color="#b42e8e"/><stop offset="0.688" stop-opacity="0.31" stop-color="#b42e8e"/><stop offset="0.696" stop-opacity="0.32" stop-color="#b42e8e"/><stop offset="0.705" stop-opacity="0.43" stop-color="#b42e8e"/><stop offset="0.714" stop-opacity="0.24" stop-color="#b42e8e"/><stop offset="0.723" stop-opacity="0.24" stop-color="#b42e8e"/><stop offset="0.732" stop-opacity="0.54" stop-color="#b42e8e"/><stop offset="0.741" stop-opacity="0.30" stop-color="#b42e8e"/><stop offset="0.750" stop-opacity="0.50" stop-color="#b42e8e"/><stop offset="0.759" stop-opacity="0.52" stop-color="#b42e8e"/><stop offset="0.768" stop-opacity="0.36" stop-color="#b42e8e"/><stop offset="0.777" stop-opacity="0.23" stop-color="#b42e8e"/><stop offset="0.786" stop-opacity="0.21" stop-color="#b42e8e"/><stop offset="0.795" stop-opacity="0.52" stop-color="#b42e8e"/><stop offset="0.804" stop-opacity="0.22" stop-color="#b42e8e"/><stop offset="0.812" stop-opacity="0.37" stop-color="#b42e8e"/><stop offset="0.821" stop-opacity="0.38" stop-color="#b42e8e"/><stop offset="0.830" stop-opacity="0.22" stop-color="#b42e8e"/><stop offset="0.839" stop-opacity="0.36" stop-color="#b42e8e"/><stop offset="0.848" stop-opacity="0.24" stop-color="#b42e8e"/><stop offset="0.857" stop-opacity="0.38" stop-color="#b42e8e"/><stop offset="0.866" stop-opacity="0.37" stop-color="#b42e8e"/><stop offset="0.875" stop-opacity="0.32" stop-color="#b42e8e"/><stop offset="0.884" stop-opacity="0.49" stop-color="#b42e8e"/><stop offset="0.893" stop-opacity="0.64" stop-color="#b42e8e"/><stop offset="0.902" stop-opacity="0.49" stop-color="#b42e8e"/><stop offset="0.911" stop-opacity="0.43" stop-color="#b42e8e"/><stop offset="0.920" stop-opacity="0.52" stop-color="#b42e8e"/><stop offset="0.929" stop-opacity="0.52" stop-color="#b42e8e"/><stop offset="0.938" stop-opacity="0.37" stop-color="#b42e8e"/><stop offset="0.946" stop-opacity="0.52" stop-color="#b42e8e"/><stop offset="0.955" stop-opacity="0.18" stop-color="#b42e8e"/><stop offset="0.964" stop-opacity="0.54" stop-color="#b42e8e"/><stop offset="0.973" stop-opacity="0.37" stop-color="#b42e8e"/><stop offset="0.982" stop-opacity="0.48" stop-color="#b42e8e"/><stop offset="0.991" stop-opacity="0.40" stop-color="#b42e8e"/><stop offset="1.000" stop-opacity="0.44" stop-color="#b42e8e"/></linearGradient></defs><defs><linearGradient id="g26" x1="0" y1="0" x2="0" y2="1"><stop offset="0.000" stop-opacity="0.51" stop-color="#b42e8e"/><stop offset="0.009" stop-opacity="0.90" stop-color="#b42e8e"/><stop offset="0.018" stop-opacity="0.45" stop-color="#b42e8e"/><stop offset="0.027" stop-opacity="0.54" stop-color="#b42e8e"/><stop offset="0.036" stop-opacity="0.36" stop-color="#b42e8e"/><stop offset="0.045" stop-opacity="0.63" stop-color="#b42e8e"/><stop offset="0.054" stop-opacity="0.73" stop-color="#b42e8e"/><stop offset="0.062" stop-opacity="0.56" stop-color="#b42e8e"/><stop offset="0.071" stop-opacity="1.00" stop-color="#b42e8e"/><stop offset="0.080" stop-opacity="0.40" stop-color="#b42e8e"/><stop offset="0.089" stop-opacity="0.77" stop-color="#b42e8e"/><stop offset="0.098" stop-opacity="0.51" stop-color="#b42e8e"/><stop offset="0.107" stop-opacity="0.78" stop-color="#b42e8e"/><stop offset="0.116" stop-opacity="0.93" stop-color="#b42e8e"/><stop offset="0.125" stop-opacity="0.87" stop-color="#b42e8e"/><stop offset="0.134" stop-opacity="0.38" stop-color="#b42e8e"/><stop offset="0.143" stop-opacity="0.52" stop-color="#b42e8e"/><stop offset="0.152" stop-opacity="0.79" stop-color="#b42e8e"/><stop offset="0.161" stop-opacity="1.00" stop-color="#b42e8e"/><stop offset="0.170" stop-opacity="0.37" stop-color="#b42e8e"/><stop offset="0.179" stop-opacity="0.80" stop-color="#b42e8e"/><stop offset="0.188" stop-opacity="0.86" stop-color="#b42e8e"/><stop offset="0.196" stop-opacity="0.95" stop-color="#b42e8e"/><stop offset="0.205" stop-opacity="0.59" stop-color="#b42e8e"/><stop offset="0.214" stop-opacity="0.95" stop-color="#b42e8e"/><stop offset="0.223" stop-opacity="0.68" stop-color="#b42e8e"/><stop offset="0.232" stop-opacity="1.00" stop-color="#b42e8e"/><stop offset="0.241" stop-opacity="0.35" stop-color="#b42e8e"/><stop offset="0.250" stop-opacity="1.00" stop-color="#b42e8e"/><stop offset="0.259" stop-opacity="0.49" stop-color="#b42e8e"/><stop offset="0.268" stop-opacity="0.49" stop-color="#b42e8e"/><stop offset="0.277" stop-opacity="0.31" stop-color="#b42e8e"/><stop offset="0.286" stop-opacity="0.40" stop-color="#b42e8e"/><stop offset="0.295" stop-opacity="0.67" stop-color="#b42e8e"/><stop offset="0.304" stop-opacity="0.64" stop-color="#b42e8e"/><stop offset="0.312" stop-opacity="0.34" stop-color="#b42e8e"/><stop offset="0.321" stop-opacity="0.45" stop-color="#b42e8e"/><stop offset="0.330" stop-opacity="0.34" stop-color="#b42e8e"/><stop offset="0.339" stop-opacity="0.37" stop-color="#b42e8e"/><stop offset="0.348" stop-opacity="0.38" stop-color="#b42e8e"/><stop offset="0.357" stop-opacity="0.45" stop-color="#b42e8e"/><stop offset="0.366" stop-opacity="0.81" stop-color="#b42e8e"/><stop offset="0.375" stop-opacity="0.82" stop-color="#b42e8e"/><stop offset="0.384" stop-opacity="0.71" stop-color="#b42e8e"/><stop offset="0.393" stop-opacity="0.53" stop-color="#b42e8e"/><stop offset="0.402" stop-opacity="0.54" stop-color="#b42e8e"/><stop offset="0.411" stop-opacity="0.70" stop-color="#b42e8e"/><stop offset="0.420" stop-opacity="0.77" stop-color="#b42e8e"/><stop offset="0.429" stop-opacity="0.68" stop-color="#b42e8e"/><stop offset="0.438" stop-opacity="0.62" stop-color="#b42e8e"/><stop offset="0.446" stop-opacity="0.37" stop-color="#b42e8e"/><stop offset="0.455" stop-opacity="0.61" stop-color="#b42e8e"/><stop offset="0.464" stop-opacity="0.74" stop-color="#b42e8e"/><stop offset="0.473" stop-opacity="0.70" stop-color="#b42e8e"/><stop offset="0.482" stop-opacity="0.31" stop-color="#b42e8e"/><stop offset="0.491" stop-opacity="0.67" stop-color="#b42e8e"/><stop offset="0.500" stop-opacity="0.46" stop-color="#b42e8e"/><stop offset="0.509" stop-opacity="0.46" stop-color="#b42e8e"/><stop offset="0.518" stop-opacity="1.00" stop-color="#b42e8e"/><stop offset="0.527" stop-opacity="0.84" stop-color="#b42e8e"/><stop offset="0.536" stop-opacity="0.90" stop-color="#b42e8e"/><stop offset="0.545" stop-opacity="0.44" stop-color="#b42e8e"/><stop offset="0.554" stop-opacity="0.96" stop-color="#b42e8e"/><stop offset="0.562" stop-opacity="1.00" stop-color="#b42e8e"/><stop offset="0.571" stop-opacity="1.00" stop-color="#b42e8e"/><stop offset="0.580" stop-opacity="0.90" stop-color="#b42e8e"/><stop offset="0.589" stop-opacity="0.96" stop-color="#b42e8e"/><stop offset="0.598" stop-opacity="0.94" stop-color="#b42e8e"/><stop offset="0.607" stop-opacity="0.78" stop-color="#b42e8e"/><stop offset="0.616" stop-opacity="0.66" stop-color="#b42e8e"/><stop offset="0.625" stop-opacity="0.96" stop-color="#b42e8e"/><stop offset="0.634" stop-opacity="0.93" stop-color="#b42e8e"/><stop offset="0.643" stop-opacity="0.99" stop-color="#b42e8e"/><stop offset="0.652" stop-opacity="0.56" stop-color="#b42e8e"/><stop offset="0.661" stop-opacity="1.00" stop-color="#b42e8e"/><stop offset="0.670" stop-opacity="0.74" stop-color="#b42e8e"/><stop offset="0.679" stop-opacity="1.00" stop-color="#b42e8e"/><stop offset="0.688" stop-opacity="0.42" stop-color="#b42e8e"/><stop offset="0.696" stop-opacity="1.00" stop-color="#b42e8e"/><stop offset="0.705" stop-opacity="0.93" stop-color="#b42e8e"/><stop offset="0.714" stop-opacity="0.53" stop-color="#b42e8e"/><stop offset="0.723" stop-opacity="0.97" stop-color="#b42e8e"/><stop offset="0.732" stop-opacity="0.51" stop-color="#b42e8e"/><stop offset="0.741" stop-opacity="0.49" stop-color="#b42e8e"/><stop offset="0.750" stop-opacity="0.68" stop-color="#b42e8e"/><stop offset="0.759" stop-opacity="0.39" stop-color="#b42e8e"/><stop offset="0.768" stop-opacity="0.54" stop-color="#b42e8e"/><stop offset="0.777" stop-opacity="0.77" stop-color="#b42e8e"/><stop offset="0.786" stop-opacity="0.65" stop-color="#b42e8e"/><stop offset="0.795" stop-opacity="0.66" stop-color="#b42e8e"/><stop offset="0.804" stop-opacity="0.48" stop-color="#b42e8e"/><stop offset="0.812" stop-opacity="0.70" stop-color="#b42e8e"/><stop offset="0.821" stop-opacity="0.71" stop-color="#b42e8e"/><stop offset="0.830" stop-opacity="0.65" stop-color="#b42e8e"/><stop offset="0.839" stop-opacity="0.79" stop-color="#b42e8e"/><stop offset="0.848" stop-opacity="0.73" stop-color="#b42e8e"/><stop offset="0.857" stop-opacity="0.33" stop-color="#b42e8e"/><stop offset="0.866" stop-opacity="0.21" stop-color="#b42e8e"/><stop offset="0.875" stop-opacity="0.43" stop-color="#b42e8e"/><stop offset="0.884" stop-opacity="0.50" stop-color="#b42e8e"/><stop offset="0.893" stop-opacity="0.31" stop-color="#b42e8e"/><stop offset="0.902" stop-opacity="0.41" stop-color="#b42e8e"/><stop offset="0.911" stop-opacity="0.50" stop-color="#b42e8e"/><stop offset="0.920" stop-opacity="0.48" stop-color="#b42e8e"/><stop offset="0.929" stop-opacity="0.18" stop-color="#b42e8e"/><stop offset="0.938" stop-opacity="0.37" stop-color="#b42e8e"/><stop offset="0.946" stop-opacity="0.18" stop-color="#b42e8e"/><stop offset="0.955" stop-opacity="0.22" stop-color="#b42e8e"/><stop offset="0.964" stop-opacity="0.49" stop-color="#b42e8e"/><stop offset="0.973" stop-opacity="0.34" stop-color="#b42e8e"/><stop offset="0.982" stop-opacity="0.41" stop-color="#b42e8e"/><stop offset="0.991" stop-opacity="0.35" stop-color="#b42e8e"/><stop offset="1.000" stop-opacity="0.31" stop-color="#b42e8e"/></linearGradient></defs><defs><linearGradient id="g27" x1="0" y1="0" x2="0" y2="1"><stop offset="0.000" stop-opacity="0.21" stop-color="#b42e8e"/><stop offset="0.009" stop-opacity="0.26" stop-color="#b42e8e"/><stop offset="0.018" stop-opacity="0.41" stop-color="#b42e8e"/><stop offset="0.027" stop-opacity="0.34" stop-color="#b42e8e"/><stop offset="0.036" stop-opacity="0.24" stop-color="#b42e8e"/><stop offset="0.045" stop-opacity="0.17" stop-color="#b42e8e"/><stop offset="0.054" stop-opacity="0.23" stop-color="#b42e8e"/><stop offset="0.062" stop-opacity="0.37" stop-color="#b42e8e"/><stop offset="0.071" stop-opacity="0.28" stop-color="#b42e8e"/><stop offset="0.080" stop-opacity="0.35" stop-color="#b42e8e"/><stop offset="0.089" stop-opacity="0.40" stop-color="#b42e8e"/><stop offset="0.098" stop-opacity="0.18" stop-color="#b42e8e"/><stop offset="0.107" stop-opacity="0.36" stop-color="#b42e8e"/><stop offset="0.116" stop-opacity="0.16" stop-color="#b42e8e"/><stop offset="0.125" stop-opacity="0.40" stop-color="#b42e8e"/><stop offset="0.134" stop-opacity="0.20" stop-color="#b42e8e"/><stop offset="0.143" stop-opacity="0.23" stop-color="#b42e8e"/><stop offset="0.152" stop-opacity="0.45" stop-color="#b42e8e"/><stop offset="0.161" stop-opacity="0.26" stop-color="#b42e8e"/><stop offset="0.170" stop-opacity="0.21" stop-color="#b42e8e"/><stop offset="0.179" stop-opacity="0.43" stop-color="#b42e8e"/><stop offset="0.188" stop-opacity="0.34" stop-color="#b42e8e"/><stop offset="0.196" stop-opacity="0.43" stop-color="#b42e8e"/><stop offset="0.205" stop-opacity="0.27" stop-color="#b42e8e"/><stop offset="0.214" stop-opacity="0.30" stop-color="#b42e8e"/><stop offset="0.223" stop-opacity="0.45" stop-color="#b42e8e"/><stop offset="0.232" stop-opacity="0.30" stop-color="#b42e8e"/><stop offset="0.241" stop-opacity="0.46" stop-color="#b42e8e"/><stop offset="0.250" stop-opacity="0.20" stop-color="#b42e8e"/><stop offset="0.259" stop-opacity="0.96" stop-color="#b42e8e"/><stop offset="0.268" stop-opacity="0.46" stop-color="#b42e8e"/><stop offset="0.277" stop-opacity="0.73" stop-color="#b42e8e"/><stop offset="0.286" stop-opacity="0.34" stop-color="#b42e8e"/><stop offset="0.295" stop-opacity="0.47" stop-color="#b42e8e"/><stop offset="0.304" stop-opacity="1.00" stop-color="#b42e8e"/><stop offset="0.312" stop-opacity="0.68" stop-color="#b42e8e"/><stop offset="0.321" stop-opacity="0.94" stop-color="#b42e8e"/><stop offset="0.330" stop-opacity="0.53" stop-color="#b42e8e"/><stop offset="0.339" stop-opacity="0.60" stop-color="#b42e8e"/><stop offset="0.348" stop-opacity="0.41" stop-color="#b42e8e"/><stop offset="0.357" stop-opacity="0.75" stop-color="#b42e8e"/><stop offset="0.366" stop-opacity="0.98" stop-color="#b42e8e"/><stop offset="0.375" stop-opacity="0.72" stop-color="#b42e8e"/><stop offset="0.384" stop-opacity="0.62" stop-color="#b42e8e"/><stop offset="0.393" stop-opacity="1.00" stop-color="#b42e8e"/><stop offset="0.402" stop-opacity="1.00" stop-color="#b42e8e"/><stop offset="0.411" stop-opacity="0.84" stop-color="#b42e8e"/><stop offset="0.420" stop-opacity="0.39" stop-color="#b42e8e"/><stop offset="0.429" stop-opacity="0.81" stop-color="#b42e8e"/><stop offset="0.438" stop-opacity="0.67" stop-color="#b42e8e"/><stop offset="0.446" stop-opacity="1.00" stop-color="#b42e8e"/><stop offset="0.455" stop-opacity="0.61" stop-color="#b42e8e"/><stop offset="0.464" stop-opacity="0.83" stop-color="#b42e8e"/><stop offset="0.473" stop-opacity="0.81" stop-color="#b42e8e"/><stop offset="0.482" stop-opacity="0.62" stop-color="#b42e8e"/><stop offset="0.491" stop-opacity="0.73" stop-color="#b42e8e"/><stop offset="0.500" stop-opacity="0.84" stop-color="#b42e8e"/><stop offset="0.509" stop-opacity="1.00" stop-color="#b42e8e"/><stop offset="0.518" stop-opacity="0.71" stop-color="#b42e8e"/><stop offset="0.527" stop-opacity="0.61" stop-color="#b42e8e"/><stop offset="0.536" stop-opacity="1.00" stop-color="#b42e8e"/><stop offset="0.545" stop-opacity="0.38" stop-color="#b42e8e"/><stop offset="0.554" stop-opacity="0.96" stop-color="#b42e8e"/><stop offset="0.562" stop-opacity="0.85" stop-color="#b42e8e"/><stop offset="0.571" stop-opacity="0.76" stop-color="#b42e8e"/><stop offset="0.580" stop-opacity="0.67" stop-color="#b42e8e"/><stop offset="0.589" stop-opacity="0.90" stop-color="#b42e8e"/><stop offset="0.598" stop-opacity="1.00" stop-color="#b42e8e"/><stop offset="0.607" stop-opacity="0.88" stop-color="#b42e8e"/><stop offset="0.616" stop-opacity="0.90" stop-color="#b42e8e"/><stop offset="0.625" stop-opacity="0.36" stop-color="#b42e8e"/><stop offset="0.634" stop-opacity="0.58" stop-color="#b42e8e"/><stop offset="0.643" stop-opacity="0.44" stop-color="#b42e8e"/><stop offset="0.652" stop-opacity="1.00" stop-color="#b42e8e"/><stop offset="0.661" stop-opacity="1.00" stop-color="#b42e8e"/><stop offset="0.670" stop-opacity="0.45" stop-color="#b42e8e"/><stop offset="0.679" stop-opacity="0.78" stop-color="#b42e8e"/><stop offset="0.688" stop-opacity="0.77" stop-color="#b42e8e"/><stop offset="0.696" stop-opacity="0.37" stop-color="#b42e8e"/><stop offset="0.705" stop-opacity="0.63" stop-color="#b42e8e"/><stop offset="0.714" stop-opacity="0.90" stop-color="#b42e8e"/><stop offset="0.723" stop-opacity="0.82" stop-color="#b42e8e"/><stop offset="0.732" stop-opacity="0.55" stop-color="#b42e8e"/><stop offset="0.741" stop-opacity="0.91" stop-color="#b42e8e"/><stop offset="0.750" stop-opacity="0.56" stop-color="#b42e8e"/><stop offset="0.759" stop-opacity="0.57" stop-color="#b42e8e"/><stop offset="0.768" stop-opacity="0.50" stop-color="#b42e8e"/><stop offset="0.777" stop-opacity="0.81" stop-color="#b42e8e"/><stop offset="0.786" stop-opacity="0.63" stop-color="#b42e8e"/><stop offset="0.795" stop-opacity="0.72" stop-color="#b42e8e"/><stop offset="0.804" stop-opacity="0.64" stop-color="#b42e8e"/><stop offset="0.812" stop-opacity="0.47" stop-color="#b42e8e"/><stop offset="0.821" stop-opacity="0.81" stop-color="#b42e8e"/><stop offset="0.830" stop-opacity="0.66" stop-color="#b42e8e"/><stop offset="0.839" stop-opacity="0.65" stop-color="#b42e8e"/><stop offset="0.848" stop-opacity="0.41" stop-color="#b42e8e"/><stop offset="0.857" stop-opacity="0.24" stop-color="#b42e8e"/><stop offset="0.866" stop-opacity="0.40" stop-color="#b42e8e"/><stop offset="0.875" stop-opacity="0.50" stop-color="#b42e8e"/><stop offset="0.884" stop-opacity="0.49" stop-color="#b42e8e"/><stop offset="0.893" stop-opacity="0.31" stop-color="#b42e8e"/><stop offset="0.902" stop-opacity="0.23" stop-color="#b42e8e"/><stop offset="0.911" stop-opacity="0.38" stop-color="#b42e8e"/><stop offset="0.920" stop-opacity="0.52" stop-color="#b42e8e"/><stop offset="0.929" stop-opacity="0.24" stop-color="#b42e8e"/><stop offset="0.938" stop-opacity="0.46" stop-color="#b42e8e"/><stop offset="0.946" stop-opacity="0.24" stop-color="#b42e8e"/><stop offset="0.955" stop-opacity="0.30" stop-color="#b42e8e"/><stop offset="0.964" stop-opacity="0.20" stop-color="#b42e8e"/><stop offset="0.973" stop-opacity="0.29" stop-color="#b42e8e"/><stop offset="0.982" stop-opacity="0.32" stop-color="#b42e8e"/><stop offset="0.991" stop-opacity="0.55" stop-color="#b42e8e"/><stop offset="1.000" stop-opacity="0.55" stop-color="#b42e8e"/></linearGradient></defs><defs><linearGradient id="g28" x1="0" y1="0" x2="0" y2="1"><stop offset="0.000" stop-opacity="0.25" stop-color="#b42e8e"/><stop offset="0.009" stop-opacity="0.30" stop-color="#b42e8e"/><stop offset="0.018" stop-opacity="0.54" stop-color="#b42e8e"/><stop offset="0.027" stop-opacity="0.25" stop-color="#b42e8e"/><stop offset="0.036" stop-opacity="0.30" stop-color="#b42e8e"/><stop offset="0.045" stop-opacity="0.35" stop-color="#b42e8e"/><stop offset="0.054" stop-opacity="0.22" stop-color="#b42e8e"/><stop offset="0.062" stop-opacity="0.28" stop-color="#b42e8e"/><stop offset="0.071" stop-opacity="0.33" stop-color="#b42e8e"/><stop offset="0.080" stop-opacity="0.33" stop-color="#b42e8e"/><stop offset="0.089" stop-opacity="0.81" stop-color="#b42e8e"/><stop offset="0.098" stop-opacity="0.41" stop-color="#b42e8e"/><stop offset="0.107" stop-opacity="0.37" stop-color="#b42e8e"/><stop offset="0.116" stop-opacity="0.77" stop-color="#b42e8e"/><stop offset="0.125" stop-opacity="0.51" stop-color="#b42e8e"/><stop offset="0.134" stop-opacity="0.73" stop-color="#b42e8e"/><stop offset="0.143" stop-opacity="0.62" stop-color="#b42e8e"/><stop offset="0.152" stop-opacity="0.70" stop-color="#b42e8e"/><stop offset="0.161" stop-opacity="0.44" stop-color="#b42e8e"/><stop offset="0.170" stop-opacity="0.34" stop-color="#b42e8e"/><stop offset="0.179" stop-opacity="0.69" stop-color="#b42e8e"/><stop offset="0.188" stop-opacity="0.52" stop-color="#b42e8e"/><stop offset="0.196" stop-opacity="0.57" stop-color="#b42e8e"/><stop offset="0.205" stop-opacity="0.64" stop-color="#b42e8e"/><stop offset="0.214" stop-opacity="0.69" stop-color="#b42e8e"/><stop offset="0.223" stop-opacity="0.41" stop-color="#b42e8e"/><stop offset="0.232" stop-opacity="0.46" stop-color="#b42e8e"/><stop offset="0.241" stop-opacity="0.78" stop-color="#b42e8e"/><stop offset="0.250" stop-opacity="0.56" stop-color="#b42e8e"/><stop offset="0.259" stop-opacity="0.42" stop-color="#b42e8e"/><stop offset="0.268" stop-opacity="0.62" stop-color="#b42e8e"/><stop offset="0.277" stop-opacity="0.40" stop-color="#b42e8e"/><stop offset="0.286" stop-opacity="0.70" stop-color="#b42e8e"/><stop offset="0.295" stop-opacity="0.28" stop-color="#b42e8e"/><stop offset="0.304" stop-opacity="0.73" stop-color="#b42e8e"/><stop offset="0.312" stop-opacity="0.58" stop-color="#b42e8e"/><stop offset="0.321" stop-opacity="0.46" stop-color="#b42e8e"/><stop offset="0.330" stop-opacity="0.79" stop-color="#b42e8e"/><stop offset="0.339" stop-opacity="0.41" stop-color="#b42e8e"/><stop offset="0.348" stop-opacity="0.40" stop-color="#b42e8e"/><stop offset="0.357" stop-opacity="0.30" stop-color="#b42e8e"/><stop offset="0.366" stop-opacity="0.57" stop-color="#b42e8e"/><stop offset="0.375" stop-opacity="0.69" stop-color="#b42e8e"/><stop offset="0.384" stop-opacity="0.64" stop-color="#b42e8e"/><stop offset="0.393" stop-opacity="0.49" stop-color="#b42e8e"/><stop offset="0.402" stop-opacity="0.72" stop-color="#b42e8e"/><stop offset="0.411" stop-opacity="0.32" stop-color="#b42e8e"/><stop offset="0.420" stop-opacity="0.43" stop-color="#b42e8e"/><stop offset="0.429" stop-opacity="0.62" stop-color="#b42e8e"/><stop offset="0.438" stop-opacity="0.81" stop-color="#b42e8e"/><stop offset="0.446" stop-opacity="0.62" stop-color="#b42e8e"/><stop offset="0.455" stop-opacity="0.65" stop-color="#b42e8e"/><stop offset="0.464" stop-opacity="0.70" stop-color="#b42e8e"/><stop offset="0.473" stop-opacity="0.48" stop-color="#b42e8e"/><stop offset="0.482" stop-opacity="0.79" stop-color="#b42e8e"/><stop offset="0.491" stop-opacity="0.68" stop-color="#b42e8e"/><stop offset="0.500" stop-opacity="0.45" stop-color="#b42e8e"/><stop offset="0.509" stop-opacity="0.48" stop-color="#b42e8e"/><stop offset="0.518" stop-opacity="0.72" stop-color="#b42e8e"/><stop offset="0.527" stop-opacity="0.46" stop-color="#b42e8e"/><stop offset="0.536" stop-opacity="0.36" stop-color="#b42e8e"/><stop offset="0.545" stop-opacity="0.75" stop-color="#b42e8e"/><stop offset="0.554" stop-opacity="0.56" stop-color="#b42e8e"/><stop offset="0.562" stop-opacity="0.73" stop-color="#b42e8e"/><stop offset="0.571" stop-opacity="0.84" stop-color="#b42e8e"/><stop offset="0.580" stop-opacity="1.00" stop-color="#b42e8e"/><stop offset="0.589" stop-opacity="0.44" stop-color="#b42e8e"/><stop offset="0.598" stop-opacity="0.59" stop-color="#b42e8e"/><stop offset="0.607" stop-opacity="0.39" stop-color="#b42e8e"/><stop offset="0.616" stop-opacity="0.65" stop-color="#b42e8e"/><stop offset="0.625" stop-opacity="0.71" stop-color="#b42e8e"/><stop offset="0.634" stop-opacity="0.98" stop-color="#b42e8e"/><stop offset="0.643" stop-opacity="0.84" stop-color="#b42e8e"/><stop offset="0.652" stop-opacity="0.77" stop-color="#b42e8e"/><stop offset="0.661" stop-opacity="0.64" stop-color="#b42e8e"/><stop offset="0.670" stop-opacity="0.77" stop-color="#b42e8e"/><stop offset="0.679" stop-opacity="0.54" stop-color="#b42e8e"/><stop offset="0.688" stop-opacity="0.97" stop-color="#b42e8e"/><stop offset="0.696" stop-opacity="0.93" stop-color="#b42e8e"/><stop offset="0.705" stop-opacity="0.97" stop-color="#b42e8e"/><stop offset="0.714" stop-opacity="0.45" stop-color="#b42e8e"/><stop offset="0.723" stop-opacity="0.84" stop-color="#b42e8e"/><stop offset="0.732" stop-opacity="0.90" stop-color="#b42e8e"/><stop offset="0.741" stop-opacity="0.71" stop-color="#b42e8e"/><stop offset="0.750" stop-opacity="1.00" stop-color="#b42e8e"/><stop offset="0.759" stop-opacity="0.77" stop-color="#b42e8e"/><stop offset="0.768" stop-opacity="0.68" stop-color="#b42e8e"/><stop offset="0.777" stop-opacity="0.72" stop-color="#b42e8e"/><stop offset="0.786" stop-opacity="0.63" stop-color="#b42e8e"/><stop offset="0.795" stop-opacity="0.76" stop-color="#b42e8e"/><stop offset="0.804" stop-opacity="0.33" stop-color="#b42e8e"/><stop offset="0.812" stop-opacity="0.66" stop-color="#b42e8e"/><stop offset="0.821" stop-opacity="0.66" stop-color="#b42e8e"/><stop offset="0.830" stop-opacity="0.61" stop-color="#b42e8e"/><stop offset="0.839" stop-opacity="0.41" stop-color="#b42e8e"/><stop offset="0.848" stop-opacity="0.29" stop-color="#b42e8e"/><stop offset="0.857" stop-opacity="0.41" stop-color="#b42e8e"/><stop offset="0.866" stop-opacity="0.50" stop-color="#b42e8e"/><stop offset="0.875" stop-opacity="0.28" stop-color="#b42e8e"/><stop offset="0.884" stop-opacity="0.26" stop-color="#b42e8e"/><stop offset="0.893" stop-opacity="0.26" stop-color="#b42e8e"/><stop offset="0.902" stop-opacity="0.21" stop-color="#b42e8e"/><stop offset="0.911" stop-opacity="0.44" stop-color="#b42e8e"/><stop offset="0.920" stop-opacity="0.56" stop-color="#b42e8e"/><stop offset="0.929" stop-opacity="0.49" stop-color="#b42e8e"/><stop offset="0.938" stop-opacity="0.32" stop-color="#b42e8e"/><stop offset="0.946" stop-opacity="0.45" stop-color="#b42e8e"/><stop offset="0.955" stop-opacity="0.20" stop-color="#b42e8e"/><stop offset="0.964" stop-opacity="0.50" stop-color="#b42e8e"/><stop offset="0.973" stop-opacity="0.30" stop-color="#b42e8e"/><stop offset="0.982" stop-opacity="0.18" stop-color="#b42e8e"/><stop offset="0.991" stop-opacity="0.42" stop-color="#b42e8e"/><stop offset="1.000" stop-opacity="0.23" stop-color="#b42e8e"/></linearGradient></defs><g filter="url(#lb)"><rect x="28.50" y="25" width="2.6" height="677" fill="url(#g0)"/><rect x="56.82" y="25" width="2.6" height="677" fill="url(#g1)"/><rect x="85.14" y="25" width="2.6" height="677" fill="url(#g2)"/><rect x="113.46" y="25" width="2.6" height="677" fill="url(#g3)"/><rect x="170.10" y="25" width="2.6" height="677" fill="url(#g5)"/><rect x="198.42" y="25" width="2.6" height="677" fill="url(#g6)"/><rect x="226.74" y="25" width="2.6" height="677" fill="url(#g7)"/><rect x="255.06" y="25" width="2.6" height="677" fill="url(#g8)"/><rect x="283.38" y="25" width="2.6" height="677" fill="url(#g9)"/><rect x="311.70" y="25" width="2.6" height="677" fill="url(#g10)"/><rect x="340.02" y="25" width="2.6" height="677" fill="url(#g11)"/><rect x="368.34" y="25" width="2.6" height="677" fill="url(#g12)"/><rect x="396.66" y="25" width="2.6" height="677" fill="url(#g13)"/><rect x="424.98" y="25" width="2.6" height="677" fill="url(#g14)"/><rect x="453.30" y="25" width="2.6" height="677" fill="url(#g15)"/><rect x="481.62" y="25" width="2.6" height="677" fill="url(#g16)"/><rect x="509.94" y="25" width="2.6" height="677" fill="url(#g17)"/><rect x="538.26" y="25" width="2.6" height="677" fill="url(#g18)"/><rect x="566.58" y="25" width="2.6" height="677" fill="url(#g19)"/><rect x="594.90" y="25" width="2.6" height="677" fill="url(#g20)"/><rect x="623.22" y="25" width="2.6" height="677" fill="url(#g21)"/><rect x="651.54" y="25" width="2.6" height="677" fill="url(#g22)"/><rect x="679.86" y="25" width="2.6" height="677" fill="url(#g23)"/><rect x="736.50" y="25" width="2.6" height="677" fill="url(#g25)"/><rect x="764.82" y="25" width="2.6" height="677" fill="url(#g26)"/><rect x="793.14" y="25" width="2.6" height="677" fill="url(#g27)"/><rect x="821.46" y="25" width="2.6" height="677" fill="url(#g28)"/></g><g filter="url(#lb2)"><rect x="142.40" y="25" width="3.2" height="677" fill="url(#g4)"/><rect x="707.70" y="25" width="3.2" height="677" fill="url(#g24)"/></g><g><rect x="1" y="61.9" width="849" height="1.8" fill="#a02a90" opacity="0.36"/><rect x="1" y="161.9" width="849" height="1.8" fill="#a02a90" opacity="0.32"/><rect x="1" y="261.9" width="849" height="1.8" fill="#a02a90" opacity="0.36"/><rect x="1" y="361.9" width="849" height="1.8" fill="#a02a90" opacity="0.22"/><rect x="1" y="461.9" width="849" height="1.8" fill="#a02a90" opacity="0.26"/><rect x="1" y="561.9" width="849" height="1.8" fill="#a02a90" opacity="0.38"/><rect x="1" y="661.9" width="849" height="1.8" fill="#a02a90" opacity="0.36"/></g><defs><linearGradient id="met" x1="0" y1="0" x2="1" y2="0"><stop offset="0.0000" stop-color="#a02a90" stop-opacity="0.00"/><stop offset="0.0714" stop-color="#a82c8c" stop-opacity="0.20"/><stop offset="0.2036" stop-color="#c04868" stop-opacity="0.40"/><stop offset="0.2857" stop-color="#e86838" stop-opacity="0.70"/><stop offset="0.3321" stop-color="#ffb030" stop-opacity="1.00"/><stop offset="0.3571" stop-color="#ffe060" stop-opacity="1.00"/><stop offset="0.3857" stop-color="#fff488" stop-opacity="1.00"/><stop offset="0.4143" stop-color="#ffd040" stop-opacity="1.00"/><stop offset="0.4571" stop-color="#f08028" stop-opacity="0.70"/><stop offset="0.5357" stop-color="#c04868" stop-opacity="0.35"/><stop offset="0.7143" stop-color="#a82c8c" stop-opacity="0.20"/><stop offset="1.0000" stop-color="#a02a90" stop-opacity="0.00"/></linearGradient><filter id="mb" x="300" y="80" width="320" height="30" filterUnits="userSpaceOnUse"><feGaussianBlur stdDeviation="0.7 0.45"/></filter></defs><g filter="url(#mb)"><rect x="320" y="93.2" width="280" height="2.4" fill="url(#met)"/><ellipse cx="429.5" cy="92.2" rx="4" ry="1.5" fill="#f09838" opacity="0.65"/></g><rect x="1" y="25" width="849" height="1" fill="#10083a"/></svg>
<svg width="851" height="25" viewBox="0 0 851 25"><rect x="0" y="0" width="851" height="25" fill="#fff"/><rect x="1" y="15" width="1" height="10" fill="#000"/><rect x="6" y="18" width="1" height="7" fill="#000"/><rect x="12" y="18" width="1" height="7" fill="#000"/><rect x="18" y="18" width="1" height="7" fill="#000"/><rect x="23" y="18" width="1" height="7" fill="#000"/><rect x="29" y="13" width="1" height="12" fill="#000"/><rect x="35" y="18" width="1" height="7" fill="#000"/><rect x="40" y="18" width="1" height="7" fill="#000"/><rect x="46" y="18" width="1" height="7" fill="#000"/><rect x="52" y="18" width="1" height="7" fill="#000"/><rect x="57" y="15" width="1" height="10" fill="#000"/><rect x="63" y="18" width="1" height="7" fill="#000"/><rect x="69" y="18" width="1" height="7" fill="#000"/><rect x="74" y="18" width="1" height="7" fill="#000"/><rect x="80" y="18" width="1" height="7" fill="#000"/><rect x="86" y="13" width="1" height="12" fill="#000"/><rect x="91" y="18" width="1" height="7" fill="#000"/><rect x="97" y="18" width="1" height="7" fill="#000"/><rect x="103" y="18" width="1" height="7" fill="#000"/><rect x="108" y="18" width="1" height="7" fill="#000"/><rect x="114" y="15" width="1" height="10" fill="#000"/><rect x="120" y="18" width="1" height="7" fill="#000"/><rect x="125" y="18" width="1" height="7" fill="#000"/><rect x="131" y="18" width="1" height="7" fill="#000"/><rect x="137" y="18" width="1" height="7" fill="#000"/><rect x="142" y="13" width="1" height="12" fill="#000"/><rect x="148" y="18" width="1" height="7" fill="#000"/><rect x="154" y="18" width="1" height="7" fill="#000"/><rect x="159" y="18" width="1" height="7" fill="#000"/><rect x="165" y="18" width="1" height="7" fill="#000"/><rect x="171" y="15" width="1" height="10" fill="#000"/><rect x="176" y="18" width="1" height="7" fill="#000"/><rect x="182" y="18" width="1" height="7" fill="#000"/><rect x="188" y="18" width="1" height="7" fill="#000"/><rect x="193" y="18" width="1" height="7" fill="#000"/><rect x="199" y="13" width="1" height="12" fill="#000"/><rect x="205" y="18" width="1" height="7" fill="#000"/><rect x="210" y="18" width="1" height="7" fill="#000"/><rect x="216" y="18" width="1" height="7" fill="#000"/><rect x="222" y="18" width="1" height="7" fill="#000"/><rect x="227" y="15" width="1" height="10" fill="#000"/><rect x="233" y="18" width="1" height="7" fill="#000"/><rect x="239" y="18" width="1" height="7" fill="#000"/><rect x="244" y="18" width="1" height="7" fill="#000"/><rect x="250" y="18" width="1" height="7" fill="#000"/><rect x="256" y="13" width="1" height="12" fill="#000"/><rect x="261" y="18" width="1" height="7" fill="#000"/><rect x="267" y="18" width="1" height="7" fill="#000"/><rect x="273" y="18" width="1" height="7" fill="#000"/><rect x="278" y="18" width="1" height="7" fill="#000"/><rect x="284" y="15" width="1" height="10" fill="#000"/><rect x="290" y="18" width="1" height="7" fill="#000"/><rect x="295" y="18" width="1" height="7" fill="#000"/><rect x="301" y="18" width="1" height="7" fill="#000"/><rect x="307" y="18" width="1" height="7" fill="#000"/><rect x="312" y="13" width="1" height="12" fill="#000"/><rect x="318" y="18" width="1" height="7" fill="#000"/><rect x="324" y="18" width="1" height="7" fill="#000"/><rect x="329" y="18" width="1" height="7" fill="#000"/><rect x="335" y="18" width="1" height="7" fill="#000"/><rect x="341" y="15" width="1" height="10" fill="#000"/><rect x="346" y="18" width="1" height="7" fill="#000"/><rect x="352" y="18" width="1" height="7" fill="#000"/><rect x="358" y="18" width="1" height="7" fill="#000"/><rect x="363" y="18" width="1" height="7" fill="#000"/><rect x="369" y="13" width="1" height="12" fill="#000"/><rect x="375" y="18" width="1" height="7" fill="#000"/><rect x="380" y="18" width="1" height="7" fill="#000"/><rect x="386" y="18" width="1" height="7" fill="#000"/><rect x="391" y="18" width="1" height="7" fill="#000"/><rect x="397" y="15" width="1" height="10" fill="#000"/><rect x="403" y="18" width="1" height="7" fill="#000"/><rect x="408" y="18" width="1" height="7" fill="#000"/><rect x="414" y="18" width="1" height="7" fill="#000"/><rect x="420" y="18" width="1" height="7" fill="#000"/><rect x="425" y="13" width="1" height="12" fill="#000"/><rect x="431" y="18" width="1" height="7" fill="#000"/><rect x="437" y="18" width="1" height="7" fill="#000"/><rect x="442" y="18" width="1" height="7" fill="#000"/><rect x="448" y="18" width="1" height="7" fill="#000"/><rect x="454" y="15" width="1" height="10" fill="#000"/><rect x="459" y="18" width="1" height="7" fill="#000"/><rect x="465" y="18" width="1" height="7" fill="#000"/><rect x="471" y="18" width="1" height="7" fill="#000"/><rect x="476" y="18" width="1" height="7" fill="#000"/><rect x="482" y="13" width="1" height="12" fill="#000"/><rect x="488" y="18" width="1" height="7" fill="#000"/><rect x="493" y="18" width="1" height="7" fill="#000"/><rect x="499" y="18" width="1" height="7" fill="#000"/><rect x="505" y="18" width="1" height="7" fill="#000"/><rect x="510" y="15" width="1" height="10" fill="#000"/><rect x="516" y="18" width="1" height="7" fill="#000"/><rect x="522" y="18" width="1" height="7" fill="#000"/><rect x="527" y="18" width="1" height="7" fill="#000"/><rect x="533" y="18" width="1" height="7" fill="#000"/><rect x="539" y="13" width="1" height="12" fill="#000"/><rect x="544" y="18" width="1" height="7" fill="#000"/><rect x="550" y="18" width="1" height="7" fill="#000"/><rect x="556" y="18" width="1" height="7" fill="#000"/><rect x="561" y="18" width="1" height="7" fill="#000"/><rect x="567" y="15" width="1" height="10" fill="#000"/><rect x="573" y="18" width="1" height="7" fill="#000"/><rect x="578" y="18" width="1" height="7" fill="#000"/><rect x="584" y="18" width="1" height="7" fill="#000"/><rect x="590" y="18" width="1" height="7" fill="#000"/><rect x="595" y="13" width="1" height="12" fill="#000"/><rect x="601" y="18" width="1" height="7" fill="#000"/><rect x="607" y="18" width="1" height="7" fill="#000"/><rect x="612" y="18" width="1" height="7" fill="#000"/><rect x="618" y="18" width="1" height="7" fill="#000"/><rect x="624" y="15" width="1" height="10" fill="#000"/><rect x="629" y="18" width="1" height="7" fill="#000"/><rect x="635" y="18" width="1" height="7" fill="#000"/><rect x="641" y="18" width="1" height="7" fill="#000"/><rect x="646" y="18" width="1" height="7" fill="#000"/><rect x="652" y="13" width="1" height="12" fill="#000"/><rect x="658" y="18" width="1" height="7" fill="#000"/><rect x="663" y="18" width="1" height="7" fill="#000"/><rect x="669" y="18" width="1" height="7" fill="#000"/><rect x="675" y="18" width="1" height="7" fill="#000"/><rect x="680" y="15" width="1" height="10" fill="#000"/><rect x="686" y="18" width="1" height="7" fill="#000"/><rect x="692" y="18" width="1" height="7" fill="#000"/><rect x="697" y="18" width="1" height="7" fill="#000"/><rect x="703" y="18" width="1" height="7" fill="#000"/><rect x="709" y="13" width="1" height="12" fill="#000"/><rect x="714" y="18" width="1" height="7" fill="#000"/><rect x="720" y="18" width="1" height="7" fill="#000"/><rect x="726" y="18" width="1" height="7" fill="#000"/><rect x="731" y="18" width="1" height="7" fill="#000"/><rect x="737" y="15" width="1" height="10" fill="#000"/><rect x="743" y="18" width="1" height="7" fill="#000"/><rect x="748" y="18" width="1" height="7" fill="#000"/><rect x="754" y="18" width="1" height="7" fill="#000"/><rect x="760" y="18" width="1" height="7" fill="#000"/><rect x="765" y="13" width="1" height="12" fill="#000"/><rect x="771" y="18" width="1" height="7" fill="#000"/><rect x="777" y="18" width="1" height="7" fill="#000"/><rect x="782" y="18" width="1" height="7" fill="#000"/><rect x="788" y="18" width="1" height="7" fill="#000"/><rect x="794" y="15" width="1" height="10" fill="#000"/><rect x="799" y="18" width="1" height="7" fill="#000"/><rect x="805" y="18" width="1" height="7" fill="#000"/><rect x="811" y="18" width="1" height="7" fill="#000"/><rect x="816" y="18" width="1" height="7" fill="#000"/><rect x="822" y="13" width="1" height="12" fill="#000"/><rect x="828" y="18" width="1" height="7" fill="#000"/><rect x="833" y="18" width="1" height="7" fill="#000"/><rect x="839" y="18" width="1" height="7" fill="#000"/><rect x="845" y="18" width="1" height="7" fill="#000"/></svg>
<div class="k" style="left:29.5px;top:1px;width:60px;margin-left:-30px;text-align:center">9800</div>
<div class="k" style="left:86.1px;top:1px;width:60px;margin-left:-30px;text-align:center">9900</div>
<div class="k" style="left:142.8px;top:1px;width:60px;margin-left:-30px;text-align:center">10000</div>
<div class="k" style="left:199.4px;top:1px;width:60px;margin-left:-30px;text-align:center">10100</div>
<div class="k" style="left:256.1px;top:1px;width:60px;margin-left:-30px;text-align:center">10200</div>
<div class="k" style="left:312.7px;top:1px;width:60px;margin-left:-30px;text-align:center">10300</div>
<div class="k" style="left:369.3px;top:1px;width:60px;margin-left:-30px;text-align:center">10400</div>
<div class="k" style="left:426.0px;top:1px;width:60px;margin-left:-30px;text-align:center">10500</div>
<div class="k" style="left:482.6px;top:1px;width:60px;margin-left:-30px;text-align:center">10600</div>
<div class="k" style="left:539.3px;top:1px;width:60px;margin-left:-30px;text-align:center">10700</div>
<div class="k" style="left:595.9px;top:1px;width:60px;margin-left:-30px;text-align:center">10800</div>
<div class="k" style="left:652.5px;top:1px;width:60px;margin-left:-30px;text-align:center">10900</div>
<div class="k" style="left:709.2px;top:1px;width:60px;margin-left:-30px;text-align:center">11000</div>
<div class="k" style="left:765.8px;top:1px;width:60px;margin-left:-30px;text-align:center">11100</div>
<div class="k" style="left:43.3px;top:1px">Hz</div>
<svg width="851" height="25" viewBox="0 0 851 25"><polygon points="198.9,5.0 206.7,12.8 198.9,20.6 191.1,12.8" fill="#000"/><polygon points="198.9,6.5 205.1,12.8 198.9,18.9 192.7,12.8" fill="#22dd22"/><polygon points="198.9,9.6 202.1,12.8 198.9,15.9 195.7,12.8" fill="#fff"/><rect x="198.5" y="10.2" width="1" height="5.4" fill="#000"/><rect x="197.6" y="9.8" width="2.2" height="0.9" fill="#000"/></svg>
<svg width="851" height="25" viewBox="0 0 851 25"><polygon points="461.9,3.1 469.7,10.9 461.9,18.7 454.1,10.9" fill="#000"/><polygon points="461.9,4.7 468.1,10.9 461.9,17.1 455.7,10.9" fill="#e81010"/><polygon points="461.9,7.7 465.1,10.9 461.9,14.1 458.7,10.9" fill="#fff"/></svg>
<svg width="851" height="25" viewBox="0 0 851 25"><polygon points="617.9,7.1 625.7,14.9 617.9,22.7 610.1,14.9" fill="#000"/><polygon points="617.9,8.7 624.1,14.9 617.9,21.1 611.7,14.9" fill="#0a0ad8"/><polygon points="617.9,11.7 621.1,14.9 617.9,18.1 614.7,14.9" fill="#fff"/></svg>
<div style="position:absolute;left:0;top:35px;width:21px;height:1px;background:#fff"></div>
<div class="t" style="left:3px;top:36px">16:58:15</div>
<div style="position:absolute;left:0;top:185px;width:21px;height:1px;background:#fff"></div>
<div class="t" style="left:3px;top:186px">16:58:00</div>
<div style="position:absolute;left:0;top:335px;width:21px;height:1px;background:#fff"></div>
<div class="t" style="left:3px;top:336px">16:57:45</div>
<div style="position:absolute;left:0;top:485px;width:21px;height:1px;background:#fff"></div>
<div class="t" style="left:3px;top:486px">16:57:30</div>
<div style="position:absolute;left:0;top:635px;width:21px;height:1px;background:#fff"></div>
<div class="t" style="left:3px;top:636px">16:57:15</div>
<div style="position:absolute;left:2px;top:35px;width:1px;height:1px;background:#e8e8e8"></div>
<div style="position:absolute;left:3px;top:36px;width:1px;height:1px;background:#fff"></div>
<div style="position:absolute;left:4px;top:37px;width:1px;height:1px;background:#c8c8d8"></div>
<div class="t" style="left:50.8px;top:35px;font-size:7.6px">^</div>
<div class="t" style="left:56.8px;top:35px">t+14</div>
<div style="position:absolute;left:2px;top:64px;width:1px;height:1px;background:#e8e8e8"></div>
<div style="position:absolute;left:3px;top:65px;width:1px;height:1px;background:#fff"></div>
<div style="position:absolute;left:4px;top:66px;width:1px;height:1px;background:#c8c8d8"></div>
<div class="t" style="left:55px;top:64px">20140910165809052 h<b>C</b>nt420 nb-77 f10504 hit700 dur950 mag-29 1f10504 1<b>L</b>-12 1<b>C</b>-28 1<b>R</b>-16 2f10504 2<b>L</b>3 2<b>C</b>-16 2<b>R</b>0 3f10749 3<b>L</b>1 3<b>C</b>-3 3<b>R</b>4</div>
<div style="position:absolute;left:2px;top:94px;width:1px;height:1px;background:#e8e8e8"></div>
<div style="position:absolute;left:3px;top:95px;width:1px;height:1px;background:#fff"></div>
<div style="position:absolute;left:4px;top:96px;width:1px;height:1px;background:#c8c8d8"></div>
<div class="t" style="left:50.8px;top:94px;font-size:7.6px">^</div>
<div class="t" style="left:56.8px;top:94px">t+09</div>
<div style="position:absolute;left:2px;top:158px;width:1px;height:1px;background:#e8e8e8"></div>
<div style="position:absolute;left:3px;top:159px;width:1px;height:1px;background:#fff"></div>
<div style="position:absolute;left:4px;top:160px;width:1px;height:1px;background:#c8c8d8"></div>
<div class="t" style="left:55px;top:158px">20140910165758052 h<b>C</b>nt419 nb-77 f10900 hit450 dur2450 mag-1 1f10900 1<b>L</b>4 1<b>C</b>-3 1<b>R</b>3 2f10500 2<b>L</b>6 2<b>C</b>-2 2<b>R</b>5 3f10500 3<b>L</b>1 3<b>C</b>-2 3<b>R</b>5</div>
<div style="position:absolute;left:2px;top:204px;width:1px;height:1px;background:#e8e8e8"></div>
<div style="position:absolute;left:3px;top:205px;width:1px;height:1px;background:#fff"></div>
<div style="position:absolute;left:4px;top:206px;width:1px;height:1px;background:#c8c8d8"></div>
<div class="t" style="left:50.8px;top:204px;font-size:7.6px">^</div>
<div class="t" style="left:56.8px;top:204px">t+58</div>
<div style="position:absolute;left:2px;top:215px;width:1px;height:1px;background:#e8e8e8"></div>
<div style="position:absolute;left:3px;top:216px;width:1px;height:1px;background:#fff"></div>
<div style="position:absolute;left:4px;top:217px;width:1px;height:1px;background:#c8c8d8"></div>
<div class="t" style="left:55px;top:215px">20140910165751448 h<b>C</b>nt418 nb-78 f10900 hit550 dur3100 mag-1 1f10900 1<b>L</b>4 1<b>C</b>-4 1<b>R</b>2 2f10901 2<b>L</b>5 2<b>C</b>-3 2<b>R</b>5 3f10301 3<b>L</b>11 3<b>C</b>6 3<b>R</b>8</div>
<div style="position:absolute;left:2px;top:271px;width:1px;height:1px;background:#e8e8e8"></div>
<div style="position:absolute;left:3px;top:272px;width:1px;height:1px;background:#fff"></div>
<div style="position:absolute;left:4px;top:273px;width:1px;height:1px;background:#c8c8d8"></div>
<div class="t" style="left:50.8px;top:271px;font-size:7.6px">^</div>
<div class="t" style="left:56.8px;top:271px">t+51</div>
<div style="position:absolute;left:2px;top:278px;width:1px;height:1px;background:#e8e8e8"></div>
<div style="position:absolute;left:3px;top:279px;width:1px;height:1px;background:#fff"></div>
<div style="position:absolute;left:4px;top:280px;width:1px;height:1px;background:#c8c8d8"></div>
<div class="t" style="left:55px;top:278px">20140910165746552 h<b>C</b>nt417 nb-78 f10900 hit750 dur1950 mag-2 1f10900 1<b>L</b>0 1<b>C</b>-5 1<b>R</b>7 2f10899 2<b>L</b>6 2<b>C</b>-2 2<b>R</b>3 3f10901 3<b>L</b>8 3<b>C</b>0 3<b>R</b>5</div>
<div style="position:absolute;left:2px;top:320px;width:1px;height:1px;background:#e8e8e8"></div>
<div style="position:absolute;left:3px;top:321px;width:1px;height:1px;background:#fff"></div>
<div style="position:absolute;left:4px;top:322px;width:1px;height:1px;background:#c8c8d8"></div>
<div class="t" style="left:50.8px;top:320px;font-size:7.6px">^</div>
<div class="t" style="left:56.8px;top:320px">t+46</div>
<div style="position:absolute;left:2px;top:323px;width:1px;height:1px;background:#e8e8e8"></div>
<div style="position:absolute;left:3px;top:324px;width:1px;height:1px;background:#fff"></div>
<div style="position:absolute;left:4px;top:325px;width:1px;height:1px;background:#c8c8d8"></div>
<div class="t" style="left:55px;top:323px">20140910165742552 h<b>C</b>nt416 nb-79 f10901 hit150 dur1350 mag-1 1f10899 1<b>L</b>3 1<b>C</b>-1 1<b>R</b>7 2f10499 2<b>L</b>8 2<b>C</b>-3 2<b>R</b>6 3f10899 3<b>L</b>6 3<b>C</b>3 3<b>R</b>7</div>
<div style="position:absolute;left:2px;top:359px;width:1px;height:1px;background:#e8e8e8"></div>
<div style="position:absolute;left:3px;top:360px;width:1px;height:1px;background:#fff"></div>
<div style="position:absolute;left:4px;top:361px;width:1px;height:1px;background:#c8c8d8"></div>
<div class="t" style="left:50.8px;top:359px;font-size:7.6px">^</div>
<div class="t" style="left:56.8px;top:359px">t+42</div>
<div style="position:absolute;left:2px;top:387px;width:1px;height:1px;background:#e8e8e8"></div>
<div style="position:absolute;left:3px;top:388px;width:1px;height:1px;background:#fff"></div>
<div style="position:absolute;left:4px;top:389px;width:1px;height:1px;background:#c8c8d8"></div>
<div class="t" style="left:55px;top:387px">20140910165733752 h<b>C</b>nt415 nb-79 f10750 hit350 dur3550 mag-1 1f10750 1<b>L</b>-2 1<b>C</b>-5 1<b>R</b>1 2f10749 2<b>L</b>0 2<b>C</b>-3 2<b>R</b>3 3f10350 3<b>L</b>5 3<b>C</b>-1 3<b>R</b>3</div>
<div style="position:absolute;left:2px;top:447px;width:1px;height:1px;background:#e8e8e8"></div>
<div style="position:absolute;left:3px;top:448px;width:1px;height:1px;background:#fff"></div>
<div style="position:absolute;left:4px;top:449px;width:1px;height:1px;background:#c8c8d8"></div>
<div class="t" style="left:50.8px;top:447px;font-size:7.6px">^</div>
<div class="t" style="left:56.8px;top:447px">t+33</div>
<div style="position:absolute;left:2px;top:466px;width:1px;height:1px;background:#e8e8e8"></div>
<div style="position:absolute;left:3px;top:467px;width:1px;height:1px;background:#fff"></div>
<div style="position:absolute;left:4px;top:468px;width:1px;height:1px;background:#c8c8d8"></div>
<div class="t" style="left:55px;top:466px">20140910165728852 h<b>C</b>nt414 nb-78 f10698 hit200 dur950 mag-1 1f10698 1<b>L</b>3 1<b>C</b>-5 1<b>R</b>3 2f10301 2<b>L</b>6 2<b>C</b>-6 2<b>R</b>5 3f10899 3<b>L</b>2 3<b>C</b>-2 3<b>R</b>3</div>
<div style="position:absolute;left:2px;top:496px;width:1px;height:1px;background:#e8e8e8"></div>
<div style="position:absolute;left:3px;top:497px;width:1px;height:1px;background:#fff"></div>
<div style="position:absolute;left:4px;top:498px;width:1px;height:1px;background:#c8c8d8"></div>
<div class="t" style="left:50.8px;top:496px;font-size:7.6px">^</div>
<div class="t" style="left:56.8px;top:496px">t+28</div>
<div style="position:absolute;left:2px;top:515px;width:1px;height:1px;background:#e8e8e8"></div>
<div style="position:absolute;left:3px;top:516px;width:1px;height:1px;background:#fff"></div>
<div style="position:absolute;left:4px;top:517px;width:1px;height:1px;background:#c8c8d8"></div>
<div class="t" style="left:55px;top:515px">20140910165710948 h<b>C</b>nt413 nb-78 f10900 hit1850 dur12650 mag-2 1f10900 1<b>L</b>-1 1<b>C</b>-4 1<b>R</b>2 2f10650 2<b>L</b>8 2<b>C</b>1 2<b>R</b>3 3f10550 3<b>L</b>7 3<b>C</b>-1 3<b>R</b>4</div>
<div style="position:absolute;left:2px;top:675px;width:1px;height:1px;background:#e8e8e8"></div>
<div style="position:absolute;left:3px;top:676px;width:1px;height:1px;background:#fff"></div>
<div style="position:absolute;left:4px;top:677px;width:1px;height:1px;background:#c8c8d8"></div>
<div class="t" style="left:50.8px;top:675px;font-size:7.6px">^</div>
<div class="t" style="left:56.8px;top:675px">t+10</div>
<div style="position:absolute;left:2px;top:683px;width:1px;height:1px;background:#e8e8e8"></div>
<div style="position:absolute;left:3px;top:684px;width:1px;height:1px;background:#fff"></div>
<div style="position:absolute;left:4px;top:685px;width:1px;height:1px;background:#c8c8d8"></div>
<div class="t" style="left:55px;top:683px">20140910165707552 h<b>C</b>nt412 nb-78 f10901 hit200 dur650 mag-1 1f10901 1<b>L</b>5 1<b>C</b>-4 1<b>R</b>3 2f10450 2<b>L</b>8 2<b>C</b>-2 2<b>R</b>5 3f10451 3<b>L</b>5 3<b>C</b>0 3<b>R</b>4</div>
<svg width="851" height="703" viewBox="0 0 851 703" style="position:absolute;left:0;top:0"><defs><linearGradient id="cb" x1="0" y1="0" x2="1" y2="0"><stop offset="0" stop-color="#000"/><stop offset="0.32" stop-color="#000"/><stop offset="0.4" stop-color="#0c0850"/><stop offset="0.46" stop-color="#241090"/><stop offset="0.53" stop-color="#601a8c"/><stop offset="0.6" stop-color="#b84050"/><stop offset="0.66" stop-color="#f07820"/><stop offset="0.71" stop-color="#ffa800"/><stop offset="0.76" stop-color="#ffd800"/><stop offset="0.775" stop-color="#fff040"/><stop offset="0.785" stop-color="#fff"/><stop offset="1" stop-color="#fff"/></linearGradient></defs><rect x="746" y="605" width="96" height="41" fill="#000"/><rect x="747" y="606" width="94" height="15" fill="url(#cb)"/><rect x="747" y="621" width="94" height="24" fill="#fff"/><rect x="749" y="621" width="1" height="6" fill="#000"/><rect x="752" y="621" width="1" height="9" fill="#000"/><rect x="756" y="621" width="1" height="6" fill="#000"/><rect x="760" y="621" width="1" height="9" fill="#000"/><rect x="763" y="621" width="1" height="6" fill="#000"/><rect x="767" y="621" width="1" height="13" fill="#000"/><rect x="771" y="621" width="1" height="6" fill="#000"/><rect x="774" y="621" width="1" height="9" fill="#000"/><rect x="778" y="621" width="1" height="6" fill="#000"/><rect x="782" y="621" width="1" height="9" fill="#000"/><rect x="786" y="621" width="1" height="6" fill="#000"/><rect x="789" y="621" width="1" height="9" fill="#000"/><rect x="793" y="621" width="1" height="6" fill="#000"/><rect x="797" y="621" width="1" height="9" fill="#000"/><rect x="800" y="621" width="1" height="6" fill="#000"/><rect x="804" y="621" width="1" height="13" fill="#000"/><rect x="808" y="621" width="1" height="6" fill="#000"/><rect x="811" y="621" width="1" height="9" fill="#000"/><rect x="815" y="621" width="1" height="6" fill="#000"/><rect x="819" y="621" width="1" height="9" fill="#000"/><rect x="822" y="621" width="1" height="6" fill="#000"/><rect x="826" y="621" width="1" height="9" fill="#000"/><rect x="830" y="621" width="1" height="6" fill="#000"/><rect x="833" y="621" width="1" height="9" fill="#000"/><rect x="837" y="621" width="1" height="6" fill="#000"/><rect x="680" y="649" width="170" height="53" fill="#000"/><rect x="681" y="650" width="168" height="51" fill="#fff"/><rect x="0" y="25" width="1" height="678" fill="#fff"/><rect x="0" y="702" width="851" height="1" fill="#fff"/><rect x="850" y="25" width="1" height="678" fill="#fff"/></svg>
<div class="k" style="left:747.5px;top:634px">-<span style="margin-left:0.9px">100 dB</span></div>
<div class="k" style="left:796px;top:634px">-50</div>
<div class="k" style="left:834.5px;top:634px">0</div>
<div class="k" style="left:681px;top:651px;font-size:10.55px">Date=2014-09-10 Time=16:56 UTC</div>
<div class="k" style="left:681px;top:663px;font-size:10.55px">Freq=143 050 000 Hz</div>
<div class="k" style="left:681px;top:675px;font-size:10.55px">Echo=10 600 Hz</div>
<div class="k" style="left:681px;top:687px;font-size:10.55px">HPHK</div>
</body></html>
